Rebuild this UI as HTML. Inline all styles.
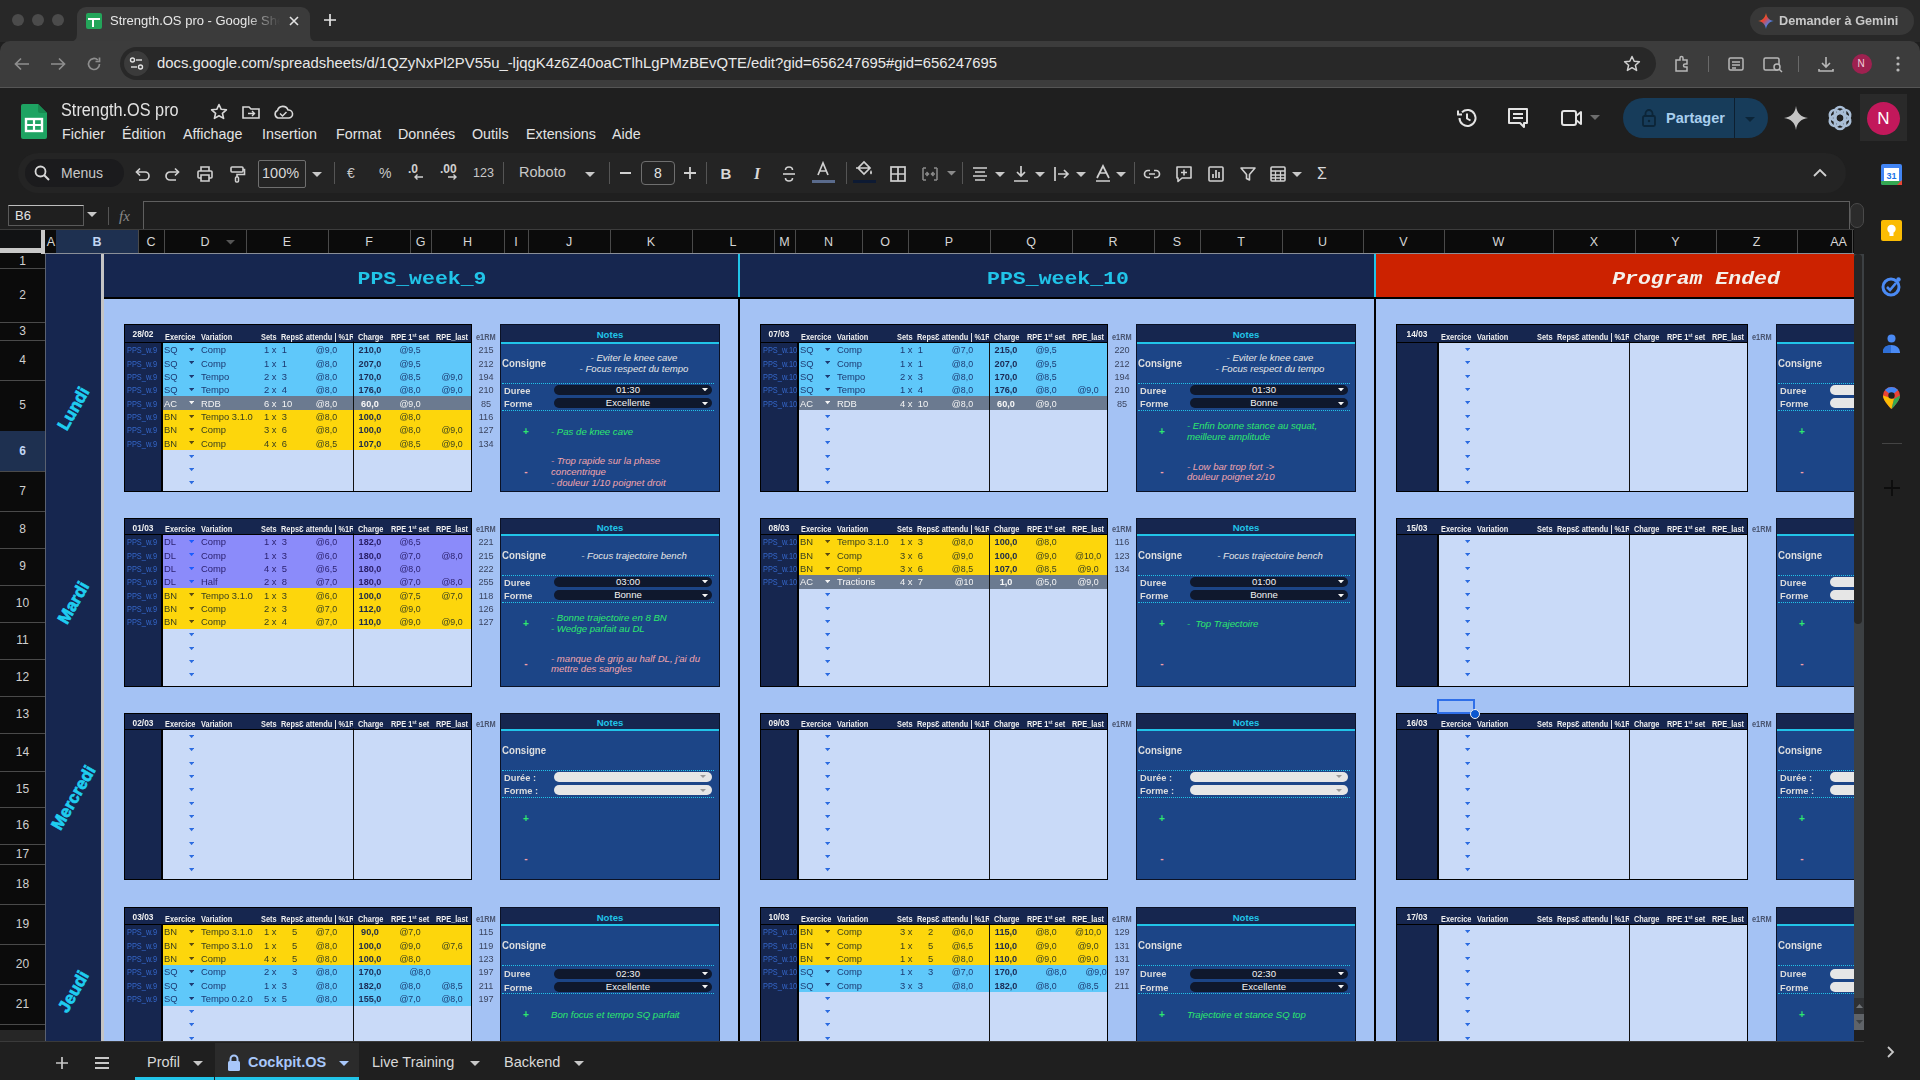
<!DOCTYPE html><html><head><meta charset="utf-8"><title>Strength.OS pro</title><style>
html,body{margin:0;padding:0;} body{width:1920px;height:1080px;overflow:hidden;position:relative;background:#1f1f1f;font-family:"Liberation Sans", sans-serif;} div{box-sizing:border-box;}
</style></head><body>
<div style="position:absolute;left:0px;top:0px;width:1920px;height:42px;background:#282828"></div>
<div style="position:absolute;left:12px;top:14px;width:12px;height:12px;background:#4b4b4b;border-radius:50%"></div>
<div style="position:absolute;left:32px;top:14px;width:12px;height:12px;background:#4b4b4b;border-radius:50%"></div>
<div style="position:absolute;left:52px;top:14px;width:12px;height:12px;background:#4b4b4b;border-radius:50%"></div>
<div style="position:absolute;left:77px;top:7px;width:233px;height:36px;background:#3b3b3b;border-radius:9px 9px 0 0"></div>
<svg style="position:absolute;left:69px;top:34px;" width="8" height="8" viewBox="0 0 8 8"><path d="M0 8 Q8 8 8 0 L8 8 Z" fill="#3b3b3b"/></svg>
<svg style="position:absolute;left:310px;top:34px;" width="8" height="8" viewBox="0 0 8 8"><path d="M8 8 Q0 8 0 0 L0 8 Z" fill="#3b3b3b"/></svg>
<div style="position:absolute;left:86px;top:13px;width:16px;height:16px;background:#23a55a;border-radius:2px"></div>
<div style="position:absolute;left:88px;top:18px;width:12px;height:2px;background:#fff"></div>
<div style="position:absolute;left:92px;top:18px;width:2px;height:9px;background:#fff"></div>
<div style="position:absolute;left:110px;top:12px;width:170px;overflow:hidden;white-space:nowrap;font-size:13px;line-height:18px;color:#e8e8e8;-webkit-mask-image:linear-gradient(90deg,#000 80%,transparent)">Strength.OS pro - Google Sheets</div>
<svg style="position:absolute;left:287px;top:14px;" width="14" height="14" viewBox="0 0 14 14"><path d="M3 3 L11 11 M11 3 L3 11" stroke="#e3e3e3" stroke-width="1.6"/></svg>
<svg style="position:absolute;left:322px;top:12px;" width="16" height="16" viewBox="0 0 16 16"><path d="M8 2 V14 M2 8 H14" stroke="#e3e3e3" stroke-width="1.7"/></svg>
<div style="position:absolute;left:1750px;top:7px;width:164px;height:28px;background:#383838;border-radius:14px"></div>
<svg style="position:absolute;left:1758px;top:13px;" width="16" height="16" viewBox="0 0 16 16"><path d="M8 0 C8.6 4.5 11.5 7.4 16 8 C11.5 8.6 8.6 11.5 8 16 C7.4 11.5 4.5 8.6 0 8 C4.5 7.4 7.4 4.5 8 0Z" fill="url(#gg)"/><defs><linearGradient id="gg" x1="0" y1="0" x2="1" y2="1"><stop offset="0" stop-color="#f4b400"/><stop offset="0.4" stop-color="#e94235"/><stop offset="0.7" stop-color="#4285f4"/><stop offset="1" stop-color="#34a853"/></linearGradient></defs></svg>
<div style="position:absolute;left:1779px;top:12.90px;line-height:16.2px;font-size:13.5px;color:#c8c8c8;font-weight:bold;white-space:nowrap;transform:scaleX(0.94);transform-origin:left">Demander à Gemini</div>
<div style="position:absolute;left:0px;top:41px;width:1920px;height:47px;background:#3c3c3c;border-radius:10px 10px 0 0"></div>
<svg style="position:absolute;left:12px;top:54px;" width="20" height="20" viewBox="0 0 20 20"><path d="M17 10 H4 M9 4.5 L3.5 10 L9 15.5" stroke="#8e8e8e" stroke-width="1.7" fill="none"/></svg>
<svg style="position:absolute;left:48px;top:54px;" width="20" height="20" viewBox="0 0 20 20"><path d="M3 10 H16 M11 4.5 L16.5 10 L11 15.5" stroke="#8e8e8e" stroke-width="1.7" fill="none"/></svg>
<svg style="position:absolute;left:84px;top:54px;" width="20" height="20" viewBox="0 0 20 20"><path d="M15.5 10 A5.5 5.5 0 1 1 13.8 6 M15.5 3.5 V7.5 H11.5" stroke="#8e8e8e" stroke-width="1.7" fill="none"/></svg>
<div style="position:absolute;left:120px;top:47px;width:1536px;height:33px;background:#282828;border-radius:17px"></div>
<div style="position:absolute;left:124px;top:51px;width:25px;height:25px;background:#3b3b3b;border-radius:50%"></div>
<svg style="position:absolute;left:128px;top:55px;" width="17" height="17" viewBox="0 0 17 17"><circle cx="4.5" cy="5" r="2" stroke="#e3e3e3" stroke-width="1.4" fill="none"/><path d="M8 5 H14" stroke="#e3e3e3" stroke-width="1.4"/><circle cx="12.5" cy="12" r="2" stroke="#e3e3e3" stroke-width="1.4" fill="none"/><path d="M3 12 H9" stroke="#e3e3e3" stroke-width="1.4"/></svg>
<div style="position:absolute;left:157px;top:55.09px;line-height:17.82px;font-size:14.85px;color:#e8e8e8;font-weight:normal;white-space:nowrap;">docs.google.com/spreadsheets/d/1QZyNxPl2PV55u_-ljqgK4z6Z40oaCTlhLgPMzBEvQTE/edit?gid=656247695#gid=656247695</div>
<svg style="position:absolute;left:1622px;top:54px;" width="20" height="20" viewBox="0 0 20 20"><path d="M10 2.5 L12.2 7.3 L17.4 7.8 L13.4 11.3 L14.6 16.4 L10 13.7 L5.4 16.4 L6.6 11.3 L2.6 7.8 L7.8 7.3 Z" stroke="#d0d0d0" stroke-width="1.5" fill="none" stroke-linejoin="round"/></svg>
<svg style="position:absolute;left:1672px;top:54px;" width="20" height="20" viewBox="0 0 20 20"><path d="M4 6 H8 V4 A1.5 1.5 0 0 1 11 4 V6 H15 V10 H13 A1.5 1.5 0 0 0 13 13 H15 V17 H4 Z" stroke="#b8b8b8" stroke-width="1.5" fill="none"/></svg>
<div style="position:absolute;left:1708px;top:56px;width:1px;height:16px;background:#6a6a6a"></div>
<svg style="position:absolute;left:1726px;top:54px;" width="20" height="20" viewBox="0 0 20 20"><rect x="3" y="4" width="14" height="12" rx="1.5" stroke="#b8b8b8" stroke-width="1.5" fill="none"/><path d="M6 8 H14 M6 11 H14 M6 14 H10" stroke="#b8b8b8" stroke-width="1.3"/></svg>
<svg style="position:absolute;left:1762px;top:54px;" width="22" height="20" viewBox="0 0 22 20"><rect x="2" y="4" width="15" height="12" rx="1.5" stroke="#b8b8b8" stroke-width="1.5" fill="none"/><circle cx="15" cy="13" r="3" stroke="#b8b8b8" stroke-width="1.5" fill="#3b3b3b"/><path d="M17 15 L20 18" stroke="#b8b8b8" stroke-width="1.5"/></svg>
<div style="position:absolute;left:1798px;top:56px;width:1px;height:16px;background:#6a6a6a"></div>
<svg style="position:absolute;left:1816px;top:54px;" width="20" height="20" viewBox="0 0 20 20"><path d="M10 3 V13 M6 9 L10 13 L14 9 M3 15 V17 H17 V15" stroke="#b8b8b8" stroke-width="1.6" fill="none"/></svg>
<div style="position:absolute;left:1852px;top:54px;width:20px;height:20px;background:#9e2150;border-radius:50%"></div>
<div style="position:absolute;left:1561px;width:600px;text-align:center;top:58.00px;line-height:12.0px;font-size:10px;color:#f3d0da;font-weight:normal;white-space:nowrap;">N</div>
<svg style="position:absolute;left:1890px;top:54px;" width="16" height="20" viewBox="0 0 16 20"><circle cx="8" cy="4" r="1.6" fill="#b8b8b8"/><circle cx="8" cy="10" r="1.6" fill="#b8b8b8"/><circle cx="8" cy="16" r="1.6" fill="#b8b8b8"/></svg>
<div style="position:absolute;left:0px;top:87px;width:1920px;height:1px;background:#555555"></div>
<div style="position:absolute;left:0px;top:88px;width:1920px;height:992px;background:#1f1f1f"></div>
<svg style="position:absolute;left:21px;top:104px;" width="26" height="35" viewBox="0 0 26 35"><path d="M0 2 A2 2 0 0 1 2 0 H17 L26 9 V33 A2 2 0 0 1 24 35 H2 A2 2 0 0 1 0 33 Z" fill="#1ea362"/><path d="M17 0 L26 9 H19 A2 2 0 0 1 17 7Z" fill="#178a50"/><rect x="5" y="15" width="16" height="12" fill="none" stroke="#fff" stroke-width="2.4"/><path d="M5 21 H21 M13 15 V27" stroke="#fff" stroke-width="2.2"/></svg>
<div style="position:absolute;left:61px;top:99.50px;line-height:21.0px;font-size:17.5px;color:#e3e3e3;font-weight:normal;white-space:nowrap;transform:scaleX(0.93);transform-origin:left">Strength.OS pro</div>
<svg style="position:absolute;left:209px;top:102px;" width="20" height="20" viewBox="0 0 20 20"><path d="M10 2.5 L12.2 7.3 L17.4 7.8 L13.4 11.3 L14.6 16.4 L10 13.7 L5.4 16.4 L6.6 11.3 L2.6 7.8 L7.8 7.3 Z" stroke="#d8d8d8" stroke-width="1.6" fill="none" stroke-linejoin="round"/></svg>
<svg style="position:absolute;left:241px;top:102px;" width="20" height="20" viewBox="0 0 20 20"><path d="M2 5 H8 L10 7 H18 V16 H2 Z" stroke="#d8d8d8" stroke-width="1.6" fill="none"/><path d="M7 11.5 H13 M11 9 L13.5 11.5 L11 14" stroke="#d8d8d8" stroke-width="1.4" fill="none"/></svg>
<svg style="position:absolute;left:272px;top:102px;" width="22" height="20" viewBox="0 0 22 20"><path d="M6 16 A4 4 0 0 1 5.5 8.5 A5.5 5.5 0 0 1 16 8 A4 4 0 0 1 17 16 Z" stroke="#d8d8d8" stroke-width="1.6" fill="none"/><path d="M8 11.5 L10.5 14 L14.5 10" stroke="#d8d8d8" stroke-width="1.5" fill="none"/></svg>
<div style="position:absolute;left:62px;top:126.42px;line-height:17.16px;font-size:14.3px;color:#e3e3e3;font-weight:normal;white-space:nowrap;">Fichier</div>
<div style="position:absolute;left:122px;top:126.42px;line-height:17.16px;font-size:14.3px;color:#e3e3e3;font-weight:normal;white-space:nowrap;">Édition</div>
<div style="position:absolute;left:183px;top:126.42px;line-height:17.16px;font-size:14.3px;color:#e3e3e3;font-weight:normal;white-space:nowrap;">Affichage</div>
<div style="position:absolute;left:262px;top:126.42px;line-height:17.16px;font-size:14.3px;color:#e3e3e3;font-weight:normal;white-space:nowrap;">Insertion</div>
<div style="position:absolute;left:336px;top:126.42px;line-height:17.16px;font-size:14.3px;color:#e3e3e3;font-weight:normal;white-space:nowrap;">Format</div>
<div style="position:absolute;left:398px;top:126.42px;line-height:17.16px;font-size:14.3px;color:#e3e3e3;font-weight:normal;white-space:nowrap;">Données</div>
<div style="position:absolute;left:472px;top:126.42px;line-height:17.16px;font-size:14.3px;color:#e3e3e3;font-weight:normal;white-space:nowrap;">Outils</div>
<div style="position:absolute;left:526px;top:126.42px;line-height:17.16px;font-size:14.3px;color:#e3e3e3;font-weight:normal;white-space:nowrap;">Extensions</div>
<div style="position:absolute;left:612px;top:126.42px;line-height:17.16px;font-size:14.3px;color:#e3e3e3;font-weight:normal;white-space:nowrap;">Aide</div>
<svg style="position:absolute;left:1455px;top:106px;" width="24" height="24" viewBox="0 0 24 24"><path d="M4.5 12 A8 8 0 1 0 7 6.2" stroke="#e3e3e3" stroke-width="2" fill="none"/><path d="M3 4.5 V8.5 H7" stroke="#e3e3e3" stroke-width="2" fill="none"/><path d="M12 7.5 V12.5 L15.5 14.5" stroke="#e3e3e3" stroke-width="2" fill="none"/></svg>
<svg style="position:absolute;left:1506px;top:106px;" width="24" height="24" viewBox="0 0 24 24"><path d="M3 3 H21 V17 H18 V21 L14 17 H3 Z" stroke="#e3e3e3" stroke-width="2" fill="none" stroke-linejoin="round"/><path d="M7 8 H17 M7 12 H17" stroke="#e3e3e3" stroke-width="1.8"/></svg>
<svg style="position:absolute;left:1559px;top:106px;" width="26" height="24" viewBox="0 0 26 24"><path d="M3 7 A2 2 0 0 1 5 5 H15 A2 2 0 0 1 17 7 V17 A2 2 0 0 1 15 19 H5 A2 2 0 0 1 3 17 Z" stroke="#e3e3e3" stroke-width="2" fill="none"/><path d="M17 10 L22 6 V18 L17 14" stroke="#e3e3e3" stroke-width="2" fill="none" stroke-linejoin="round"/></svg>
<svg style="position:absolute;left:1590px;top:115px;" width="10" height="6" viewBox="0 0 10 6"><path d="M0 0 H10 L5 5 Z" fill="#6d6d6d"/></svg>
<div style="position:absolute;left:1623px;top:98px;width:145px;height:40px;background:#173c5a;border-radius:20px"></div>
<div style="position:absolute;left:1734px;top:98px;width:1.2px;height:40px;background:#0d1f30"></div>
<svg style="position:absolute;left:1640px;top:108px;" width="18" height="20" viewBox="0 0 18 20"><rect x="3" y="8" width="12" height="10" rx="1.5" stroke="#0c2538" stroke-width="1.8" fill="none"/><path d="M5.5 8 V5.5 A3.5 3.5 0 0 1 12.5 5.5 V8" stroke="#0c2538" stroke-width="1.8" fill="none"/><circle cx="9" cy="13" r="1.2" fill="#0c2538"/></svg>
<div style="position:absolute;left:1666px;top:110.30px;line-height:17.4px;font-size:14.5px;color:#a9cfee;font-weight:bold;white-space:nowrap;">Partager</div>
<svg style="position:absolute;left:1745px;top:117px;" width="10" height="6" viewBox="0 0 10 6"><path d="M0 0 H10 L5 5 Z" fill="#0c2538"/></svg>
<svg style="position:absolute;left:1782px;top:104px;" width="28" height="28" viewBox="0 0 28 28"><path d="M14 2 C14.8 9 19 13.2 26 14 C19 14.8 14.8 19 14 26 C13.2 19 9 14.8 2 14 C9 13.2 13.2 9 14 2Z" fill="#c4c4c4"/></svg>
<svg style="position:absolute;left:1826px;top:104px;" width="28" height="28" viewBox="0 0 28 28"><g stroke="#a9bed6" stroke-width="2.6" fill="none"><rect x="9" y="3" width="10" height="16" rx="5"/><rect x="9" y="3" width="10" height="16" rx="5" transform="rotate(60 14 14)"/><rect x="9" y="3" width="10" height="16" rx="5" transform="rotate(120 14 14)"/><rect x="9" y="3" width="10" height="16" rx="5" transform="rotate(180 14 14)"/><rect x="9" y="3" width="10" height="16" rx="5" transform="rotate(240 14 14)"/><rect x="9" y="3" width="10" height="16" rx="5" transform="rotate(300 14 14)"/></g></svg>
<div style="position:absolute;left:1860px;top:94px;width:47px;height:47px;background:#2a2a2a"></div>
<div style="position:absolute;left:1867px;top:102px;width:33px;height:33px;background:#c2185b;border-radius:50%"></div>
<div style="position:absolute;left:1583.5px;width:600px;text-align:center;top:108.80px;line-height:20.4px;font-size:17px;color:#ffffff;font-weight:normal;white-space:nowrap;">N</div>
<div style="position:absolute;left:18px;top:153px;width:1828px;height:40px;background:#242424;border-radius:20px"></div>
<div style="position:absolute;left:25px;top:159px;width:99px;height:28px;background:#1b1b1d;border-radius:14px"></div>
<svg style="position:absolute;left:33px;top:164px;" width="18" height="18" viewBox="0 0 18 18"><circle cx="7.5" cy="7.5" r="5" stroke="#d8d8d8" stroke-width="1.8" fill="none"/><path d="M11 11 L16 16" stroke="#d8d8d8" stroke-width="2"/></svg>
<div style="position:absolute;left:61px;top:164.60px;line-height:16.8px;font-size:14px;color:#c8c8c8;font-weight:normal;white-space:nowrap;">Menus</div>
<svg style="position:absolute;left:132px;top:164px;" width="20" height="20" viewBox="0 0 20 20"><path d="M5 8 H13 A4 4 0 0 1 13 16 H7" stroke="#d0d0d0" stroke-width="1.7" fill="none"/><path d="M8 4.5 L4.5 8 L8 11.5" stroke="#d0d0d0" stroke-width="1.7" fill="none"/></svg>
<svg style="position:absolute;left:163px;top:164px;" width="20" height="20" viewBox="0 0 20 20"><path d="M15 8 H7 A4 4 0 0 0 7 16 H13" stroke="#d0d0d0" stroke-width="1.7" fill="none"/><path d="M12 4.5 L15.5 8 L12 11.5" stroke="#d0d0d0" stroke-width="1.7" fill="none"/></svg>
<svg style="position:absolute;left:195px;top:164px;" width="20" height="20" viewBox="0 0 20 20"><path d="M6 7 V3 H14 V7 M6 14 H4 A1 1 0 0 1 3 13 V8 A1 1 0 0 1 4 7 H16 A1 1 0 0 1 17 8 V13 A1 1 0 0 1 16 14 H14 M6 11 H14 V17 H6 Z" stroke="#d0d0d0" stroke-width="1.6" fill="none"/></svg>
<svg style="position:absolute;left:227px;top:164px;" width="20" height="20" viewBox="0 0 20 20"><rect x="4" y="3" width="12" height="5" rx="1" stroke="#d0d0d0" stroke-width="1.6" fill="none"/><path d="M16 5.5 H17.5 V10.5 H10 V13" stroke="#d0d0d0" stroke-width="1.6" fill="none"/><rect x="8.5" y="13" width="3" height="5" rx="1" stroke="#d0d0d0" stroke-width="1.5" fill="none"/></svg>
<div style="position:absolute;left:258px;top:160px;width:48px;height:28px;border:1px solid #6f6f6f;border-radius:2px"></div>
<div style="position:absolute;left:262px;top:165.30px;line-height:17.4px;font-size:14.5px;color:#d8d8d8;font-weight:normal;white-space:nowrap;">100%</div>
<svg style="position:absolute;left:312px;top:172px;" width="10" height="6" viewBox="0 0 10 6"><path d="M0 0 H10 L5 5 Z" fill="#c8c8c8"/></svg>
<div style="position:absolute;left:334px;top:162px;width:1px;height:22px;background:#555"></div>
<div style="position:absolute;left:347px;top:164.60px;line-height:16.8px;font-size:14px;color:#c8c8c8;font-weight:normal;white-space:nowrap;">€</div>
<div style="position:absolute;left:379px;top:164.60px;line-height:16.8px;font-size:14px;color:#c8c8c8;font-weight:normal;white-space:nowrap;">%</div>
<svg style="position:absolute;left:406px;top:161px;" width="22" height="22" viewBox="0 0 22 22"><text x="2" y="12" font-size="12" fill="#d0d0d0" font-family="Liberation Sans" font-weight="bold">.0</text><path d="M17 16 H9 M11.5 13.5 L9 16 L11.5 18.5" stroke="#d0d0d0" stroke-width="1.4" fill="none"/></svg>
<svg style="position:absolute;left:439px;top:161px;" width="22" height="22" viewBox="0 0 22 22"><text x="1" y="12" font-size="12" fill="#d0d0d0" font-family="Liberation Sans" font-weight="bold">.00</text><path d="M9 16 H17 M14.5 13.5 L17 16 L14.5 18.5" stroke="#d0d0d0" stroke-width="1.4" fill="none"/></svg>
<div style="position:absolute;left:473px;top:165.50px;line-height:15.0px;font-size:12.5px;color:#c8c8c8;font-weight:normal;white-space:nowrap;">123</div>
<div style="position:absolute;left:503px;top:162px;width:1px;height:22px;background:#555"></div>
<div style="position:absolute;left:519px;top:164.30px;line-height:17.4px;font-size:14.5px;color:#c8c8c8;font-weight:normal;white-space:nowrap;">Roboto</div>
<svg style="position:absolute;left:585px;top:172px;" width="10" height="6" viewBox="0 0 10 6"><path d="M0 0 H10 L5 5 Z" fill="#c8c8c8"/></svg>
<div style="position:absolute;left:609px;top:162px;width:1px;height:22px;background:#555"></div>
<div style="position:absolute;left:620px;top:172px;width:11px;height:2px;background:#d0d0d0"></div>
<div style="position:absolute;left:641px;top:161px;width:34px;height:24px;border:1px solid #6f6f6f;border-radius:4px"></div>
<div style="position:absolute;left:358px;width:600px;text-align:center;top:164.60px;line-height:16.8px;font-size:14px;color:#e3e3e3;font-weight:normal;white-space:nowrap;">8</div>
<svg style="position:absolute;left:682px;top:165px;" width="16" height="16" viewBox="0 0 16 16"><path d="M8 2 V14 M2 8 H14" stroke="#d0d0d0" stroke-width="1.8"/></svg>
<div style="position:absolute;left:706px;top:162px;width:1px;height:22px;background:#555"></div>
<div style="position:absolute;left:426px;width:600px;text-align:center;top:165.00px;line-height:18.0px;font-size:15px;color:#d8d8d8;font-weight:bold;white-space:nowrap;">B</div>
<div style="position:absolute;left:457px;width:600px;text-align:center;top:164.40px;line-height:19.2px;font-size:16px;color:#d8d8d8;font-weight:bold;white-space:nowrap;font-family:'Liberation Serif',serif"><i>I</i></div>
<svg style="position:absolute;left:779px;top:164px;" width="20" height="20" viewBox="0 0 20 20"><path d="M4 10 H16" stroke="#d0d0d0" stroke-width="1.6"/><path d="M13.5 6 A3.5 3 0 0 0 6.5 6 M6.5 14 A3.5 3 0 0 0 13.5 14" stroke="#d0d0d0" stroke-width="1.6" fill="none"/></svg>
<svg style="position:absolute;left:813px;top:161px;" width="20" height="20" viewBox="0 0 20 20"><path d="M5 14 L10 2 L15 14 M7 10 H13" stroke="#d0d0d0" stroke-width="1.7" fill="none"/></svg>
<div style="position:absolute;left:812px;top:180px;width:23px;height:3px;background:#5a6b8c"></div>
<div style="position:absolute;left:846px;top:162px;width:1px;height:22px;background:#555"></div>
<svg style="position:absolute;left:854px;top:159px;" width="20" height="20" viewBox="0 0 20 20"><path d="M4 9 L10 3 L16 9 L10 15 Z M2 9 H16" stroke="#d0d0d0" stroke-width="1.7" fill="none"/><path d="M17 11 Q19 14 17 15.5 Q15 14 17 11Z" fill="#d0d0d0"/></svg>
<div style="position:absolute;left:853px;top:180px;width:23px;height:3px;background:#0d1a33"></div>
<svg style="position:absolute;left:888px;top:164px;" width="20" height="20" viewBox="0 0 20 20"><rect x="3" y="3" width="14" height="14" stroke="#d0d0d0" stroke-width="1.7" fill="none"/><path d="M10 3 V17 M3 10 H17" stroke="#d0d0d0" stroke-width="1.7"/></svg>
<svg style="position:absolute;left:920px;top:164px;" width="20" height="20" viewBox="0 0 20 20"><path d="M3 4 V16 M17 4 V16 M5 10 H8 M12 10 H15 M6.5 8 L8.5 10 L6.5 12 M13.5 8 L11.5 10 L13.5 12 M3 4 H6 M3 16 H6 M14 4 H17 M14 16 H17" stroke="#8a8a8a" stroke-width="1.5" fill="none"/></svg>
<svg style="position:absolute;left:947px;top:171px;" width="9" height="6" viewBox="0 0 9 6"><path d="M0 0 H9 L4.5 4.5 Z" fill="#8a8a8a"/></svg>
<div style="position:absolute;left:962px;top:162px;width:1px;height:22px;background:#555"></div>
<svg style="position:absolute;left:970px;top:164px;" width="20" height="20" viewBox="0 0 20 20"><path d="M3 4 H17 M5 8 H15 M3 12 H17 M5 16 H15" stroke="#d0d0d0" stroke-width="1.7"/></svg>
<svg style="position:absolute;left:995px;top:172px;" width="10" height="6" viewBox="0 0 10 6"><path d="M0 0 H10 L5 5 Z" fill="#c8c8c8"/></svg>
<svg style="position:absolute;left:1011px;top:164px;" width="20" height="20" viewBox="0 0 20 20"><path d="M10 2 V12 M6 8 L10 12 L14 8 M3 17 H17" stroke="#d0d0d0" stroke-width="1.7" fill="none"/></svg>
<svg style="position:absolute;left:1035px;top:172px;" width="10" height="6" viewBox="0 0 10 6"><path d="M0 0 H10 L5 5 Z" fill="#c8c8c8"/></svg>
<svg style="position:absolute;left:1052px;top:164px;" width="20" height="20" viewBox="0 0 20 20"><path d="M3 3 V17 M6 10 H16 M12 6 L16 10 L12 14" stroke="#d0d0d0" stroke-width="1.7" fill="none"/></svg>
<svg style="position:absolute;left:1076px;top:172px;" width="10" height="6" viewBox="0 0 10 6"><path d="M0 0 H10 L5 5 Z" fill="#c8c8c8"/></svg>
<svg style="position:absolute;left:1093px;top:164px;" width="20" height="20" viewBox="0 0 20 20"><path d="M4 14 L10 2 L16 14 M6.5 9 H13.5" stroke="#d0d0d0" stroke-width="1.7" fill="none"/><path d="M3 17 H17" stroke="#d0d0d0" stroke-width="1.5"/></svg>
<svg style="position:absolute;left:1116px;top:172px;" width="10" height="6" viewBox="0 0 10 6"><path d="M0 0 H10 L5 5 Z" fill="#c8c8c8"/></svg>
<div style="position:absolute;left:1134px;top:162px;width:1px;height:22px;background:#555"></div>
<svg style="position:absolute;left:1142px;top:164px;" width="20" height="20" viewBox="0 0 20 20"><path d="M8 6.5 H6 A3.5 3.5 0 0 0 6 13.5 H8 M12 6.5 H14 A3.5 3.5 0 0 1 14 13.5 H12 M7 10 H13" stroke="#d0d0d0" stroke-width="1.7" fill="none"/></svg>
<svg style="position:absolute;left:1174px;top:164px;" width="20" height="20" viewBox="0 0 20 20"><path d="M3 3 H17 V14 H8 L4 17.5 V14 H3 Z" stroke="#d0d0d0" stroke-width="1.6" fill="none" stroke-linejoin="round"/><path d="M10 5.5 V11.5 M7 8.5 H13" stroke="#d0d0d0" stroke-width="1.6"/></svg>
<svg style="position:absolute;left:1206px;top:164px;" width="20" height="20" viewBox="0 0 20 20"><rect x="3" y="3" width="14" height="14" rx="1" stroke="#d0d0d0" stroke-width="1.6" fill="none"/><path d="M7 14 V10 M10 14 V6 M13 14 V8" stroke="#d0d0d0" stroke-width="1.7"/></svg>
<svg style="position:absolute;left:1238px;top:164px;" width="20" height="20" viewBox="0 0 20 20"><path d="M3 4 H17 L11.5 10.5 V16 L8.5 14.5 V10.5 Z" stroke="#d0d0d0" stroke-width="1.6" fill="none" stroke-linejoin="round"/></svg>
<svg style="position:absolute;left:1268px;top:164px;" width="20" height="20" viewBox="0 0 20 20"><rect x="3" y="3" width="14" height="14" rx="1" stroke="#d0d0d0" stroke-width="1.6" fill="none"/><path d="M3 7 H17 M3 11 H17 M3 14 H17 M7.5 7 V17 M12.5 7 V17" stroke="#d0d0d0" stroke-width="1.3"/></svg>
<svg style="position:absolute;left:1292px;top:172px;" width="10" height="6" viewBox="0 0 10 6"><path d="M0 0 H10 L5 5 Z" fill="#c8c8c8"/></svg>
<div style="position:absolute;left:1022px;width:600px;text-align:center;top:164.40px;line-height:19.2px;font-size:16px;color:#d8d8d8;font-weight:normal;white-space:nowrap;">Σ</div>
<svg style="position:absolute;left:1811px;top:167px;" width="18" height="12" viewBox="0 0 18 12"><path d="M3 9 L9 3 L15 9" stroke="#d0d0d0" stroke-width="1.8" fill="none"/></svg>
<div style="position:absolute;left:8px;top:205px;width:76px;height:21px;border:1px solid #5a5a5a;border-top-color:#bdbdbd"></div>
<div style="position:absolute;left:15px;top:208.20px;line-height:15.6px;font-size:13px;color:#e3e3e3;font-weight:normal;white-space:nowrap;">B6</div>
<svg style="position:absolute;left:87px;top:212px;" width="10" height="6" viewBox="0 0 10 6"><path d="M0 0 H10 L5 5 Z" fill="#c8c8c8"/></svg>
<div style="position:absolute;left:108px;top:207px;width:1px;height:18px;background:#555"></div>
<div style="position:absolute;left:119px;top:207.00px;line-height:18.0px;font-size:15px;color:#8a8a8a;font-weight:normal;white-space:nowrap;font-family:'Liberation Serif',serif"><i>fx</i></div>
<div style="position:absolute;left:143px;top:201px;width:1707px;height:29px;border:1px solid #5f5f5f;border-bottom:none;background:#1f1f1f"></div>
<div style="position:absolute;left:1850px;top:203px;width:14px;height:25px;border:1px solid #4a4a4a;border-radius:7px;background:#2b2b2b"></div>
<div style="position:absolute;left:0px;top:229px;width:1854px;height:25px;background:#0b0b0b"></div>
<div style="position:absolute;left:0px;top:229px;width:1854px;height:1px;background:#3c3c3c"></div>
<div style="position:absolute;left:-249.0px;width:600px;text-align:center;top:234.50px;line-height:15.0px;font-size:12.5px;color:#d6d6d6;font-weight:normal;white-space:nowrap;">A</div>
<div style="position:absolute;left:56px;top:230px;width:1px;height:23px;background:#4a4a4a"></div>
<div style="position:absolute;left:56px;top:230px;width:82px;height:23px;background:#1e3050"></div>
<div style="position:absolute;left:-203.0px;width:600px;text-align:center;top:234.50px;line-height:15.0px;font-size:12.5px;color:#c2d7f5;font-weight:bold;white-space:nowrap;">B</div>
<div style="position:absolute;left:138px;top:230px;width:1px;height:23px;background:#4a4a4a"></div>
<div style="position:absolute;left:-149.0px;width:600px;text-align:center;top:234.50px;line-height:15.0px;font-size:12.5px;color:#d6d6d6;font-weight:normal;white-space:nowrap;">C</div>
<div style="position:absolute;left:164px;top:230px;width:1px;height:23px;background:#4a4a4a"></div>
<div style="position:absolute;left:-95.0px;width:600px;text-align:center;top:234.50px;line-height:15.0px;font-size:12.5px;color:#d6d6d6;font-weight:normal;white-space:nowrap;">D</div>
<div style="position:absolute;left:246px;top:230px;width:1px;height:23px;background:#4a4a4a"></div>
<div style="position:absolute;left:-13.0px;width:600px;text-align:center;top:234.50px;line-height:15.0px;font-size:12.5px;color:#d6d6d6;font-weight:normal;white-space:nowrap;">E</div>
<div style="position:absolute;left:328px;top:230px;width:1px;height:23px;background:#4a4a4a"></div>
<div style="position:absolute;left:69.0px;width:600px;text-align:center;top:234.50px;line-height:15.0px;font-size:12.5px;color:#d6d6d6;font-weight:normal;white-space:nowrap;">F</div>
<div style="position:absolute;left:410px;top:230px;width:1px;height:23px;background:#4a4a4a"></div>
<div style="position:absolute;left:120.5px;width:600px;text-align:center;top:234.50px;line-height:15.0px;font-size:12.5px;color:#d6d6d6;font-weight:normal;white-space:nowrap;">G</div>
<div style="position:absolute;left:431px;top:230px;width:1px;height:23px;background:#4a4a4a"></div>
<div style="position:absolute;left:167.5px;width:600px;text-align:center;top:234.50px;line-height:15.0px;font-size:12.5px;color:#d6d6d6;font-weight:normal;white-space:nowrap;">H</div>
<div style="position:absolute;left:504px;top:230px;width:1px;height:23px;background:#4a4a4a"></div>
<div style="position:absolute;left:216.0px;width:600px;text-align:center;top:234.50px;line-height:15.0px;font-size:12.5px;color:#d6d6d6;font-weight:normal;white-space:nowrap;">I</div>
<div style="position:absolute;left:528px;top:230px;width:1px;height:23px;background:#4a4a4a"></div>
<div style="position:absolute;left:269.0px;width:600px;text-align:center;top:234.50px;line-height:15.0px;font-size:12.5px;color:#d6d6d6;font-weight:normal;white-space:nowrap;">J</div>
<div style="position:absolute;left:610px;top:230px;width:1px;height:23px;background:#4a4a4a"></div>
<div style="position:absolute;left:351.0px;width:600px;text-align:center;top:234.50px;line-height:15.0px;font-size:12.5px;color:#d6d6d6;font-weight:normal;white-space:nowrap;">K</div>
<div style="position:absolute;left:692px;top:230px;width:1px;height:23px;background:#4a4a4a"></div>
<div style="position:absolute;left:433.0px;width:600px;text-align:center;top:234.50px;line-height:15.0px;font-size:12.5px;color:#d6d6d6;font-weight:normal;white-space:nowrap;">L</div>
<div style="position:absolute;left:774px;top:230px;width:1px;height:23px;background:#4a4a4a"></div>
<div style="position:absolute;left:484.5px;width:600px;text-align:center;top:234.50px;line-height:15.0px;font-size:12.5px;color:#d6d6d6;font-weight:normal;white-space:nowrap;">M</div>
<div style="position:absolute;left:795px;top:230px;width:1px;height:23px;background:#4a4a4a"></div>
<div style="position:absolute;left:528.5px;width:600px;text-align:center;top:234.50px;line-height:15.0px;font-size:12.5px;color:#d6d6d6;font-weight:normal;white-space:nowrap;">N</div>
<div style="position:absolute;left:862px;top:230px;width:1px;height:23px;background:#4a4a4a"></div>
<div style="position:absolute;left:585.0px;width:600px;text-align:center;top:234.50px;line-height:15.0px;font-size:12.5px;color:#d6d6d6;font-weight:normal;white-space:nowrap;">O</div>
<div style="position:absolute;left:908px;top:230px;width:1px;height:23px;background:#4a4a4a"></div>
<div style="position:absolute;left:649.0px;width:600px;text-align:center;top:234.50px;line-height:15.0px;font-size:12.5px;color:#d6d6d6;font-weight:normal;white-space:nowrap;">P</div>
<div style="position:absolute;left:990px;top:230px;width:1px;height:23px;background:#4a4a4a"></div>
<div style="position:absolute;left:731.0px;width:600px;text-align:center;top:234.50px;line-height:15.0px;font-size:12.5px;color:#d6d6d6;font-weight:normal;white-space:nowrap;">Q</div>
<div style="position:absolute;left:1072px;top:230px;width:1px;height:23px;background:#4a4a4a"></div>
<div style="position:absolute;left:813.0px;width:600px;text-align:center;top:234.50px;line-height:15.0px;font-size:12.5px;color:#d6d6d6;font-weight:normal;white-space:nowrap;">R</div>
<div style="position:absolute;left:1154px;top:230px;width:1px;height:23px;background:#4a4a4a"></div>
<div style="position:absolute;left:877.0px;width:600px;text-align:center;top:234.50px;line-height:15.0px;font-size:12.5px;color:#d6d6d6;font-weight:normal;white-space:nowrap;">S</div>
<div style="position:absolute;left:1200px;top:230px;width:1px;height:23px;background:#4a4a4a"></div>
<div style="position:absolute;left:941.0px;width:600px;text-align:center;top:234.50px;line-height:15.0px;font-size:12.5px;color:#d6d6d6;font-weight:normal;white-space:nowrap;">T</div>
<div style="position:absolute;left:1282px;top:230px;width:1px;height:23px;background:#4a4a4a"></div>
<div style="position:absolute;left:1022.5px;width:600px;text-align:center;top:234.50px;line-height:15.0px;font-size:12.5px;color:#d6d6d6;font-weight:normal;white-space:nowrap;">U</div>
<div style="position:absolute;left:1363px;top:230px;width:1px;height:23px;background:#4a4a4a"></div>
<div style="position:absolute;left:1103.5px;width:600px;text-align:center;top:234.50px;line-height:15.0px;font-size:12.5px;color:#d6d6d6;font-weight:normal;white-space:nowrap;">V</div>
<div style="position:absolute;left:1444px;top:230px;width:1px;height:23px;background:#4a4a4a"></div>
<div style="position:absolute;left:1198.5px;width:600px;text-align:center;top:234.50px;line-height:15.0px;font-size:12.5px;color:#d6d6d6;font-weight:normal;white-space:nowrap;">W</div>
<div style="position:absolute;left:1553px;top:230px;width:1px;height:23px;background:#4a4a4a"></div>
<div style="position:absolute;left:1294.0px;width:600px;text-align:center;top:234.50px;line-height:15.0px;font-size:12.5px;color:#d6d6d6;font-weight:normal;white-space:nowrap;">X</div>
<div style="position:absolute;left:1635px;top:230px;width:1px;height:23px;background:#4a4a4a"></div>
<div style="position:absolute;left:1375.5px;width:600px;text-align:center;top:234.50px;line-height:15.0px;font-size:12.5px;color:#d6d6d6;font-weight:normal;white-space:nowrap;">Y</div>
<div style="position:absolute;left:1716px;top:230px;width:1px;height:23px;background:#4a4a4a"></div>
<div style="position:absolute;left:1456.5px;width:600px;text-align:center;top:234.50px;line-height:15.0px;font-size:12.5px;color:#d6d6d6;font-weight:normal;white-space:nowrap;">Z</div>
<div style="position:absolute;left:1797px;top:230px;width:1px;height:23px;background:#4a4a4a"></div>
<div style="position:absolute;left:1538.5px;width:600px;text-align:center;top:234.50px;line-height:15.0px;font-size:12.5px;color:#d6d6d6;font-weight:normal;white-space:nowrap;">AA</div>
<div style="position:absolute;left:1852px;top:230px;width:1px;height:23px;background:#4a4a4a"></div>
<div style="position:absolute;left:225px;top:237px;width:0px;height:0px;"></div>
<svg style="position:absolute;left:226px;top:240px;" width="9" height="5" viewBox="0 0 9 5"><path d="M0 0 H9 L4.5 4.5 Z" fill="#555"/></svg>
<div style="position:absolute;left:0px;top:230px;width:41px;height:19px;background:#111214"></div>
<div style="position:absolute;left:41px;top:230px;width:4px;height:24px;background:#c8c8c8"></div>
<div style="position:absolute;left:0px;top:248px;width:45px;height:5px;background:#c8c8c8"></div>
<div style="position:absolute;left:45px;top:253px;width:1809px;height:1px;background:#8a8f98"></div>
<div style="position:absolute;left:0px;top:254px;width:45px;height:787px;background:#0b0b0b"></div>
<div style="position:absolute;left:-277.5px;width:600px;text-align:center;top:253.80px;line-height:14.399999999999999px;font-size:12px;color:#d0d0d0;font-weight:normal;white-space:nowrap;">1</div>
<div style="position:absolute;left:0px;top:268px;width:45px;height:1px;background:#4a4a4a"></div>
<div style="position:absolute;left:-277.5px;width:600px;text-align:center;top:287.80px;line-height:14.399999999999999px;font-size:12px;color:#d0d0d0;font-weight:normal;white-space:nowrap;">2</div>
<div style="position:absolute;left:0px;top:322px;width:45px;height:1px;background:#4a4a4a"></div>
<div style="position:absolute;left:-277.5px;width:600px;text-align:center;top:323.80px;line-height:14.399999999999999px;font-size:12px;color:#d0d0d0;font-weight:normal;white-space:nowrap;">3</div>
<div style="position:absolute;left:0px;top:340px;width:45px;height:1px;background:#4a4a4a"></div>
<div style="position:absolute;left:-277.5px;width:600px;text-align:center;top:352.80px;line-height:14.399999999999999px;font-size:12px;color:#d0d0d0;font-weight:normal;white-space:nowrap;">4</div>
<div style="position:absolute;left:0px;top:380px;width:45px;height:1px;background:#4a4a4a"></div>
<div style="position:absolute;left:-277.5px;width:600px;text-align:center;top:398.30px;line-height:14.399999999999999px;font-size:12px;color:#d0d0d0;font-weight:normal;white-space:nowrap;">5</div>
<div style="position:absolute;left:0px;top:431px;width:45px;height:1px;background:#4a4a4a"></div>
<div style="position:absolute;left:0px;top:431px;width:45px;height:40px;background:#1e3050"></div>
<div style="position:absolute;left:-277.5px;width:600px;text-align:center;top:443.80px;line-height:14.399999999999999px;font-size:12px;color:#c2d7f5;font-weight:bold;white-space:nowrap;">6</div>
<div style="position:absolute;left:0px;top:471px;width:45px;height:1px;background:#4a4a4a"></div>
<div style="position:absolute;left:-277.5px;width:600px;text-align:center;top:483.80px;line-height:14.399999999999999px;font-size:12px;color:#d0d0d0;font-weight:normal;white-space:nowrap;">7</div>
<div style="position:absolute;left:0px;top:511px;width:45px;height:1px;background:#4a4a4a"></div>
<div style="position:absolute;left:-277.5px;width:600px;text-align:center;top:522.30px;line-height:14.399999999999999px;font-size:12px;color:#d0d0d0;font-weight:normal;white-space:nowrap;">8</div>
<div style="position:absolute;left:0px;top:548px;width:45px;height:1px;background:#4a4a4a"></div>
<div style="position:absolute;left:-277.5px;width:600px;text-align:center;top:559.30px;line-height:14.399999999999999px;font-size:12px;color:#d0d0d0;font-weight:normal;white-space:nowrap;">9</div>
<div style="position:absolute;left:0px;top:585px;width:45px;height:1px;background:#4a4a4a"></div>
<div style="position:absolute;left:-277.5px;width:600px;text-align:center;top:596.30px;line-height:14.399999999999999px;font-size:12px;color:#d0d0d0;font-weight:normal;white-space:nowrap;">10</div>
<div style="position:absolute;left:0px;top:622px;width:45px;height:1px;background:#4a4a4a"></div>
<div style="position:absolute;left:-277.5px;width:600px;text-align:center;top:633.30px;line-height:14.399999999999999px;font-size:12px;color:#d0d0d0;font-weight:normal;white-space:nowrap;">11</div>
<div style="position:absolute;left:0px;top:659px;width:45px;height:1px;background:#4a4a4a"></div>
<div style="position:absolute;left:-277.5px;width:600px;text-align:center;top:670.30px;line-height:14.399999999999999px;font-size:12px;color:#d0d0d0;font-weight:normal;white-space:nowrap;">12</div>
<div style="position:absolute;left:0px;top:696px;width:45px;height:1px;background:#4a4a4a"></div>
<div style="position:absolute;left:-277.5px;width:600px;text-align:center;top:707.30px;line-height:14.399999999999999px;font-size:12px;color:#d0d0d0;font-weight:normal;white-space:nowrap;">13</div>
<div style="position:absolute;left:0px;top:733px;width:45px;height:1px;background:#4a4a4a"></div>
<div style="position:absolute;left:-277.5px;width:600px;text-align:center;top:744.80px;line-height:14.399999999999999px;font-size:12px;color:#d0d0d0;font-weight:normal;white-space:nowrap;">14</div>
<div style="position:absolute;left:0px;top:771px;width:45px;height:1px;background:#4a4a4a"></div>
<div style="position:absolute;left:-277.5px;width:600px;text-align:center;top:781.80px;line-height:14.399999999999999px;font-size:12px;color:#d0d0d0;font-weight:normal;white-space:nowrap;">15</div>
<div style="position:absolute;left:0px;top:807px;width:45px;height:1px;background:#4a4a4a"></div>
<div style="position:absolute;left:-277.5px;width:600px;text-align:center;top:818.30px;line-height:14.399999999999999px;font-size:12px;color:#d0d0d0;font-weight:normal;white-space:nowrap;">16</div>
<div style="position:absolute;left:0px;top:844px;width:45px;height:1px;background:#4a4a4a"></div>
<div style="position:absolute;left:-277.5px;width:600px;text-align:center;top:846.80px;line-height:14.399999999999999px;font-size:12px;color:#d0d0d0;font-weight:normal;white-space:nowrap;">17</div>
<div style="position:absolute;left:0px;top:864px;width:45px;height:1px;background:#4a4a4a"></div>
<div style="position:absolute;left:-277.5px;width:600px;text-align:center;top:876.80px;line-height:14.399999999999999px;font-size:12px;color:#d0d0d0;font-weight:normal;white-space:nowrap;">18</div>
<div style="position:absolute;left:0px;top:904px;width:45px;height:1px;background:#4a4a4a"></div>
<div style="position:absolute;left:-277.5px;width:600px;text-align:center;top:916.80px;line-height:14.399999999999999px;font-size:12px;color:#d0d0d0;font-weight:normal;white-space:nowrap;">19</div>
<div style="position:absolute;left:0px;top:944px;width:45px;height:1px;background:#4a4a4a"></div>
<div style="position:absolute;left:-277.5px;width:600px;text-align:center;top:956.80px;line-height:14.399999999999999px;font-size:12px;color:#d0d0d0;font-weight:normal;white-space:nowrap;">20</div>
<div style="position:absolute;left:0px;top:984px;width:45px;height:1px;background:#4a4a4a"></div>
<div style="position:absolute;left:-277.5px;width:600px;text-align:center;top:996.80px;line-height:14.399999999999999px;font-size:12px;color:#d0d0d0;font-weight:normal;white-space:nowrap;">21</div>
<div style="position:absolute;left:0px;top:1024px;width:45px;height:1px;background:#4a4a4a"></div>
<div style="position:absolute;left:0px;top:1030px;width:45px;height:11px;background:#262626"></div>
<div style="position:absolute;left:45px;top:254px;width:1px;height:787px;background:#5a6170"></div>
<div style="position:absolute;left:46px;top:254px;width:55px;height:787px;background:#16264f"></div>
<div style="position:absolute;left:101px;top:254px;width:3px;height:787px;background:#c4c4c4"></div>
<div style="position:absolute;left:104px;top:254px;width:1750px;height:43px;background:#16264f"></div>
<div style="position:absolute;left:1376px;top:254px;width:478px;height:43px;background:#cc2200"></div>
<div style="position:absolute;left:104px;top:297px;width:1750px;height:2px;background:#000"></div>
<div style="position:absolute;left:104px;top:299px;width:1750px;height:742px;background:#a4c2f4"></div>
<div style="position:absolute;left:738px;top:254px;width:2px;height:43px;background:#21c4e8"></div>
<div style="position:absolute;left:738px;top:299px;width:2px;height:742px;background:#000"></div>
<div style="position:absolute;left:1374px;top:254px;width:2px;height:43px;background:#21c4e8"></div>
<div style="position:absolute;left:1374px;top:299px;width:2px;height:742px;background:#000"></div>
<div style="position:absolute;left:122px;width:600px;text-align:center;top:266.60px;line-height:25.8px;font-size:21.5px;color:#21c4e8;font-weight:bold;white-space:nowrap;font-family:'Liberation Mono', monospace;transform:scaleY(0.88)">PPS_week_9</div>
<div style="position:absolute;left:758px;width:600px;text-align:center;top:266.60px;line-height:25.8px;font-size:21.5px;color:#21c4e8;font-weight:bold;white-space:nowrap;font-family:'Liberation Mono', monospace;transform:scaleY(0.88)">PPS_week_10</div>
<div style="position:absolute;left:1396px;width:600px;text-align:center;top:266.60px;line-height:25.8px;font-size:21.5px;color:#f5f0ea;font-weight:bold;white-space:nowrap;font-family:'Liberation Mono', monospace;transform:scaleY(0.88)"><i>Program Ended</i></div>
<div style="position:absolute;left:-26px;top:396.5px;width:200px;height:24px;line-height:24px;text-align:center;font-size:17px;font-weight:bold;color:#1fcdf0;-webkit-text-stroke:0.7px #1fcdf0;transform:rotate(-60deg);white-space:nowrap">Lundi</div>
<div style="position:absolute;left:-26px;top:590.5px;width:200px;height:24px;line-height:24px;text-align:center;font-size:17px;font-weight:bold;color:#1fcdf0;-webkit-text-stroke:0.7px #1fcdf0;transform:rotate(-60deg);white-space:nowrap">Mardi</div>
<div style="position:absolute;left:-26px;top:785.5px;width:200px;height:24px;line-height:24px;text-align:center;font-size:17px;font-weight:bold;color:#1fcdf0;-webkit-text-stroke:0.7px #1fcdf0;transform:rotate(-60deg);white-space:nowrap">Mercredi</div>
<div style="position:absolute;left:-26px;top:979.5px;width:200px;height:24px;line-height:24px;text-align:center;font-size:17px;font-weight:bold;color:#1fcdf0;-webkit-text-stroke:0.7px #1fcdf0;transform:rotate(-60deg);white-space:nowrap">Jeudi</div>
<div style="position:absolute;left:124px;top:324px;width:348px;height:168px;background:#c9daf8"></div>
<div style="position:absolute;left:124px;top:324px;width:348px;height:19px;background:#16264f"></div>
<div style="position:absolute;left:124px;top:324px;width:38px;height:168px;background:#16264f"></div>
<div style="position:absolute;left:162px;top:343.0px;width:310px;height:13.76px;background:#5fc8fa"></div>
<div style="position:absolute;left:126.50px;top:344.28px;line-height:12px;font-size:8.6px;color:#3466c8;font-weight:normal;white-space:nowrap;transform:scaleX(0.86);transform-origin:left;">PPS_w.9</div>
<div style="position:absolute;left:164.20px;top:344.28px;line-height:12px;font-size:9.6px;color:#1d3a72;font-weight:normal;white-space:nowrap;transform:scaleX(0.98);transform-origin:left;">SQ</div>
<svg style="position:absolute;left:188.9px;top:347.88px;" width="5.2" height="3.2" viewBox="0 0 5.2 3.2"><path d="M0 0 H5.2 L2.6 3.2 Z" fill="#1d3a72"/></svg>
<div style="position:absolute;left:200.50px;top:344.28px;line-height:12px;font-size:9.6px;color:#1d3a72;font-weight:normal;white-space:nowrap;transform:scaleX(0.98);transform-origin:left;">Comp</div>
<div style="position:absolute;left:263.50px;top:344.28px;line-height:12px;font-size:9.6px;color:#1d3a72;font-weight:normal;white-space:nowrap;transform:scaleX(0.98);transform-origin:left;">1 x&nbsp; 1</div>
<div style="position:absolute;right:1583.00px;text-align:right;top:344.28px;line-height:12px;font-size:9.6px;color:#1d3a72;font-weight:normal;white-space:nowrap;transform:scaleX(0.92);transform-origin:right;">@9,0</div>
<div style="position:absolute;left:270.00px;width:200px;text-align:center;top:344.28px;line-height:12px;font-size:9.6px;color:#1b2b55;font-weight:bold;white-space:nowrap;transform:scaleX(0.95);transform-origin:center;">210,0</div>
<div style="position:absolute;left:309.50px;width:200px;text-align:center;top:344.28px;line-height:12px;font-size:9.6px;color:#1d3a72;font-weight:normal;white-space:nowrap;transform:scaleX(0.92);transform-origin:center;">@9,5</div>
<div style="position:absolute;left:386.00px;width:200px;text-align:center;top:344.28px;line-height:12px;font-size:9.6px;color:#3b4560;font-weight:normal;white-space:nowrap;transform:scaleX(0.95);transform-origin:center;">215</div>
<div style="position:absolute;left:162px;top:356.36px;width:310px;height:13.76px;background:#5fc8fa"></div>
<div style="position:absolute;left:126.50px;top:357.64px;line-height:12px;font-size:8.6px;color:#3466c8;font-weight:normal;white-space:nowrap;transform:scaleX(0.86);transform-origin:left;">PPS_w.9</div>
<div style="position:absolute;left:164.20px;top:357.64px;line-height:12px;font-size:9.6px;color:#1d3a72;font-weight:normal;white-space:nowrap;transform:scaleX(0.98);transform-origin:left;">SQ</div>
<svg style="position:absolute;left:188.9px;top:361.24px;" width="5.2" height="3.2" viewBox="0 0 5.2 3.2"><path d="M0 0 H5.2 L2.6 3.2 Z" fill="#1d3a72"/></svg>
<div style="position:absolute;left:200.50px;top:357.64px;line-height:12px;font-size:9.6px;color:#1d3a72;font-weight:normal;white-space:nowrap;transform:scaleX(0.98);transform-origin:left;">Comp</div>
<div style="position:absolute;left:263.50px;top:357.64px;line-height:12px;font-size:9.6px;color:#1d3a72;font-weight:normal;white-space:nowrap;transform:scaleX(0.98);transform-origin:left;">1 x&nbsp; 1</div>
<div style="position:absolute;right:1583.00px;text-align:right;top:357.64px;line-height:12px;font-size:9.6px;color:#1d3a72;font-weight:normal;white-space:nowrap;transform:scaleX(0.92);transform-origin:right;">@8,0</div>
<div style="position:absolute;left:270.00px;width:200px;text-align:center;top:357.64px;line-height:12px;font-size:9.6px;color:#1b2b55;font-weight:bold;white-space:nowrap;transform:scaleX(0.95);transform-origin:center;">207,0</div>
<div style="position:absolute;left:309.50px;width:200px;text-align:center;top:357.64px;line-height:12px;font-size:9.6px;color:#1d3a72;font-weight:normal;white-space:nowrap;transform:scaleX(0.92);transform-origin:center;">@9,5</div>
<div style="position:absolute;left:386.00px;width:200px;text-align:center;top:357.64px;line-height:12px;font-size:9.6px;color:#3b4560;font-weight:normal;white-space:nowrap;transform:scaleX(0.95);transform-origin:center;">212</div>
<div style="position:absolute;left:162px;top:369.72px;width:310px;height:13.76px;background:#5fc8fa"></div>
<div style="position:absolute;left:126.50px;top:371.00px;line-height:12px;font-size:8.6px;color:#3466c8;font-weight:normal;white-space:nowrap;transform:scaleX(0.86);transform-origin:left;">PPS_w.9</div>
<div style="position:absolute;left:164.20px;top:371.00px;line-height:12px;font-size:9.6px;color:#1d3a72;font-weight:normal;white-space:nowrap;transform:scaleX(0.98);transform-origin:left;">SQ</div>
<svg style="position:absolute;left:188.9px;top:374.6px;" width="5.2" height="3.2" viewBox="0 0 5.2 3.2"><path d="M0 0 H5.2 L2.6 3.2 Z" fill="#1d3a72"/></svg>
<div style="position:absolute;left:200.50px;top:371.00px;line-height:12px;font-size:9.6px;color:#1d3a72;font-weight:normal;white-space:nowrap;transform:scaleX(0.98);transform-origin:left;">Tempo</div>
<div style="position:absolute;left:263.50px;top:371.00px;line-height:12px;font-size:9.6px;color:#1d3a72;font-weight:normal;white-space:nowrap;transform:scaleX(0.98);transform-origin:left;">2 x&nbsp; 3</div>
<div style="position:absolute;right:1583.00px;text-align:right;top:371.00px;line-height:12px;font-size:9.6px;color:#1d3a72;font-weight:normal;white-space:nowrap;transform:scaleX(0.92);transform-origin:right;">@8,0</div>
<div style="position:absolute;left:270.00px;width:200px;text-align:center;top:371.00px;line-height:12px;font-size:9.6px;color:#1b2b55;font-weight:bold;white-space:nowrap;transform:scaleX(0.95);transform-origin:center;">170,0</div>
<div style="position:absolute;left:309.50px;width:200px;text-align:center;top:371.00px;line-height:12px;font-size:9.6px;color:#1d3a72;font-weight:normal;white-space:nowrap;transform:scaleX(0.92);transform-origin:center;">@8,5</div>
<div style="position:absolute;left:352.00px;width:200px;text-align:center;top:371.00px;line-height:12px;font-size:9.6px;color:#1d3a72;font-weight:normal;white-space:nowrap;transform:scaleX(0.92);transform-origin:center;">@9,0</div>
<div style="position:absolute;left:386.00px;width:200px;text-align:center;top:371.00px;line-height:12px;font-size:9.6px;color:#3b4560;font-weight:normal;white-space:nowrap;transform:scaleX(0.95);transform-origin:center;">194</div>
<div style="position:absolute;left:162px;top:383.08px;width:310px;height:13.76px;background:#5fc8fa"></div>
<div style="position:absolute;left:126.50px;top:384.36px;line-height:12px;font-size:8.6px;color:#3466c8;font-weight:normal;white-space:nowrap;transform:scaleX(0.86);transform-origin:left;">PPS_w.9</div>
<div style="position:absolute;left:164.20px;top:384.36px;line-height:12px;font-size:9.6px;color:#1d3a72;font-weight:normal;white-space:nowrap;transform:scaleX(0.98);transform-origin:left;">SQ</div>
<svg style="position:absolute;left:188.9px;top:387.96px;" width="5.2" height="3.2" viewBox="0 0 5.2 3.2"><path d="M0 0 H5.2 L2.6 3.2 Z" fill="#1d3a72"/></svg>
<div style="position:absolute;left:200.50px;top:384.36px;line-height:12px;font-size:9.6px;color:#1d3a72;font-weight:normal;white-space:nowrap;transform:scaleX(0.98);transform-origin:left;">Tempo</div>
<div style="position:absolute;left:263.50px;top:384.36px;line-height:12px;font-size:9.6px;color:#1d3a72;font-weight:normal;white-space:nowrap;transform:scaleX(0.98);transform-origin:left;">2 x&nbsp; 4</div>
<div style="position:absolute;right:1583.00px;text-align:right;top:384.36px;line-height:12px;font-size:9.6px;color:#1d3a72;font-weight:normal;white-space:nowrap;transform:scaleX(0.92);transform-origin:right;">@8,0</div>
<div style="position:absolute;left:270.00px;width:200px;text-align:center;top:384.36px;line-height:12px;font-size:9.6px;color:#1b2b55;font-weight:bold;white-space:nowrap;transform:scaleX(0.95);transform-origin:center;">176,0</div>
<div style="position:absolute;left:309.50px;width:200px;text-align:center;top:384.36px;line-height:12px;font-size:9.6px;color:#1d3a72;font-weight:normal;white-space:nowrap;transform:scaleX(0.92);transform-origin:center;">@8,0</div>
<div style="position:absolute;left:352.00px;width:200px;text-align:center;top:384.36px;line-height:12px;font-size:9.6px;color:#1d3a72;font-weight:normal;white-space:nowrap;transform:scaleX(0.92);transform-origin:center;">@9,0</div>
<div style="position:absolute;left:386.00px;width:200px;text-align:center;top:384.36px;line-height:12px;font-size:9.6px;color:#3b4560;font-weight:normal;white-space:nowrap;transform:scaleX(0.95);transform-origin:center;">210</div>
<div style="position:absolute;left:162px;top:396.44px;width:310px;height:13.76px;background:#6b7a90"></div>
<div style="position:absolute;left:126.50px;top:397.72px;line-height:12px;font-size:8.6px;color:#3466c8;font-weight:normal;white-space:nowrap;transform:scaleX(0.86);transform-origin:left;">PPS_w.9</div>
<div style="position:absolute;left:164.20px;top:397.72px;line-height:12px;font-size:9.6px;color:#f4f4f4;font-weight:normal;white-space:nowrap;transform:scaleX(0.98);transform-origin:left;">AC</div>
<svg style="position:absolute;left:188.9px;top:401.32px;" width="5.2" height="3.2" viewBox="0 0 5.2 3.2"><path d="M0 0 H5.2 L2.6 3.2 Z" fill="#f4f4f4"/></svg>
<div style="position:absolute;left:200.50px;top:397.72px;line-height:12px;font-size:9.6px;color:#f4f4f4;font-weight:normal;white-space:nowrap;transform:scaleX(0.98);transform-origin:left;">RDB</div>
<div style="position:absolute;left:263.50px;top:397.72px;line-height:12px;font-size:9.6px;color:#f4f4f4;font-weight:normal;white-space:nowrap;transform:scaleX(0.98);transform-origin:left;">6 x&nbsp; 10</div>
<div style="position:absolute;right:1583.00px;text-align:right;top:397.72px;line-height:12px;font-size:9.6px;color:#f4f4f4;font-weight:normal;white-space:nowrap;transform:scaleX(0.92);transform-origin:right;">@8,0</div>
<div style="position:absolute;left:270.00px;width:200px;text-align:center;top:397.72px;line-height:12px;font-size:9.6px;color:#f8f8f8;font-weight:bold;white-space:nowrap;transform:scaleX(0.95);transform-origin:center;">60,0</div>
<div style="position:absolute;left:309.50px;width:200px;text-align:center;top:397.72px;line-height:12px;font-size:9.6px;color:#f4f4f4;font-weight:normal;white-space:nowrap;transform:scaleX(0.92);transform-origin:center;">@9,0</div>
<div style="position:absolute;left:386.00px;width:200px;text-align:center;top:397.72px;line-height:12px;font-size:9.6px;color:#3b4560;font-weight:normal;white-space:nowrap;transform:scaleX(0.95);transform-origin:center;">85</div>
<div style="position:absolute;left:162px;top:409.8px;width:310px;height:13.76px;background:#fdd60c"></div>
<div style="position:absolute;left:126.50px;top:411.08px;line-height:12px;font-size:8.6px;color:#3466c8;font-weight:normal;white-space:nowrap;transform:scaleX(0.86);transform-origin:left;">PPS_w.9</div>
<div style="position:absolute;left:164.20px;top:411.08px;line-height:12px;font-size:9.6px;color:#39401f;font-weight:normal;white-space:nowrap;transform:scaleX(0.98);transform-origin:left;">BN</div>
<svg style="position:absolute;left:188.9px;top:414.68px;" width="5.2" height="3.2" viewBox="0 0 5.2 3.2"><path d="M0 0 H5.2 L2.6 3.2 Z" fill="#5a4a12"/></svg>
<div style="position:absolute;left:200.50px;top:411.08px;line-height:12px;font-size:9.6px;color:#39401f;font-weight:normal;white-space:nowrap;transform:scaleX(0.98);transform-origin:left;">Tempo 3.1.0</div>
<div style="position:absolute;left:263.50px;top:411.08px;line-height:12px;font-size:9.6px;color:#39401f;font-weight:normal;white-space:nowrap;transform:scaleX(0.98);transform-origin:left;">1 x&nbsp; 3</div>
<div style="position:absolute;right:1583.00px;text-align:right;top:411.08px;line-height:12px;font-size:9.6px;color:#39401f;font-weight:normal;white-space:nowrap;transform:scaleX(0.92);transform-origin:right;">@8,0</div>
<div style="position:absolute;left:270.00px;width:200px;text-align:center;top:411.08px;line-height:12px;font-size:9.6px;color:#1c2a4a;font-weight:bold;white-space:nowrap;transform:scaleX(0.95);transform-origin:center;">100,0</div>
<div style="position:absolute;left:309.50px;width:200px;text-align:center;top:411.08px;line-height:12px;font-size:9.6px;color:#39401f;font-weight:normal;white-space:nowrap;transform:scaleX(0.92);transform-origin:center;">@8,0</div>
<div style="position:absolute;left:386.00px;width:200px;text-align:center;top:411.08px;line-height:12px;font-size:9.6px;color:#3b4560;font-weight:normal;white-space:nowrap;transform:scaleX(0.95);transform-origin:center;">116</div>
<div style="position:absolute;left:162px;top:423.15999999999997px;width:310px;height:13.76px;background:#fdd60c"></div>
<div style="position:absolute;left:126.50px;top:424.44px;line-height:12px;font-size:8.6px;color:#3466c8;font-weight:normal;white-space:nowrap;transform:scaleX(0.86);transform-origin:left;">PPS_w.9</div>
<div style="position:absolute;left:164.20px;top:424.44px;line-height:12px;font-size:9.6px;color:#39401f;font-weight:normal;white-space:nowrap;transform:scaleX(0.98);transform-origin:left;">BN</div>
<svg style="position:absolute;left:188.9px;top:428.03999999999996px;" width="5.2" height="3.2" viewBox="0 0 5.2 3.2"><path d="M0 0 H5.2 L2.6 3.2 Z" fill="#5a4a12"/></svg>
<div style="position:absolute;left:200.50px;top:424.44px;line-height:12px;font-size:9.6px;color:#39401f;font-weight:normal;white-space:nowrap;transform:scaleX(0.98);transform-origin:left;">Comp</div>
<div style="position:absolute;left:263.50px;top:424.44px;line-height:12px;font-size:9.6px;color:#39401f;font-weight:normal;white-space:nowrap;transform:scaleX(0.98);transform-origin:left;">3 x&nbsp; 6</div>
<div style="position:absolute;right:1583.00px;text-align:right;top:424.44px;line-height:12px;font-size:9.6px;color:#39401f;font-weight:normal;white-space:nowrap;transform:scaleX(0.92);transform-origin:right;">@8,0</div>
<div style="position:absolute;left:270.00px;width:200px;text-align:center;top:424.44px;line-height:12px;font-size:9.6px;color:#1c2a4a;font-weight:bold;white-space:nowrap;transform:scaleX(0.95);transform-origin:center;">100,0</div>
<div style="position:absolute;left:309.50px;width:200px;text-align:center;top:424.44px;line-height:12px;font-size:9.6px;color:#39401f;font-weight:normal;white-space:nowrap;transform:scaleX(0.92);transform-origin:center;">@8,0</div>
<div style="position:absolute;left:352.00px;width:200px;text-align:center;top:424.44px;line-height:12px;font-size:9.6px;color:#39401f;font-weight:normal;white-space:nowrap;transform:scaleX(0.92);transform-origin:center;">@9,0</div>
<div style="position:absolute;left:386.00px;width:200px;text-align:center;top:424.44px;line-height:12px;font-size:9.6px;color:#3b4560;font-weight:normal;white-space:nowrap;transform:scaleX(0.95);transform-origin:center;">127</div>
<div style="position:absolute;left:162px;top:436.52px;width:310px;height:13.76px;background:#fdd60c"></div>
<div style="position:absolute;left:126.50px;top:437.80px;line-height:12px;font-size:8.6px;color:#3466c8;font-weight:normal;white-space:nowrap;transform:scaleX(0.86);transform-origin:left;">PPS_w.9</div>
<div style="position:absolute;left:164.20px;top:437.80px;line-height:12px;font-size:9.6px;color:#39401f;font-weight:normal;white-space:nowrap;transform:scaleX(0.98);transform-origin:left;">BN</div>
<svg style="position:absolute;left:188.9px;top:441.4px;" width="5.2" height="3.2" viewBox="0 0 5.2 3.2"><path d="M0 0 H5.2 L2.6 3.2 Z" fill="#5a4a12"/></svg>
<div style="position:absolute;left:200.50px;top:437.80px;line-height:12px;font-size:9.6px;color:#39401f;font-weight:normal;white-space:nowrap;transform:scaleX(0.98);transform-origin:left;">Comp</div>
<div style="position:absolute;left:263.50px;top:437.80px;line-height:12px;font-size:9.6px;color:#39401f;font-weight:normal;white-space:nowrap;transform:scaleX(0.98);transform-origin:left;">4 x&nbsp; 6</div>
<div style="position:absolute;right:1583.00px;text-align:right;top:437.80px;line-height:12px;font-size:9.6px;color:#39401f;font-weight:normal;white-space:nowrap;transform:scaleX(0.92);transform-origin:right;">@8,5</div>
<div style="position:absolute;left:270.00px;width:200px;text-align:center;top:437.80px;line-height:12px;font-size:9.6px;color:#1c2a4a;font-weight:bold;white-space:nowrap;transform:scaleX(0.95);transform-origin:center;">107,0</div>
<div style="position:absolute;left:309.50px;width:200px;text-align:center;top:437.80px;line-height:12px;font-size:9.6px;color:#39401f;font-weight:normal;white-space:nowrap;transform:scaleX(0.92);transform-origin:center;">@8,5</div>
<div style="position:absolute;left:352.00px;width:200px;text-align:center;top:437.80px;line-height:12px;font-size:9.6px;color:#39401f;font-weight:normal;white-space:nowrap;transform:scaleX(0.92);transform-origin:center;">@9,0</div>
<div style="position:absolute;left:386.00px;width:200px;text-align:center;top:437.80px;line-height:12px;font-size:9.6px;color:#3b4560;font-weight:normal;white-space:nowrap;transform:scaleX(0.95);transform-origin:center;">134</div>
<svg style="position:absolute;left:188.9px;top:454.76px;" width="5.2" height="3.2" viewBox="0 0 5.2 3.2"><path d="M0 0 H5.2 L2.6 3.2 Z" fill="#2b6be0"/></svg>
<svg style="position:absolute;left:188.9px;top:468.12px;" width="5.2" height="3.2" viewBox="0 0 5.2 3.2"><path d="M0 0 H5.2 L2.6 3.2 Z" fill="#2b6be0"/></svg>
<svg style="position:absolute;left:188.9px;top:481.48px;" width="5.2" height="3.2" viewBox="0 0 5.2 3.2"><path d="M0 0 H5.2 L2.6 3.2 Z" fill="#2b6be0"/></svg>
<div style="position:absolute;left:161px;top:343px;width:1.5px;height:149px;background:#000"></div>
<div style="position:absolute;left:353px;top:341px;width:1.4px;height:151px;background:#111"></div>
<div style="position:absolute;left:124px;top:341.8px;width:348px;height:1.6px;background:#000"></div>
<div style="position:absolute;left:124px;top:324px;width:348px;height:168px;border:1.5px solid #000;"></div>
<div style="position:absolute;left:43.00px;width:200px;text-align:center;top:328.00px;line-height:12px;font-size:8.8px;color:#f0f0f0;font-weight:bold;white-space:nowrap;transform:scaleX(0.95);transform-origin:center;">28/02</div>
<div style="position:absolute;left:165.00px;top:330.50px;line-height:12px;font-size:8.6px;color:#eeeeee;font-weight:bold;white-space:nowrap;transform:scaleX(0.86);transform-origin:left;">Exercice</div>
<div style="position:absolute;left:200.50px;top:330.50px;line-height:12px;font-size:8.6px;color:#eeeeee;font-weight:bold;white-space:nowrap;transform:scaleX(0.86);transform-origin:left;">Variation</div>
<div style="position:absolute;left:261.00px;top:330.50px;line-height:12px;font-size:8.6px;color:#eeeeee;font-weight:bold;white-space:nowrap;transform:scaleX(0.86);transform-origin:left;">Sets</div>
<div style="position:absolute;left:280.50px;top:330.50px;line-height:12px;font-size:8.6px;color:#eeeeee;font-weight:bold;white-space:nowrap;transform:scaleX(0.86);transform-origin:left;">Reps</div>
<div style="position:absolute;left:298.5px;top:330.5px;width:54.5px;overflow:hidden;line-height:12px;font-size:8.6px;color:#eeeeee;font-weight:bold;white-space:nowrap;"><span style="display:inline-block;transform:scaleX(0.86);transform-origin:left">Ɛ attendu | %1RM</span></div>
<div style="position:absolute;left:358.00px;top:330.50px;line-height:12px;font-size:8.6px;color:#eeeeee;font-weight:bold;white-space:nowrap;transform:scaleX(0.86);transform-origin:left;">Charge</div>
<div style="position:absolute;left:390.50px;top:330.50px;line-height:12px;font-size:8.6px;color:#eeeeee;font-weight:bold;white-space:nowrap;transform:scaleX(0.86);transform-origin:left;">RPE 1<span style="font-size:5.5px;position:relative;top:-3px">st</span> set</div>
<div style="position:absolute;left:436.00px;top:330.50px;line-height:12px;font-size:8.6px;color:#eeeeee;font-weight:bold;white-space:nowrap;transform:scaleX(0.86);transform-origin:left;">RPE_last</div>
<div style="position:absolute;left:475.50px;top:330.50px;line-height:12px;font-size:8.6px;color:#4a5570;font-weight:bold;white-space:nowrap;transform:scaleX(0.86);transform-origin:left;">e1RM</div>
<div style="position:absolute;left:500px;top:324px;width:220px;height:168px;overflow:hidden">
<div style="position:absolute;left:0px;top:0.00px;width:220px;height:168.00px;background:#1c4587"></div>
<div style="position:absolute;left:0px;top:0.00px;width:220px;height:19.00px;background:#16264f"></div>
<div style="position:absolute;left:0px;top:18.00px;width:220px;height:2.20px;background:#21c4e8"></div>
<div style="position:absolute;left:0px;top:0.00px;width:220px;height:168.00px;border:1.5px solid #0b1226;border-top:1px solid #0b1226;"></div>
<div style="position:absolute;left:10.00px;width:200px;text-align:center;top:5.30px;line-height:12px;font-size:9.6px;color:#21c4e8;font-weight:bold;white-space:nowrap;">Notes</div>
<div style="position:absolute;left:2.00px;top:33.50px;line-height:12px;font-size:10.2px;color:#dedede;font-weight:bold;white-space:nowrap;transform:scaleX(0.95);transform-origin:left;">Consigne</div>
<div style="position:absolute;left:34.00px;width:200px;text-align:center;top:28.20px;line-height:12px;font-size:9.6px;color:#e6e6e6;font-weight:normal;white-space:nowrap;font-style:italic">- Eviter le knee cave</div>
<div style="position:absolute;left:34.00px;width:200px;text-align:center;top:38.80px;line-height:12px;font-size:9.6px;color:#e6e6e6;font-weight:normal;white-space:nowrap;font-style:italic">- Focus respect du tempo</div>
<div style="position:absolute;left:2px;top:58.60px;width:212px;height:0.00px;border-top:1.6px dotted #21c4e8"></div>
<div style="position:absolute;left:2px;top:85.60px;width:212px;height:0.00px;border-top:1.6px dotted #21c4e8"></div>
<div style="position:absolute;left:4.00px;top:60.50px;line-height:12px;font-size:9.8px;color:#dcdcdc;font-weight:bold;white-space:nowrap;transform:scaleX(0.95);transform-origin:left;">Duree</div>
<div style="position:absolute;left:4.00px;top:74.00px;line-height:12px;font-size:9.8px;color:#dcdcdc;font-weight:bold;white-space:nowrap;transform:scaleX(0.95);transform-origin:left;">Forme</div>
<div style="position:absolute;left:54px;top:60.80px;width:158px;height:10.00px;background:#0f182d;border-radius:5px"></div>
<div style="position:absolute;left:28.00px;width:200px;text-align:center;top:59.80px;line-height:12px;font-size:9.6px;color:#f4f4f4;font-weight:normal;white-space:nowrap;">01:30</div>
<svg style="position:absolute;left:201.5px;top:64.10px" width="6" height="3.4" viewBox="0 0 6 3.4"><path d="M0 0 H6 L3 3.4Z" fill="#f4f4f4"/></svg>
<div style="position:absolute;left:54px;top:74.30px;width:158px;height:10.00px;background:#0f182d;border-radius:5px"></div>
<div style="position:absolute;left:28.00px;width:200px;text-align:center;top:73.30px;line-height:12px;font-size:9.6px;color:#f4f4f4;font-weight:normal;white-space:nowrap;">Excellente</div>
<svg style="position:absolute;left:201.5px;top:77.60px" width="6" height="3.4" viewBox="0 0 6 3.4"><path d="M0 0 H6 L3 3.4Z" fill="#f4f4f4"/></svg>
<div style="position:absolute;left:-74.00px;width:200px;text-align:center;top:101.50px;line-height:12px;font-size:10px;color:#2ee86e;font-weight:bold;white-space:nowrap;">+</div>
<div style="position:absolute;left:-74.00px;width:200px;text-align:center;top:142.00px;line-height:12px;font-size:10px;color:#f0a0a8;font-weight:bold;white-space:nowrap;">-</div>
<div style="position:absolute;left:51.00px;top:101.50px;line-height:12px;font-size:9.6px;color:#2ee86e;font-weight:normal;white-space:nowrap;font-style:italic">- Pas de knee cave</div>
<div style="position:absolute;left:51.00px;top:131.20px;line-height:12px;font-size:9.6px;color:#f2a4ac;font-weight:normal;white-space:nowrap;font-style:italic">- Trop rapide sur la phase</div>
<div style="position:absolute;left:51.00px;top:142.00px;line-height:12px;font-size:9.6px;color:#f2a4ac;font-weight:normal;white-space:nowrap;font-style:italic">concentrique</div>
<div style="position:absolute;left:51.00px;top:152.80px;line-height:12px;font-size:9.6px;color:#f2a4ac;font-weight:normal;white-space:nowrap;font-style:italic">- douleur 1/10 poignet droit</div>
</div>
<div style="position:absolute;left:124px;top:518px;width:348px;height:168.5px;background:#c9daf8"></div>
<div style="position:absolute;left:124px;top:518px;width:348px;height:17px;background:#16264f"></div>
<div style="position:absolute;left:124px;top:518px;width:38px;height:168.5px;background:#16264f"></div>
<div style="position:absolute;left:162px;top:535.0px;width:310px;height:13.76px;background:#8b8bfa"></div>
<div style="position:absolute;left:126.50px;top:536.28px;line-height:12px;font-size:8.6px;color:#3466c8;font-weight:normal;white-space:nowrap;transform:scaleX(0.86);transform-origin:left;">PPS_w.9</div>
<div style="position:absolute;left:164.20px;top:536.28px;line-height:12px;font-size:9.6px;color:#2c2270;font-weight:normal;white-space:nowrap;transform:scaleX(0.98);transform-origin:left;">DL</div>
<svg style="position:absolute;left:188.9px;top:539.88px;" width="5.2" height="3.2" viewBox="0 0 5.2 3.2"><path d="M0 0 H5.2 L2.6 3.2 Z" fill="#1a5cff"/></svg>
<div style="position:absolute;left:200.50px;top:536.28px;line-height:12px;font-size:9.6px;color:#2c2270;font-weight:normal;white-space:nowrap;transform:scaleX(0.98);transform-origin:left;">Comp</div>
<div style="position:absolute;left:263.50px;top:536.28px;line-height:12px;font-size:9.6px;color:#2c2270;font-weight:normal;white-space:nowrap;transform:scaleX(0.98);transform-origin:left;">1 x&nbsp; 3</div>
<div style="position:absolute;right:1583.00px;text-align:right;top:536.28px;line-height:12px;font-size:9.6px;color:#2c2270;font-weight:normal;white-space:nowrap;transform:scaleX(0.92);transform-origin:right;">@6,0</div>
<div style="position:absolute;left:270.00px;width:200px;text-align:center;top:536.28px;line-height:12px;font-size:9.6px;color:#281d66;font-weight:bold;white-space:nowrap;transform:scaleX(0.95);transform-origin:center;">182,0</div>
<div style="position:absolute;left:309.50px;width:200px;text-align:center;top:536.28px;line-height:12px;font-size:9.6px;color:#2c2270;font-weight:normal;white-space:nowrap;transform:scaleX(0.92);transform-origin:center;">@6,5</div>
<div style="position:absolute;left:386.00px;width:200px;text-align:center;top:536.28px;line-height:12px;font-size:9.6px;color:#3b4560;font-weight:normal;white-space:nowrap;transform:scaleX(0.95);transform-origin:center;">221</div>
<div style="position:absolute;left:162px;top:548.36px;width:310px;height:13.76px;background:#8b8bfa"></div>
<div style="position:absolute;left:126.50px;top:549.64px;line-height:12px;font-size:8.6px;color:#3466c8;font-weight:normal;white-space:nowrap;transform:scaleX(0.86);transform-origin:left;">PPS_w.9</div>
<div style="position:absolute;left:164.20px;top:549.64px;line-height:12px;font-size:9.6px;color:#2c2270;font-weight:normal;white-space:nowrap;transform:scaleX(0.98);transform-origin:left;">DL</div>
<svg style="position:absolute;left:188.9px;top:553.24px;" width="5.2" height="3.2" viewBox="0 0 5.2 3.2"><path d="M0 0 H5.2 L2.6 3.2 Z" fill="#1a5cff"/></svg>
<div style="position:absolute;left:200.50px;top:549.64px;line-height:12px;font-size:9.6px;color:#2c2270;font-weight:normal;white-space:nowrap;transform:scaleX(0.98);transform-origin:left;">Comp</div>
<div style="position:absolute;left:263.50px;top:549.64px;line-height:12px;font-size:9.6px;color:#2c2270;font-weight:normal;white-space:nowrap;transform:scaleX(0.98);transform-origin:left;">1 x&nbsp; 3</div>
<div style="position:absolute;right:1583.00px;text-align:right;top:549.64px;line-height:12px;font-size:9.6px;color:#2c2270;font-weight:normal;white-space:nowrap;transform:scaleX(0.92);transform-origin:right;">@6,0</div>
<div style="position:absolute;left:270.00px;width:200px;text-align:center;top:549.64px;line-height:12px;font-size:9.6px;color:#281d66;font-weight:bold;white-space:nowrap;transform:scaleX(0.95);transform-origin:center;">180,0</div>
<div style="position:absolute;left:309.50px;width:200px;text-align:center;top:549.64px;line-height:12px;font-size:9.6px;color:#2c2270;font-weight:normal;white-space:nowrap;transform:scaleX(0.92);transform-origin:center;">@7,0</div>
<div style="position:absolute;left:352.00px;width:200px;text-align:center;top:549.64px;line-height:12px;font-size:9.6px;color:#2c2270;font-weight:normal;white-space:nowrap;transform:scaleX(0.92);transform-origin:center;">@8,0</div>
<div style="position:absolute;left:386.00px;width:200px;text-align:center;top:549.64px;line-height:12px;font-size:9.6px;color:#3b4560;font-weight:normal;white-space:nowrap;transform:scaleX(0.95);transform-origin:center;">215</div>
<div style="position:absolute;left:162px;top:561.72px;width:310px;height:13.76px;background:#8b8bfa"></div>
<div style="position:absolute;left:126.50px;top:563.00px;line-height:12px;font-size:8.6px;color:#3466c8;font-weight:normal;white-space:nowrap;transform:scaleX(0.86);transform-origin:left;">PPS_w.9</div>
<div style="position:absolute;left:164.20px;top:563.00px;line-height:12px;font-size:9.6px;color:#2c2270;font-weight:normal;white-space:nowrap;transform:scaleX(0.98);transform-origin:left;">DL</div>
<svg style="position:absolute;left:188.9px;top:566.6px;" width="5.2" height="3.2" viewBox="0 0 5.2 3.2"><path d="M0 0 H5.2 L2.6 3.2 Z" fill="#1a5cff"/></svg>
<div style="position:absolute;left:200.50px;top:563.00px;line-height:12px;font-size:9.6px;color:#2c2270;font-weight:normal;white-space:nowrap;transform:scaleX(0.98);transform-origin:left;">Comp</div>
<div style="position:absolute;left:263.50px;top:563.00px;line-height:12px;font-size:9.6px;color:#2c2270;font-weight:normal;white-space:nowrap;transform:scaleX(0.98);transform-origin:left;">4 x&nbsp; 5</div>
<div style="position:absolute;right:1583.00px;text-align:right;top:563.00px;line-height:12px;font-size:9.6px;color:#2c2270;font-weight:normal;white-space:nowrap;transform:scaleX(0.92);transform-origin:right;">@6,5</div>
<div style="position:absolute;left:270.00px;width:200px;text-align:center;top:563.00px;line-height:12px;font-size:9.6px;color:#281d66;font-weight:bold;white-space:nowrap;transform:scaleX(0.95);transform-origin:center;">180,0</div>
<div style="position:absolute;left:309.50px;width:200px;text-align:center;top:563.00px;line-height:12px;font-size:9.6px;color:#2c2270;font-weight:normal;white-space:nowrap;transform:scaleX(0.92);transform-origin:center;">@8,0</div>
<div style="position:absolute;left:386.00px;width:200px;text-align:center;top:563.00px;line-height:12px;font-size:9.6px;color:#3b4560;font-weight:normal;white-space:nowrap;transform:scaleX(0.95);transform-origin:center;">222</div>
<div style="position:absolute;left:162px;top:575.08px;width:310px;height:13.76px;background:#8b8bfa"></div>
<div style="position:absolute;left:126.50px;top:576.36px;line-height:12px;font-size:8.6px;color:#3466c8;font-weight:normal;white-space:nowrap;transform:scaleX(0.86);transform-origin:left;">PPS_w.9</div>
<div style="position:absolute;left:164.20px;top:576.36px;line-height:12px;font-size:9.6px;color:#2c2270;font-weight:normal;white-space:nowrap;transform:scaleX(0.98);transform-origin:left;">DL</div>
<svg style="position:absolute;left:188.9px;top:579.96px;" width="5.2" height="3.2" viewBox="0 0 5.2 3.2"><path d="M0 0 H5.2 L2.6 3.2 Z" fill="#1a5cff"/></svg>
<div style="position:absolute;left:200.50px;top:576.36px;line-height:12px;font-size:9.6px;color:#2c2270;font-weight:normal;white-space:nowrap;transform:scaleX(0.98);transform-origin:left;">Half</div>
<div style="position:absolute;left:263.50px;top:576.36px;line-height:12px;font-size:9.6px;color:#2c2270;font-weight:normal;white-space:nowrap;transform:scaleX(0.98);transform-origin:left;">2 x&nbsp; 8</div>
<div style="position:absolute;right:1583.00px;text-align:right;top:576.36px;line-height:12px;font-size:9.6px;color:#2c2270;font-weight:normal;white-space:nowrap;transform:scaleX(0.92);transform-origin:right;">@7,0</div>
<div style="position:absolute;left:270.00px;width:200px;text-align:center;top:576.36px;line-height:12px;font-size:9.6px;color:#281d66;font-weight:bold;white-space:nowrap;transform:scaleX(0.95);transform-origin:center;">180,0</div>
<div style="position:absolute;left:309.50px;width:200px;text-align:center;top:576.36px;line-height:12px;font-size:9.6px;color:#2c2270;font-weight:normal;white-space:nowrap;transform:scaleX(0.92);transform-origin:center;">@7,0</div>
<div style="position:absolute;left:352.00px;width:200px;text-align:center;top:576.36px;line-height:12px;font-size:9.6px;color:#2c2270;font-weight:normal;white-space:nowrap;transform:scaleX(0.92);transform-origin:center;">@8,0</div>
<div style="position:absolute;left:386.00px;width:200px;text-align:center;top:576.36px;line-height:12px;font-size:9.6px;color:#3b4560;font-weight:normal;white-space:nowrap;transform:scaleX(0.95);transform-origin:center;">255</div>
<div style="position:absolute;left:162px;top:588.44px;width:310px;height:13.76px;background:#fdd60c"></div>
<div style="position:absolute;left:126.50px;top:589.72px;line-height:12px;font-size:8.6px;color:#3466c8;font-weight:normal;white-space:nowrap;transform:scaleX(0.86);transform-origin:left;">PPS_w.9</div>
<div style="position:absolute;left:164.20px;top:589.72px;line-height:12px;font-size:9.6px;color:#39401f;font-weight:normal;white-space:nowrap;transform:scaleX(0.98);transform-origin:left;">BN</div>
<svg style="position:absolute;left:188.9px;top:593.32px;" width="5.2" height="3.2" viewBox="0 0 5.2 3.2"><path d="M0 0 H5.2 L2.6 3.2 Z" fill="#5a4a12"/></svg>
<div style="position:absolute;left:200.50px;top:589.72px;line-height:12px;font-size:9.6px;color:#39401f;font-weight:normal;white-space:nowrap;transform:scaleX(0.98);transform-origin:left;">Tempo 3.1.0</div>
<div style="position:absolute;left:263.50px;top:589.72px;line-height:12px;font-size:9.6px;color:#39401f;font-weight:normal;white-space:nowrap;transform:scaleX(0.98);transform-origin:left;">1 x&nbsp; 3</div>
<div style="position:absolute;right:1583.00px;text-align:right;top:589.72px;line-height:12px;font-size:9.6px;color:#39401f;font-weight:normal;white-space:nowrap;transform:scaleX(0.92);transform-origin:right;">@6,0</div>
<div style="position:absolute;left:270.00px;width:200px;text-align:center;top:589.72px;line-height:12px;font-size:9.6px;color:#1c2a4a;font-weight:bold;white-space:nowrap;transform:scaleX(0.95);transform-origin:center;">100,0</div>
<div style="position:absolute;left:309.50px;width:200px;text-align:center;top:589.72px;line-height:12px;font-size:9.6px;color:#39401f;font-weight:normal;white-space:nowrap;transform:scaleX(0.92);transform-origin:center;">@7,5</div>
<div style="position:absolute;left:352.00px;width:200px;text-align:center;top:589.72px;line-height:12px;font-size:9.6px;color:#39401f;font-weight:normal;white-space:nowrap;transform:scaleX(0.92);transform-origin:center;">@7,0</div>
<div style="position:absolute;left:386.00px;width:200px;text-align:center;top:589.72px;line-height:12px;font-size:9.6px;color:#3b4560;font-weight:normal;white-space:nowrap;transform:scaleX(0.95);transform-origin:center;">118</div>
<div style="position:absolute;left:162px;top:601.8px;width:310px;height:13.76px;background:#fdd60c"></div>
<div style="position:absolute;left:126.50px;top:603.08px;line-height:12px;font-size:8.6px;color:#3466c8;font-weight:normal;white-space:nowrap;transform:scaleX(0.86);transform-origin:left;">PPS_w.9</div>
<div style="position:absolute;left:164.20px;top:603.08px;line-height:12px;font-size:9.6px;color:#39401f;font-weight:normal;white-space:nowrap;transform:scaleX(0.98);transform-origin:left;">BN</div>
<svg style="position:absolute;left:188.9px;top:606.68px;" width="5.2" height="3.2" viewBox="0 0 5.2 3.2"><path d="M0 0 H5.2 L2.6 3.2 Z" fill="#5a4a12"/></svg>
<div style="position:absolute;left:200.50px;top:603.08px;line-height:12px;font-size:9.6px;color:#39401f;font-weight:normal;white-space:nowrap;transform:scaleX(0.98);transform-origin:left;">Comp</div>
<div style="position:absolute;left:263.50px;top:603.08px;line-height:12px;font-size:9.6px;color:#39401f;font-weight:normal;white-space:nowrap;transform:scaleX(0.98);transform-origin:left;">2 x&nbsp; 3</div>
<div style="position:absolute;right:1583.00px;text-align:right;top:603.08px;line-height:12px;font-size:9.6px;color:#39401f;font-weight:normal;white-space:nowrap;transform:scaleX(0.92);transform-origin:right;">@7,0</div>
<div style="position:absolute;left:270.00px;width:200px;text-align:center;top:603.08px;line-height:12px;font-size:9.6px;color:#1c2a4a;font-weight:bold;white-space:nowrap;transform:scaleX(0.95);transform-origin:center;">112,0</div>
<div style="position:absolute;left:309.50px;width:200px;text-align:center;top:603.08px;line-height:12px;font-size:9.6px;color:#39401f;font-weight:normal;white-space:nowrap;transform:scaleX(0.92);transform-origin:center;">@9,0</div>
<div style="position:absolute;left:386.00px;width:200px;text-align:center;top:603.08px;line-height:12px;font-size:9.6px;color:#3b4560;font-weight:normal;white-space:nowrap;transform:scaleX(0.95);transform-origin:center;">126</div>
<div style="position:absolute;left:162px;top:615.16px;width:310px;height:13.76px;background:#fdd60c"></div>
<div style="position:absolute;left:126.50px;top:616.44px;line-height:12px;font-size:8.6px;color:#3466c8;font-weight:normal;white-space:nowrap;transform:scaleX(0.86);transform-origin:left;">PPS_w.9</div>
<div style="position:absolute;left:164.20px;top:616.44px;line-height:12px;font-size:9.6px;color:#39401f;font-weight:normal;white-space:nowrap;transform:scaleX(0.98);transform-origin:left;">BN</div>
<svg style="position:absolute;left:188.9px;top:620.04px;" width="5.2" height="3.2" viewBox="0 0 5.2 3.2"><path d="M0 0 H5.2 L2.6 3.2 Z" fill="#5a4a12"/></svg>
<div style="position:absolute;left:200.50px;top:616.44px;line-height:12px;font-size:9.6px;color:#39401f;font-weight:normal;white-space:nowrap;transform:scaleX(0.98);transform-origin:left;">Comp</div>
<div style="position:absolute;left:263.50px;top:616.44px;line-height:12px;font-size:9.6px;color:#39401f;font-weight:normal;white-space:nowrap;transform:scaleX(0.98);transform-origin:left;">2 x&nbsp; 4</div>
<div style="position:absolute;right:1583.00px;text-align:right;top:616.44px;line-height:12px;font-size:9.6px;color:#39401f;font-weight:normal;white-space:nowrap;transform:scaleX(0.92);transform-origin:right;">@7,0</div>
<div style="position:absolute;left:270.00px;width:200px;text-align:center;top:616.44px;line-height:12px;font-size:9.6px;color:#1c2a4a;font-weight:bold;white-space:nowrap;transform:scaleX(0.95);transform-origin:center;">110,0</div>
<div style="position:absolute;left:309.50px;width:200px;text-align:center;top:616.44px;line-height:12px;font-size:9.6px;color:#39401f;font-weight:normal;white-space:nowrap;transform:scaleX(0.92);transform-origin:center;">@9,0</div>
<div style="position:absolute;left:352.00px;width:200px;text-align:center;top:616.44px;line-height:12px;font-size:9.6px;color:#39401f;font-weight:normal;white-space:nowrap;transform:scaleX(0.92);transform-origin:center;">@9,0</div>
<div style="position:absolute;left:386.00px;width:200px;text-align:center;top:616.44px;line-height:12px;font-size:9.6px;color:#3b4560;font-weight:normal;white-space:nowrap;transform:scaleX(0.95);transform-origin:center;">127</div>
<svg style="position:absolute;left:188.9px;top:633.4px;" width="5.2" height="3.2" viewBox="0 0 5.2 3.2"><path d="M0 0 H5.2 L2.6 3.2 Z" fill="#2b6be0"/></svg>
<svg style="position:absolute;left:188.9px;top:646.76px;" width="5.2" height="3.2" viewBox="0 0 5.2 3.2"><path d="M0 0 H5.2 L2.6 3.2 Z" fill="#2b6be0"/></svg>
<svg style="position:absolute;left:188.9px;top:660.12px;" width="5.2" height="3.2" viewBox="0 0 5.2 3.2"><path d="M0 0 H5.2 L2.6 3.2 Z" fill="#2b6be0"/></svg>
<svg style="position:absolute;left:188.9px;top:673.48px;" width="5.2" height="3.2" viewBox="0 0 5.2 3.2"><path d="M0 0 H5.2 L2.6 3.2 Z" fill="#2b6be0"/></svg>
<div style="position:absolute;left:161px;top:535px;width:1.5px;height:151.5px;background:#000"></div>
<div style="position:absolute;left:353px;top:533px;width:1.4px;height:153.5px;background:#111"></div>
<div style="position:absolute;left:124px;top:533.8px;width:348px;height:1.6px;background:#000"></div>
<div style="position:absolute;left:124px;top:518px;width:348px;height:168.5px;border:1.5px solid #000;"></div>
<div style="position:absolute;left:43.00px;width:200px;text-align:center;top:522.00px;line-height:12px;font-size:8.8px;color:#f0f0f0;font-weight:bold;white-space:nowrap;transform:scaleX(0.95);transform-origin:center;">01/03</div>
<div style="position:absolute;left:165.00px;top:522.50px;line-height:12px;font-size:8.6px;color:#eeeeee;font-weight:bold;white-space:nowrap;transform:scaleX(0.86);transform-origin:left;">Exercice</div>
<div style="position:absolute;left:200.50px;top:522.50px;line-height:12px;font-size:8.6px;color:#eeeeee;font-weight:bold;white-space:nowrap;transform:scaleX(0.86);transform-origin:left;">Variation</div>
<div style="position:absolute;left:261.00px;top:522.50px;line-height:12px;font-size:8.6px;color:#eeeeee;font-weight:bold;white-space:nowrap;transform:scaleX(0.86);transform-origin:left;">Sets</div>
<div style="position:absolute;left:280.50px;top:522.50px;line-height:12px;font-size:8.6px;color:#eeeeee;font-weight:bold;white-space:nowrap;transform:scaleX(0.86);transform-origin:left;">Reps</div>
<div style="position:absolute;left:298.5px;top:522.5px;width:54.5px;overflow:hidden;line-height:12px;font-size:8.6px;color:#eeeeee;font-weight:bold;white-space:nowrap;"><span style="display:inline-block;transform:scaleX(0.86);transform-origin:left">Ɛ attendu | %1RM</span></div>
<div style="position:absolute;left:358.00px;top:522.50px;line-height:12px;font-size:8.6px;color:#eeeeee;font-weight:bold;white-space:nowrap;transform:scaleX(0.86);transform-origin:left;">Charge</div>
<div style="position:absolute;left:390.50px;top:522.50px;line-height:12px;font-size:8.6px;color:#eeeeee;font-weight:bold;white-space:nowrap;transform:scaleX(0.86);transform-origin:left;">RPE 1<span style="font-size:5.5px;position:relative;top:-3px">st</span> set</div>
<div style="position:absolute;left:436.00px;top:522.50px;line-height:12px;font-size:8.6px;color:#eeeeee;font-weight:bold;white-space:nowrap;transform:scaleX(0.86);transform-origin:left;">RPE_last</div>
<div style="position:absolute;left:475.50px;top:522.50px;line-height:12px;font-size:8.6px;color:#4a5570;font-weight:bold;white-space:nowrap;transform:scaleX(0.86);transform-origin:left;">e1RM</div>
<div style="position:absolute;left:500px;top:518px;width:220px;height:168.5px;overflow:hidden">
<div style="position:absolute;left:0px;top:0.00px;width:220px;height:168.50px;background:#1c4587"></div>
<div style="position:absolute;left:0px;top:0.00px;width:220px;height:17.00px;background:#16264f"></div>
<div style="position:absolute;left:0px;top:16.00px;width:220px;height:2.20px;background:#21c4e8"></div>
<div style="position:absolute;left:0px;top:0.00px;width:220px;height:168.50px;border:1.5px solid #0b1226;border-top:1px solid #0b1226;"></div>
<div style="position:absolute;left:10.00px;width:200px;text-align:center;top:4.30px;line-height:12px;font-size:9.6px;color:#21c4e8;font-weight:bold;white-space:nowrap;">Notes</div>
<div style="position:absolute;left:2.00px;top:31.50px;line-height:12px;font-size:10.2px;color:#dedede;font-weight:bold;white-space:nowrap;transform:scaleX(0.95);transform-origin:left;">Consigne</div>
<div style="position:absolute;left:34.00px;width:200px;text-align:center;top:31.50px;line-height:12px;font-size:9.6px;color:#e6e6e6;font-weight:normal;white-space:nowrap;font-style:italic">- Focus trajectoire bench</div>
<div style="position:absolute;left:2px;top:56.60px;width:212px;height:0.00px;border-top:1.6px dotted #21c4e8"></div>
<div style="position:absolute;left:2px;top:83.60px;width:212px;height:0.00px;border-top:1.6px dotted #21c4e8"></div>
<div style="position:absolute;left:4.00px;top:58.50px;line-height:12px;font-size:9.8px;color:#dcdcdc;font-weight:bold;white-space:nowrap;transform:scaleX(0.95);transform-origin:left;">Duree</div>
<div style="position:absolute;left:4.00px;top:72.00px;line-height:12px;font-size:9.8px;color:#dcdcdc;font-weight:bold;white-space:nowrap;transform:scaleX(0.95);transform-origin:left;">Forme</div>
<div style="position:absolute;left:54px;top:58.80px;width:158px;height:10.00px;background:#0f182d;border-radius:5px"></div>
<div style="position:absolute;left:28.00px;width:200px;text-align:center;top:57.80px;line-height:12px;font-size:9.6px;color:#f4f4f4;font-weight:normal;white-space:nowrap;">03:00</div>
<svg style="position:absolute;left:201.5px;top:62.10px" width="6" height="3.4" viewBox="0 0 6 3.4"><path d="M0 0 H6 L3 3.4Z" fill="#f4f4f4"/></svg>
<div style="position:absolute;left:54px;top:72.30px;width:158px;height:10.00px;background:#0f182d;border-radius:5px"></div>
<div style="position:absolute;left:28.00px;width:200px;text-align:center;top:71.30px;line-height:12px;font-size:9.6px;color:#f4f4f4;font-weight:normal;white-space:nowrap;">Bonne</div>
<svg style="position:absolute;left:201.5px;top:75.60px" width="6" height="3.4" viewBox="0 0 6 3.4"><path d="M0 0 H6 L3 3.4Z" fill="#f4f4f4"/></svg>
<div style="position:absolute;left:-74.00px;width:200px;text-align:center;top:99.50px;line-height:12px;font-size:10px;color:#2ee86e;font-weight:bold;white-space:nowrap;">+</div>
<div style="position:absolute;left:-74.00px;width:200px;text-align:center;top:140.00px;line-height:12px;font-size:10px;color:#f0a0a8;font-weight:bold;white-space:nowrap;">-</div>
<div style="position:absolute;left:51.00px;top:94.20px;line-height:12px;font-size:9.6px;color:#2ee86e;font-weight:normal;white-space:nowrap;font-style:italic">- Bonne trajectoire en 8 BN</div>
<div style="position:absolute;left:51.00px;top:104.80px;line-height:12px;font-size:9.6px;color:#2ee86e;font-weight:normal;white-space:nowrap;font-style:italic">- Wedge parfait au DL</div>
<div style="position:absolute;left:51.00px;top:134.60px;line-height:12px;font-size:9.6px;color:#f2a4ac;font-weight:normal;white-space:nowrap;font-style:italic">- manque de grip au half DL, j'ai du</div>
<div style="position:absolute;left:51.00px;top:145.40px;line-height:12px;font-size:9.6px;color:#f2a4ac;font-weight:normal;white-space:nowrap;font-style:italic">mettre des sangles</div>
</div>
<div style="position:absolute;left:124px;top:713px;width:348px;height:167px;background:#c9daf8"></div>
<div style="position:absolute;left:124px;top:713px;width:348px;height:17px;background:#16264f"></div>
<div style="position:absolute;left:124px;top:713px;width:38px;height:167px;background:#16264f"></div>
<svg style="position:absolute;left:188.9px;top:734.88px;" width="5.2" height="3.2" viewBox="0 0 5.2 3.2"><path d="M0 0 H5.2 L2.6 3.2 Z" fill="#2b6be0"/></svg>
<svg style="position:absolute;left:188.9px;top:748.24px;" width="5.2" height="3.2" viewBox="0 0 5.2 3.2"><path d="M0 0 H5.2 L2.6 3.2 Z" fill="#2b6be0"/></svg>
<svg style="position:absolute;left:188.9px;top:761.6px;" width="5.2" height="3.2" viewBox="0 0 5.2 3.2"><path d="M0 0 H5.2 L2.6 3.2 Z" fill="#2b6be0"/></svg>
<svg style="position:absolute;left:188.9px;top:774.96px;" width="5.2" height="3.2" viewBox="0 0 5.2 3.2"><path d="M0 0 H5.2 L2.6 3.2 Z" fill="#2b6be0"/></svg>
<svg style="position:absolute;left:188.9px;top:788.32px;" width="5.2" height="3.2" viewBox="0 0 5.2 3.2"><path d="M0 0 H5.2 L2.6 3.2 Z" fill="#2b6be0"/></svg>
<svg style="position:absolute;left:188.9px;top:801.68px;" width="5.2" height="3.2" viewBox="0 0 5.2 3.2"><path d="M0 0 H5.2 L2.6 3.2 Z" fill="#2b6be0"/></svg>
<svg style="position:absolute;left:188.9px;top:815.04px;" width="5.2" height="3.2" viewBox="0 0 5.2 3.2"><path d="M0 0 H5.2 L2.6 3.2 Z" fill="#2b6be0"/></svg>
<svg style="position:absolute;left:188.9px;top:828.4px;" width="5.2" height="3.2" viewBox="0 0 5.2 3.2"><path d="M0 0 H5.2 L2.6 3.2 Z" fill="#2b6be0"/></svg>
<svg style="position:absolute;left:188.9px;top:841.76px;" width="5.2" height="3.2" viewBox="0 0 5.2 3.2"><path d="M0 0 H5.2 L2.6 3.2 Z" fill="#2b6be0"/></svg>
<svg style="position:absolute;left:188.9px;top:855.12px;" width="5.2" height="3.2" viewBox="0 0 5.2 3.2"><path d="M0 0 H5.2 L2.6 3.2 Z" fill="#2b6be0"/></svg>
<svg style="position:absolute;left:188.9px;top:868.48px;" width="5.2" height="3.2" viewBox="0 0 5.2 3.2"><path d="M0 0 H5.2 L2.6 3.2 Z" fill="#2b6be0"/></svg>
<div style="position:absolute;left:161px;top:730px;width:1.5px;height:150px;background:#000"></div>
<div style="position:absolute;left:353px;top:728px;width:1.4px;height:152px;background:#111"></div>
<div style="position:absolute;left:124px;top:728.8px;width:348px;height:1.6px;background:#000"></div>
<div style="position:absolute;left:124px;top:713px;width:348px;height:167px;border:1.5px solid #000;"></div>
<div style="position:absolute;left:43.00px;width:200px;text-align:center;top:717.00px;line-height:12px;font-size:8.8px;color:#f0f0f0;font-weight:bold;white-space:nowrap;transform:scaleX(0.95);transform-origin:center;">02/03</div>
<div style="position:absolute;left:165.00px;top:717.50px;line-height:12px;font-size:8.6px;color:#eeeeee;font-weight:bold;white-space:nowrap;transform:scaleX(0.86);transform-origin:left;">Exercice</div>
<div style="position:absolute;left:200.50px;top:717.50px;line-height:12px;font-size:8.6px;color:#eeeeee;font-weight:bold;white-space:nowrap;transform:scaleX(0.86);transform-origin:left;">Variation</div>
<div style="position:absolute;left:261.00px;top:717.50px;line-height:12px;font-size:8.6px;color:#eeeeee;font-weight:bold;white-space:nowrap;transform:scaleX(0.86);transform-origin:left;">Sets</div>
<div style="position:absolute;left:280.50px;top:717.50px;line-height:12px;font-size:8.6px;color:#eeeeee;font-weight:bold;white-space:nowrap;transform:scaleX(0.86);transform-origin:left;">Reps</div>
<div style="position:absolute;left:298.5px;top:717.5px;width:54.5px;overflow:hidden;line-height:12px;font-size:8.6px;color:#eeeeee;font-weight:bold;white-space:nowrap;"><span style="display:inline-block;transform:scaleX(0.86);transform-origin:left">Ɛ attendu | %1RM</span></div>
<div style="position:absolute;left:358.00px;top:717.50px;line-height:12px;font-size:8.6px;color:#eeeeee;font-weight:bold;white-space:nowrap;transform:scaleX(0.86);transform-origin:left;">Charge</div>
<div style="position:absolute;left:390.50px;top:717.50px;line-height:12px;font-size:8.6px;color:#eeeeee;font-weight:bold;white-space:nowrap;transform:scaleX(0.86);transform-origin:left;">RPE 1<span style="font-size:5.5px;position:relative;top:-3px">st</span> set</div>
<div style="position:absolute;left:436.00px;top:717.50px;line-height:12px;font-size:8.6px;color:#eeeeee;font-weight:bold;white-space:nowrap;transform:scaleX(0.86);transform-origin:left;">RPE_last</div>
<div style="position:absolute;left:475.50px;top:717.50px;line-height:12px;font-size:8.6px;color:#4a5570;font-weight:bold;white-space:nowrap;transform:scaleX(0.86);transform-origin:left;">e1RM</div>
<div style="position:absolute;left:500px;top:713px;width:220px;height:167px;overflow:hidden">
<div style="position:absolute;left:0px;top:0.00px;width:220px;height:167.00px;background:#1c4587"></div>
<div style="position:absolute;left:0px;top:0.00px;width:220px;height:17.00px;background:#16264f"></div>
<div style="position:absolute;left:0px;top:16.00px;width:220px;height:2.20px;background:#21c4e8"></div>
<div style="position:absolute;left:0px;top:0.00px;width:220px;height:167.00px;border:1.5px solid #0b1226;border-top:1px solid #0b1226;"></div>
<div style="position:absolute;left:10.00px;width:200px;text-align:center;top:4.30px;line-height:12px;font-size:9.6px;color:#21c4e8;font-weight:bold;white-space:nowrap;">Notes</div>
<div style="position:absolute;left:2.00px;top:31.50px;line-height:12px;font-size:10.2px;color:#dedede;font-weight:bold;white-space:nowrap;transform:scaleX(0.95);transform-origin:left;">Consigne</div>
<div style="position:absolute;left:2px;top:56.60px;width:212px;height:0.00px;border-top:1.6px dotted #21c4e8"></div>
<div style="position:absolute;left:2px;top:83.60px;width:212px;height:0.00px;border-top:1.6px dotted #21c4e8"></div>
<div style="position:absolute;left:4.00px;top:58.50px;line-height:12px;font-size:9.8px;color:#dcdcdc;font-weight:bold;white-space:nowrap;transform:scaleX(0.95);transform-origin:left;">Durée :</div>
<div style="position:absolute;left:4.00px;top:72.00px;line-height:12px;font-size:9.8px;color:#dcdcdc;font-weight:bold;white-space:nowrap;transform:scaleX(0.95);transform-origin:left;">Forme :</div>
<div style="position:absolute;left:54px;top:58.80px;width:158px;height:10.00px;background:#e6e6e6;border-radius:5px"></div>
<svg style="position:absolute;left:200px;top:62.30px" width="6" height="3" viewBox="0 0 6 3"><path d="M0 0 H6 L3 3Z" fill="#9a9a9a"/></svg>
<div style="position:absolute;left:54px;top:72.30px;width:158px;height:10.00px;background:#e6e6e6;border-radius:5px"></div>
<svg style="position:absolute;left:200px;top:75.80px" width="6" height="3" viewBox="0 0 6 3"><path d="M0 0 H6 L3 3Z" fill="#9a9a9a"/></svg>
<div style="position:absolute;left:-74.00px;width:200px;text-align:center;top:99.50px;line-height:12px;font-size:10px;color:#2ee86e;font-weight:bold;white-space:nowrap;">+</div>
<div style="position:absolute;left:-74.00px;width:200px;text-align:center;top:140.00px;line-height:12px;font-size:10px;color:#f0a0a8;font-weight:bold;white-space:nowrap;">-</div>
</div>
<div style="position:absolute;left:124px;top:907px;width:348px;height:134px;background:#c9daf8"></div>
<div style="position:absolute;left:124px;top:907px;width:348px;height:18px;background:#16264f"></div>
<div style="position:absolute;left:124px;top:907px;width:38px;height:134px;background:#16264f"></div>
<div style="position:absolute;left:162px;top:925.0px;width:310px;height:13.76px;background:#fdd60c"></div>
<div style="position:absolute;left:126.50px;top:926.28px;line-height:12px;font-size:8.6px;color:#3466c8;font-weight:normal;white-space:nowrap;transform:scaleX(0.86);transform-origin:left;">PPS_w.9</div>
<div style="position:absolute;left:164.20px;top:926.28px;line-height:12px;font-size:9.6px;color:#39401f;font-weight:normal;white-space:nowrap;transform:scaleX(0.98);transform-origin:left;">BN</div>
<svg style="position:absolute;left:188.9px;top:929.88px;" width="5.2" height="3.2" viewBox="0 0 5.2 3.2"><path d="M0 0 H5.2 L2.6 3.2 Z" fill="#5a4a12"/></svg>
<div style="position:absolute;left:200.50px;top:926.28px;line-height:12px;font-size:9.6px;color:#39401f;font-weight:normal;white-space:nowrap;transform:scaleX(0.98);transform-origin:left;">Tempo 3.1.0</div>
<div style="position:absolute;left:263.50px;top:926.28px;line-height:12px;font-size:9.6px;color:#39401f;font-weight:normal;white-space:nowrap;transform:scaleX(0.98);transform-origin:left;">1 x</div>
<div style="position:absolute;left:291.50px;top:926.28px;line-height:12px;font-size:9.6px;color:#39401f;font-weight:normal;white-space:nowrap;transform:scaleX(0.98);transform-origin:left;">5</div>
<div style="position:absolute;right:1583.00px;text-align:right;top:926.28px;line-height:12px;font-size:9.6px;color:#39401f;font-weight:normal;white-space:nowrap;transform:scaleX(0.92);transform-origin:right;">@7,0</div>
<div style="position:absolute;left:270.00px;width:200px;text-align:center;top:926.28px;line-height:12px;font-size:9.6px;color:#1c2a4a;font-weight:bold;white-space:nowrap;transform:scaleX(0.95);transform-origin:center;">90,0</div>
<div style="position:absolute;left:309.50px;width:200px;text-align:center;top:926.28px;line-height:12px;font-size:9.6px;color:#39401f;font-weight:normal;white-space:nowrap;transform:scaleX(0.92);transform-origin:center;">@7,0</div>
<div style="position:absolute;left:386.00px;width:200px;text-align:center;top:926.28px;line-height:12px;font-size:9.6px;color:#3b4560;font-weight:normal;white-space:nowrap;transform:scaleX(0.95);transform-origin:center;">115</div>
<div style="position:absolute;left:162px;top:938.36px;width:310px;height:13.76px;background:#fdd60c"></div>
<div style="position:absolute;left:126.50px;top:939.64px;line-height:12px;font-size:8.6px;color:#3466c8;font-weight:normal;white-space:nowrap;transform:scaleX(0.86);transform-origin:left;">PPS_w.9</div>
<div style="position:absolute;left:164.20px;top:939.64px;line-height:12px;font-size:9.6px;color:#39401f;font-weight:normal;white-space:nowrap;transform:scaleX(0.98);transform-origin:left;">BN</div>
<svg style="position:absolute;left:188.9px;top:943.24px;" width="5.2" height="3.2" viewBox="0 0 5.2 3.2"><path d="M0 0 H5.2 L2.6 3.2 Z" fill="#5a4a12"/></svg>
<div style="position:absolute;left:200.50px;top:939.64px;line-height:12px;font-size:9.6px;color:#39401f;font-weight:normal;white-space:nowrap;transform:scaleX(0.98);transform-origin:left;">Tempo 3.1.0</div>
<div style="position:absolute;left:263.50px;top:939.64px;line-height:12px;font-size:9.6px;color:#39401f;font-weight:normal;white-space:nowrap;transform:scaleX(0.98);transform-origin:left;">1 x</div>
<div style="position:absolute;left:291.50px;top:939.64px;line-height:12px;font-size:9.6px;color:#39401f;font-weight:normal;white-space:nowrap;transform:scaleX(0.98);transform-origin:left;">5</div>
<div style="position:absolute;right:1583.00px;text-align:right;top:939.64px;line-height:12px;font-size:9.6px;color:#39401f;font-weight:normal;white-space:nowrap;transform:scaleX(0.92);transform-origin:right;">@8,0</div>
<div style="position:absolute;left:270.00px;width:200px;text-align:center;top:939.64px;line-height:12px;font-size:9.6px;color:#1c2a4a;font-weight:bold;white-space:nowrap;transform:scaleX(0.95);transform-origin:center;">100,0</div>
<div style="position:absolute;left:309.50px;width:200px;text-align:center;top:939.64px;line-height:12px;font-size:9.6px;color:#39401f;font-weight:normal;white-space:nowrap;transform:scaleX(0.92);transform-origin:center;">@9,0</div>
<div style="position:absolute;left:352.00px;width:200px;text-align:center;top:939.64px;line-height:12px;font-size:9.6px;color:#39401f;font-weight:normal;white-space:nowrap;transform:scaleX(0.92);transform-origin:center;">@7,6</div>
<div style="position:absolute;left:386.00px;width:200px;text-align:center;top:939.64px;line-height:12px;font-size:9.6px;color:#3b4560;font-weight:normal;white-space:nowrap;transform:scaleX(0.95);transform-origin:center;">119</div>
<div style="position:absolute;left:162px;top:951.72px;width:310px;height:13.76px;background:#fdd60c"></div>
<div style="position:absolute;left:126.50px;top:953.00px;line-height:12px;font-size:8.6px;color:#3466c8;font-weight:normal;white-space:nowrap;transform:scaleX(0.86);transform-origin:left;">PPS_w.9</div>
<div style="position:absolute;left:164.20px;top:953.00px;line-height:12px;font-size:9.6px;color:#39401f;font-weight:normal;white-space:nowrap;transform:scaleX(0.98);transform-origin:left;">BN</div>
<svg style="position:absolute;left:188.9px;top:956.6px;" width="5.2" height="3.2" viewBox="0 0 5.2 3.2"><path d="M0 0 H5.2 L2.6 3.2 Z" fill="#5a4a12"/></svg>
<div style="position:absolute;left:200.50px;top:953.00px;line-height:12px;font-size:9.6px;color:#39401f;font-weight:normal;white-space:nowrap;transform:scaleX(0.98);transform-origin:left;">Comp</div>
<div style="position:absolute;left:263.50px;top:953.00px;line-height:12px;font-size:9.6px;color:#39401f;font-weight:normal;white-space:nowrap;transform:scaleX(0.98);transform-origin:left;">4 x</div>
<div style="position:absolute;left:291.50px;top:953.00px;line-height:12px;font-size:9.6px;color:#39401f;font-weight:normal;white-space:nowrap;transform:scaleX(0.98);transform-origin:left;">5</div>
<div style="position:absolute;right:1583.00px;text-align:right;top:953.00px;line-height:12px;font-size:9.6px;color:#39401f;font-weight:normal;white-space:nowrap;transform:scaleX(0.92);transform-origin:right;">@8,0</div>
<div style="position:absolute;left:270.00px;width:200px;text-align:center;top:953.00px;line-height:12px;font-size:9.6px;color:#1c2a4a;font-weight:bold;white-space:nowrap;transform:scaleX(0.95);transform-origin:center;">100,0</div>
<div style="position:absolute;left:309.50px;width:200px;text-align:center;top:953.00px;line-height:12px;font-size:9.6px;color:#39401f;font-weight:normal;white-space:nowrap;transform:scaleX(0.92);transform-origin:center;">@8,0</div>
<div style="position:absolute;left:386.00px;width:200px;text-align:center;top:953.00px;line-height:12px;font-size:9.6px;color:#3b4560;font-weight:normal;white-space:nowrap;transform:scaleX(0.95);transform-origin:center;">123</div>
<div style="position:absolute;left:162px;top:965.08px;width:310px;height:13.76px;background:#5fc8fa"></div>
<div style="position:absolute;left:126.50px;top:966.36px;line-height:12px;font-size:8.6px;color:#3466c8;font-weight:normal;white-space:nowrap;transform:scaleX(0.86);transform-origin:left;">PPS_w.9</div>
<div style="position:absolute;left:164.20px;top:966.36px;line-height:12px;font-size:9.6px;color:#1d3a72;font-weight:normal;white-space:nowrap;transform:scaleX(0.98);transform-origin:left;">SQ</div>
<svg style="position:absolute;left:188.9px;top:969.96px;" width="5.2" height="3.2" viewBox="0 0 5.2 3.2"><path d="M0 0 H5.2 L2.6 3.2 Z" fill="#1d3a72"/></svg>
<div style="position:absolute;left:200.50px;top:966.36px;line-height:12px;font-size:9.6px;color:#1d3a72;font-weight:normal;white-space:nowrap;transform:scaleX(0.98);transform-origin:left;">Comp</div>
<div style="position:absolute;left:263.50px;top:966.36px;line-height:12px;font-size:9.6px;color:#1d3a72;font-weight:normal;white-space:nowrap;transform:scaleX(0.98);transform-origin:left;">2 x</div>
<div style="position:absolute;left:291.50px;top:966.36px;line-height:12px;font-size:9.6px;color:#1d3a72;font-weight:normal;white-space:nowrap;transform:scaleX(0.98);transform-origin:left;">3</div>
<div style="position:absolute;right:1583.00px;text-align:right;top:966.36px;line-height:12px;font-size:9.6px;color:#1d3a72;font-weight:normal;white-space:nowrap;transform:scaleX(0.92);transform-origin:right;">@8,0</div>
<div style="position:absolute;left:270.00px;width:200px;text-align:center;top:966.36px;line-height:12px;font-size:9.6px;color:#1b2b55;font-weight:bold;white-space:nowrap;transform:scaleX(0.95);transform-origin:center;">170,0</div>
<div style="position:absolute;left:320.00px;width:200px;text-align:center;top:966.36px;line-height:12px;font-size:9.6px;color:#1d3a72;font-weight:normal;white-space:nowrap;transform:scaleX(0.92);transform-origin:center;">@8,0</div>
<div style="position:absolute;left:386.00px;width:200px;text-align:center;top:966.36px;line-height:12px;font-size:9.6px;color:#3b4560;font-weight:normal;white-space:nowrap;transform:scaleX(0.95);transform-origin:center;">197</div>
<div style="position:absolute;left:162px;top:978.44px;width:310px;height:13.76px;background:#5fc8fa"></div>
<div style="position:absolute;left:126.50px;top:979.72px;line-height:12px;font-size:8.6px;color:#3466c8;font-weight:normal;white-space:nowrap;transform:scaleX(0.86);transform-origin:left;">PPS_w.9</div>
<div style="position:absolute;left:164.20px;top:979.72px;line-height:12px;font-size:9.6px;color:#1d3a72;font-weight:normal;white-space:nowrap;transform:scaleX(0.98);transform-origin:left;">SQ</div>
<svg style="position:absolute;left:188.9px;top:983.32px;" width="5.2" height="3.2" viewBox="0 0 5.2 3.2"><path d="M0 0 H5.2 L2.6 3.2 Z" fill="#1d3a72"/></svg>
<div style="position:absolute;left:200.50px;top:979.72px;line-height:12px;font-size:9.6px;color:#1d3a72;font-weight:normal;white-space:nowrap;transform:scaleX(0.98);transform-origin:left;">Comp</div>
<div style="position:absolute;left:263.50px;top:979.72px;line-height:12px;font-size:9.6px;color:#1d3a72;font-weight:normal;white-space:nowrap;transform:scaleX(0.98);transform-origin:left;">1 x&nbsp; 3</div>
<div style="position:absolute;right:1583.00px;text-align:right;top:979.72px;line-height:12px;font-size:9.6px;color:#1d3a72;font-weight:normal;white-space:nowrap;transform:scaleX(0.92);transform-origin:right;">@8,0</div>
<div style="position:absolute;left:270.00px;width:200px;text-align:center;top:979.72px;line-height:12px;font-size:9.6px;color:#1b2b55;font-weight:bold;white-space:nowrap;transform:scaleX(0.95);transform-origin:center;">182,0</div>
<div style="position:absolute;left:309.50px;width:200px;text-align:center;top:979.72px;line-height:12px;font-size:9.6px;color:#1d3a72;font-weight:normal;white-space:nowrap;transform:scaleX(0.92);transform-origin:center;">@8,0</div>
<div style="position:absolute;left:352.00px;width:200px;text-align:center;top:979.72px;line-height:12px;font-size:9.6px;color:#1d3a72;font-weight:normal;white-space:nowrap;transform:scaleX(0.92);transform-origin:center;">@8,5</div>
<div style="position:absolute;left:386.00px;width:200px;text-align:center;top:979.72px;line-height:12px;font-size:9.6px;color:#3b4560;font-weight:normal;white-space:nowrap;transform:scaleX(0.95);transform-origin:center;">211</div>
<div style="position:absolute;left:162px;top:991.8px;width:310px;height:13.76px;background:#5fc8fa"></div>
<div style="position:absolute;left:126.50px;top:993.08px;line-height:12px;font-size:8.6px;color:#3466c8;font-weight:normal;white-space:nowrap;transform:scaleX(0.86);transform-origin:left;">PPS_w.9</div>
<div style="position:absolute;left:164.20px;top:993.08px;line-height:12px;font-size:9.6px;color:#1d3a72;font-weight:normal;white-space:nowrap;transform:scaleX(0.98);transform-origin:left;">SQ</div>
<svg style="position:absolute;left:188.9px;top:996.68px;" width="5.2" height="3.2" viewBox="0 0 5.2 3.2"><path d="M0 0 H5.2 L2.6 3.2 Z" fill="#1d3a72"/></svg>
<div style="position:absolute;left:200.50px;top:993.08px;line-height:12px;font-size:9.6px;color:#1d3a72;font-weight:normal;white-space:nowrap;transform:scaleX(0.98);transform-origin:left;">Tempo 0.2.0</div>
<div style="position:absolute;left:263.50px;top:993.08px;line-height:12px;font-size:9.6px;color:#1d3a72;font-weight:normal;white-space:nowrap;transform:scaleX(0.98);transform-origin:left;">5 x&nbsp; 5</div>
<div style="position:absolute;right:1583.00px;text-align:right;top:993.08px;line-height:12px;font-size:9.6px;color:#1d3a72;font-weight:normal;white-space:nowrap;transform:scaleX(0.92);transform-origin:right;">@8,0</div>
<div style="position:absolute;left:270.00px;width:200px;text-align:center;top:993.08px;line-height:12px;font-size:9.6px;color:#1b2b55;font-weight:bold;white-space:nowrap;transform:scaleX(0.95);transform-origin:center;">155,0</div>
<div style="position:absolute;left:309.50px;width:200px;text-align:center;top:993.08px;line-height:12px;font-size:9.6px;color:#1d3a72;font-weight:normal;white-space:nowrap;transform:scaleX(0.92);transform-origin:center;">@7,0</div>
<div style="position:absolute;left:352.00px;width:200px;text-align:center;top:993.08px;line-height:12px;font-size:9.6px;color:#1d3a72;font-weight:normal;white-space:nowrap;transform:scaleX(0.92);transform-origin:center;">@8,0</div>
<div style="position:absolute;left:386.00px;width:200px;text-align:center;top:993.08px;line-height:12px;font-size:9.6px;color:#3b4560;font-weight:normal;white-space:nowrap;transform:scaleX(0.95);transform-origin:center;">197</div>
<svg style="position:absolute;left:188.9px;top:1010.04px;" width="5.2" height="3.2" viewBox="0 0 5.2 3.2"><path d="M0 0 H5.2 L2.6 3.2 Z" fill="#2b6be0"/></svg>
<svg style="position:absolute;left:188.9px;top:1023.4px;" width="5.2" height="3.2" viewBox="0 0 5.2 3.2"><path d="M0 0 H5.2 L2.6 3.2 Z" fill="#2b6be0"/></svg>
<svg style="position:absolute;left:188.9px;top:1036.7600000000002px;" width="5.2" height="3.2" viewBox="0 0 5.2 3.2"><path d="M0 0 H5.2 L2.6 3.2 Z" fill="#2b6be0"/></svg>
<div style="position:absolute;left:161px;top:925px;width:1.5px;height:116px;background:#000"></div>
<div style="position:absolute;left:353px;top:923px;width:1.4px;height:118px;background:#111"></div>
<div style="position:absolute;left:124px;top:923.8px;width:348px;height:1.6px;background:#000"></div>
<div style="position:absolute;left:124px;top:907px;width:348px;height:134px;border:1.5px solid #000;border-bottom:none;"></div>
<div style="position:absolute;left:43.00px;width:200px;text-align:center;top:911.00px;line-height:12px;font-size:8.8px;color:#f0f0f0;font-weight:bold;white-space:nowrap;transform:scaleX(0.95);transform-origin:center;">03/03</div>
<div style="position:absolute;left:165.00px;top:912.50px;line-height:12px;font-size:8.6px;color:#eeeeee;font-weight:bold;white-space:nowrap;transform:scaleX(0.86);transform-origin:left;">Exercice</div>
<div style="position:absolute;left:200.50px;top:912.50px;line-height:12px;font-size:8.6px;color:#eeeeee;font-weight:bold;white-space:nowrap;transform:scaleX(0.86);transform-origin:left;">Variation</div>
<div style="position:absolute;left:261.00px;top:912.50px;line-height:12px;font-size:8.6px;color:#eeeeee;font-weight:bold;white-space:nowrap;transform:scaleX(0.86);transform-origin:left;">Sets</div>
<div style="position:absolute;left:280.50px;top:912.50px;line-height:12px;font-size:8.6px;color:#eeeeee;font-weight:bold;white-space:nowrap;transform:scaleX(0.86);transform-origin:left;">Reps</div>
<div style="position:absolute;left:298.5px;top:912.5px;width:54.5px;overflow:hidden;line-height:12px;font-size:8.6px;color:#eeeeee;font-weight:bold;white-space:nowrap;"><span style="display:inline-block;transform:scaleX(0.86);transform-origin:left">Ɛ attendu | %1RM</span></div>
<div style="position:absolute;left:358.00px;top:912.50px;line-height:12px;font-size:8.6px;color:#eeeeee;font-weight:bold;white-space:nowrap;transform:scaleX(0.86);transform-origin:left;">Charge</div>
<div style="position:absolute;left:390.50px;top:912.50px;line-height:12px;font-size:8.6px;color:#eeeeee;font-weight:bold;white-space:nowrap;transform:scaleX(0.86);transform-origin:left;">RPE 1<span style="font-size:5.5px;position:relative;top:-3px">st</span> set</div>
<div style="position:absolute;left:436.00px;top:912.50px;line-height:12px;font-size:8.6px;color:#eeeeee;font-weight:bold;white-space:nowrap;transform:scaleX(0.86);transform-origin:left;">RPE_last</div>
<div style="position:absolute;left:475.50px;top:912.50px;line-height:12px;font-size:8.6px;color:#4a5570;font-weight:bold;white-space:nowrap;transform:scaleX(0.86);transform-origin:left;">e1RM</div>
<div style="position:absolute;left:500px;top:907px;width:220px;height:134px;overflow:hidden">
<div style="position:absolute;left:0px;top:0.00px;width:220px;height:134.00px;background:#1c4587"></div>
<div style="position:absolute;left:0px;top:0.00px;width:220px;height:18.00px;background:#16264f"></div>
<div style="position:absolute;left:0px;top:17.00px;width:220px;height:2.20px;background:#21c4e8"></div>
<div style="position:absolute;left:0px;top:0.00px;width:220px;height:134.00px;border:1.5px solid #0b1226;border-top:1px solid #0b1226;border-bottom:none;"></div>
<div style="position:absolute;left:10.00px;width:200px;text-align:center;top:4.80px;line-height:12px;font-size:9.6px;color:#21c4e8;font-weight:bold;white-space:nowrap;">Notes</div>
<div style="position:absolute;left:2.00px;top:32.50px;line-height:12px;font-size:10.2px;color:#dedede;font-weight:bold;white-space:nowrap;transform:scaleX(0.95);transform-origin:left;">Consigne</div>
<div style="position:absolute;left:2px;top:57.60px;width:212px;height:0.00px;border-top:1.6px dotted #21c4e8"></div>
<div style="position:absolute;left:2px;top:86.40px;width:212px;height:0.00px;border-top:1.6px dotted #21c4e8"></div>
<div style="position:absolute;left:4.00px;top:61.30px;line-height:12px;font-size:9.8px;color:#dcdcdc;font-weight:bold;white-space:nowrap;transform:scaleX(0.95);transform-origin:left;">Duree</div>
<div style="position:absolute;left:4.00px;top:74.80px;line-height:12px;font-size:9.8px;color:#dcdcdc;font-weight:bold;white-space:nowrap;transform:scaleX(0.95);transform-origin:left;">Forme</div>
<div style="position:absolute;left:54px;top:61.60px;width:158px;height:10.00px;background:#0f182d;border-radius:5px"></div>
<div style="position:absolute;left:28.00px;width:200px;text-align:center;top:60.60px;line-height:12px;font-size:9.6px;color:#f4f4f4;font-weight:normal;white-space:nowrap;">02:30</div>
<svg style="position:absolute;left:201.5px;top:64.90px" width="6" height="3.4" viewBox="0 0 6 3.4"><path d="M0 0 H6 L3 3.4Z" fill="#f4f4f4"/></svg>
<div style="position:absolute;left:54px;top:75.10px;width:158px;height:10.00px;background:#0f182d;border-radius:5px"></div>
<div style="position:absolute;left:28.00px;width:200px;text-align:center;top:74.10px;line-height:12px;font-size:9.6px;color:#f4f4f4;font-weight:normal;white-space:nowrap;">Excellente</div>
<svg style="position:absolute;left:201.5px;top:78.40px" width="6" height="3.4" viewBox="0 0 6 3.4"><path d="M0 0 H6 L3 3.4Z" fill="#f4f4f4"/></svg>
<div style="position:absolute;left:-74.00px;width:200px;text-align:center;top:102.30px;line-height:12px;font-size:10px;color:#2ee86e;font-weight:bold;white-space:nowrap;">+</div>
<div style="position:absolute;left:-74.00px;width:200px;text-align:center;top:142.80px;line-height:12px;font-size:10px;color:#f0a0a8;font-weight:bold;white-space:nowrap;">-</div>
<div style="position:absolute;left:51.00px;top:102.30px;line-height:12px;font-size:9.6px;color:#2ee86e;font-weight:normal;white-space:nowrap;font-style:italic">Bon focus et tempo SQ parfait</div>
</div>
<div style="position:absolute;left:760px;top:324px;width:348px;height:168px;background:#c9daf8"></div>
<div style="position:absolute;left:760px;top:324px;width:348px;height:19px;background:#16264f"></div>
<div style="position:absolute;left:760px;top:324px;width:38px;height:168px;background:#16264f"></div>
<div style="position:absolute;left:798px;top:343.0px;width:310px;height:13.76px;background:#5fc8fa"></div>
<div style="position:absolute;left:762.50px;top:344.28px;line-height:12px;font-size:8.6px;color:#3466c8;font-weight:normal;white-space:nowrap;transform:scaleX(0.86);transform-origin:left;">PPS_w.10</div>
<div style="position:absolute;left:800.20px;top:344.28px;line-height:12px;font-size:9.6px;color:#1d3a72;font-weight:normal;white-space:nowrap;transform:scaleX(0.98);transform-origin:left;">SQ</div>
<svg style="position:absolute;left:824.9px;top:347.88px;" width="5.2" height="3.2" viewBox="0 0 5.2 3.2"><path d="M0 0 H5.2 L2.6 3.2 Z" fill="#1d3a72"/></svg>
<div style="position:absolute;left:836.50px;top:344.28px;line-height:12px;font-size:9.6px;color:#1d3a72;font-weight:normal;white-space:nowrap;transform:scaleX(0.98);transform-origin:left;">Comp</div>
<div style="position:absolute;left:899.50px;top:344.28px;line-height:12px;font-size:9.6px;color:#1d3a72;font-weight:normal;white-space:nowrap;transform:scaleX(0.98);transform-origin:left;">1 x&nbsp; 1</div>
<div style="position:absolute;right:947.00px;text-align:right;top:344.28px;line-height:12px;font-size:9.6px;color:#1d3a72;font-weight:normal;white-space:nowrap;transform:scaleX(0.92);transform-origin:right;">@7,0</div>
<div style="position:absolute;left:906.00px;width:200px;text-align:center;top:344.28px;line-height:12px;font-size:9.6px;color:#1b2b55;font-weight:bold;white-space:nowrap;transform:scaleX(0.95);transform-origin:center;">215,0</div>
<div style="position:absolute;left:945.50px;width:200px;text-align:center;top:344.28px;line-height:12px;font-size:9.6px;color:#1d3a72;font-weight:normal;white-space:nowrap;transform:scaleX(0.92);transform-origin:center;">@9,5</div>
<div style="position:absolute;left:1022.00px;width:200px;text-align:center;top:344.28px;line-height:12px;font-size:9.6px;color:#3b4560;font-weight:normal;white-space:nowrap;transform:scaleX(0.95);transform-origin:center;">220</div>
<div style="position:absolute;left:798px;top:356.36px;width:310px;height:13.76px;background:#5fc8fa"></div>
<div style="position:absolute;left:762.50px;top:357.64px;line-height:12px;font-size:8.6px;color:#3466c8;font-weight:normal;white-space:nowrap;transform:scaleX(0.86);transform-origin:left;">PPS_w.10</div>
<div style="position:absolute;left:800.20px;top:357.64px;line-height:12px;font-size:9.6px;color:#1d3a72;font-weight:normal;white-space:nowrap;transform:scaleX(0.98);transform-origin:left;">SQ</div>
<svg style="position:absolute;left:824.9px;top:361.24px;" width="5.2" height="3.2" viewBox="0 0 5.2 3.2"><path d="M0 0 H5.2 L2.6 3.2 Z" fill="#1d3a72"/></svg>
<div style="position:absolute;left:836.50px;top:357.64px;line-height:12px;font-size:9.6px;color:#1d3a72;font-weight:normal;white-space:nowrap;transform:scaleX(0.98);transform-origin:left;">Comp</div>
<div style="position:absolute;left:899.50px;top:357.64px;line-height:12px;font-size:9.6px;color:#1d3a72;font-weight:normal;white-space:nowrap;transform:scaleX(0.98);transform-origin:left;">1 x&nbsp; 1</div>
<div style="position:absolute;right:947.00px;text-align:right;top:357.64px;line-height:12px;font-size:9.6px;color:#1d3a72;font-weight:normal;white-space:nowrap;transform:scaleX(0.92);transform-origin:right;">@8,0</div>
<div style="position:absolute;left:906.00px;width:200px;text-align:center;top:357.64px;line-height:12px;font-size:9.6px;color:#1b2b55;font-weight:bold;white-space:nowrap;transform:scaleX(0.95);transform-origin:center;">207,0</div>
<div style="position:absolute;left:945.50px;width:200px;text-align:center;top:357.64px;line-height:12px;font-size:9.6px;color:#1d3a72;font-weight:normal;white-space:nowrap;transform:scaleX(0.92);transform-origin:center;">@9,5</div>
<div style="position:absolute;left:1022.00px;width:200px;text-align:center;top:357.64px;line-height:12px;font-size:9.6px;color:#3b4560;font-weight:normal;white-space:nowrap;transform:scaleX(0.95);transform-origin:center;">212</div>
<div style="position:absolute;left:798px;top:369.72px;width:310px;height:13.76px;background:#5fc8fa"></div>
<div style="position:absolute;left:762.50px;top:371.00px;line-height:12px;font-size:8.6px;color:#3466c8;font-weight:normal;white-space:nowrap;transform:scaleX(0.86);transform-origin:left;">PPS_w.10</div>
<div style="position:absolute;left:800.20px;top:371.00px;line-height:12px;font-size:9.6px;color:#1d3a72;font-weight:normal;white-space:nowrap;transform:scaleX(0.98);transform-origin:left;">SQ</div>
<svg style="position:absolute;left:824.9px;top:374.6px;" width="5.2" height="3.2" viewBox="0 0 5.2 3.2"><path d="M0 0 H5.2 L2.6 3.2 Z" fill="#1d3a72"/></svg>
<div style="position:absolute;left:836.50px;top:371.00px;line-height:12px;font-size:9.6px;color:#1d3a72;font-weight:normal;white-space:nowrap;transform:scaleX(0.98);transform-origin:left;">Tempo</div>
<div style="position:absolute;left:899.50px;top:371.00px;line-height:12px;font-size:9.6px;color:#1d3a72;font-weight:normal;white-space:nowrap;transform:scaleX(0.98);transform-origin:left;">2 x&nbsp; 3</div>
<div style="position:absolute;right:947.00px;text-align:right;top:371.00px;line-height:12px;font-size:9.6px;color:#1d3a72;font-weight:normal;white-space:nowrap;transform:scaleX(0.92);transform-origin:right;">@8,0</div>
<div style="position:absolute;left:906.00px;width:200px;text-align:center;top:371.00px;line-height:12px;font-size:9.6px;color:#1b2b55;font-weight:bold;white-space:nowrap;transform:scaleX(0.95);transform-origin:center;">170,0</div>
<div style="position:absolute;left:945.50px;width:200px;text-align:center;top:371.00px;line-height:12px;font-size:9.6px;color:#1d3a72;font-weight:normal;white-space:nowrap;transform:scaleX(0.92);transform-origin:center;">@8,5</div>
<div style="position:absolute;left:1022.00px;width:200px;text-align:center;top:371.00px;line-height:12px;font-size:9.6px;color:#3b4560;font-weight:normal;white-space:nowrap;transform:scaleX(0.95);transform-origin:center;">194</div>
<div style="position:absolute;left:798px;top:383.08px;width:310px;height:13.76px;background:#5fc8fa"></div>
<div style="position:absolute;left:762.50px;top:384.36px;line-height:12px;font-size:8.6px;color:#3466c8;font-weight:normal;white-space:nowrap;transform:scaleX(0.86);transform-origin:left;">PPS_w.10</div>
<div style="position:absolute;left:800.20px;top:384.36px;line-height:12px;font-size:9.6px;color:#1d3a72;font-weight:normal;white-space:nowrap;transform:scaleX(0.98);transform-origin:left;">SQ</div>
<svg style="position:absolute;left:824.9px;top:387.96px;" width="5.2" height="3.2" viewBox="0 0 5.2 3.2"><path d="M0 0 H5.2 L2.6 3.2 Z" fill="#1d3a72"/></svg>
<div style="position:absolute;left:836.50px;top:384.36px;line-height:12px;font-size:9.6px;color:#1d3a72;font-weight:normal;white-space:nowrap;transform:scaleX(0.98);transform-origin:left;">Tempo</div>
<div style="position:absolute;left:899.50px;top:384.36px;line-height:12px;font-size:9.6px;color:#1d3a72;font-weight:normal;white-space:nowrap;transform:scaleX(0.98);transform-origin:left;">1 x&nbsp; 4</div>
<div style="position:absolute;right:947.00px;text-align:right;top:384.36px;line-height:12px;font-size:9.6px;color:#1d3a72;font-weight:normal;white-space:nowrap;transform:scaleX(0.92);transform-origin:right;">@8,0</div>
<div style="position:absolute;left:906.00px;width:200px;text-align:center;top:384.36px;line-height:12px;font-size:9.6px;color:#1b2b55;font-weight:bold;white-space:nowrap;transform:scaleX(0.95);transform-origin:center;">176,0</div>
<div style="position:absolute;left:945.50px;width:200px;text-align:center;top:384.36px;line-height:12px;font-size:9.6px;color:#1d3a72;font-weight:normal;white-space:nowrap;transform:scaleX(0.92);transform-origin:center;">@8,0</div>
<div style="position:absolute;left:988.00px;width:200px;text-align:center;top:384.36px;line-height:12px;font-size:9.6px;color:#1d3a72;font-weight:normal;white-space:nowrap;transform:scaleX(0.92);transform-origin:center;">@9,0</div>
<div style="position:absolute;left:1022.00px;width:200px;text-align:center;top:384.36px;line-height:12px;font-size:9.6px;color:#3b4560;font-weight:normal;white-space:nowrap;transform:scaleX(0.95);transform-origin:center;">210</div>
<div style="position:absolute;left:798px;top:396.44px;width:310px;height:13.76px;background:#6b7a90"></div>
<div style="position:absolute;left:762.50px;top:397.72px;line-height:12px;font-size:8.6px;color:#3466c8;font-weight:normal;white-space:nowrap;transform:scaleX(0.86);transform-origin:left;">PPS_w.10</div>
<div style="position:absolute;left:800.20px;top:397.72px;line-height:12px;font-size:9.6px;color:#f4f4f4;font-weight:normal;white-space:nowrap;transform:scaleX(0.98);transform-origin:left;">AC</div>
<svg style="position:absolute;left:824.9px;top:401.32px;" width="5.2" height="3.2" viewBox="0 0 5.2 3.2"><path d="M0 0 H5.2 L2.6 3.2 Z" fill="#f4f4f4"/></svg>
<div style="position:absolute;left:836.50px;top:397.72px;line-height:12px;font-size:9.6px;color:#f4f4f4;font-weight:normal;white-space:nowrap;transform:scaleX(0.98);transform-origin:left;">RDB</div>
<div style="position:absolute;left:899.50px;top:397.72px;line-height:12px;font-size:9.6px;color:#f4f4f4;font-weight:normal;white-space:nowrap;transform:scaleX(0.98);transform-origin:left;">4 x&nbsp; 10</div>
<div style="position:absolute;right:947.00px;text-align:right;top:397.72px;line-height:12px;font-size:9.6px;color:#f4f4f4;font-weight:normal;white-space:nowrap;transform:scaleX(0.92);transform-origin:right;">@8,0</div>
<div style="position:absolute;left:906.00px;width:200px;text-align:center;top:397.72px;line-height:12px;font-size:9.6px;color:#f8f8f8;font-weight:bold;white-space:nowrap;transform:scaleX(0.95);transform-origin:center;">60,0</div>
<div style="position:absolute;left:945.50px;width:200px;text-align:center;top:397.72px;line-height:12px;font-size:9.6px;color:#f4f4f4;font-weight:normal;white-space:nowrap;transform:scaleX(0.92);transform-origin:center;">@9,0</div>
<div style="position:absolute;left:1022.00px;width:200px;text-align:center;top:397.72px;line-height:12px;font-size:9.6px;color:#3b4560;font-weight:normal;white-space:nowrap;transform:scaleX(0.95);transform-origin:center;">85</div>
<svg style="position:absolute;left:824.9px;top:414.68px;" width="5.2" height="3.2" viewBox="0 0 5.2 3.2"><path d="M0 0 H5.2 L2.6 3.2 Z" fill="#2b6be0"/></svg>
<svg style="position:absolute;left:824.9px;top:428.03999999999996px;" width="5.2" height="3.2" viewBox="0 0 5.2 3.2"><path d="M0 0 H5.2 L2.6 3.2 Z" fill="#2b6be0"/></svg>
<svg style="position:absolute;left:824.9px;top:441.4px;" width="5.2" height="3.2" viewBox="0 0 5.2 3.2"><path d="M0 0 H5.2 L2.6 3.2 Z" fill="#2b6be0"/></svg>
<svg style="position:absolute;left:824.9px;top:454.76px;" width="5.2" height="3.2" viewBox="0 0 5.2 3.2"><path d="M0 0 H5.2 L2.6 3.2 Z" fill="#2b6be0"/></svg>
<svg style="position:absolute;left:824.9px;top:468.12px;" width="5.2" height="3.2" viewBox="0 0 5.2 3.2"><path d="M0 0 H5.2 L2.6 3.2 Z" fill="#2b6be0"/></svg>
<svg style="position:absolute;left:824.9px;top:481.48px;" width="5.2" height="3.2" viewBox="0 0 5.2 3.2"><path d="M0 0 H5.2 L2.6 3.2 Z" fill="#2b6be0"/></svg>
<div style="position:absolute;left:797px;top:343px;width:1.5px;height:149px;background:#000"></div>
<div style="position:absolute;left:989px;top:341px;width:1.4px;height:151px;background:#111"></div>
<div style="position:absolute;left:760px;top:341.8px;width:348px;height:1.6px;background:#000"></div>
<div style="position:absolute;left:760px;top:324px;width:348px;height:168px;border:1.5px solid #000;"></div>
<div style="position:absolute;left:679.00px;width:200px;text-align:center;top:328.00px;line-height:12px;font-size:8.8px;color:#f0f0f0;font-weight:bold;white-space:nowrap;transform:scaleX(0.95);transform-origin:center;">07/03</div>
<div style="position:absolute;left:801.00px;top:330.50px;line-height:12px;font-size:8.6px;color:#eeeeee;font-weight:bold;white-space:nowrap;transform:scaleX(0.86);transform-origin:left;">Exercice</div>
<div style="position:absolute;left:836.50px;top:330.50px;line-height:12px;font-size:8.6px;color:#eeeeee;font-weight:bold;white-space:nowrap;transform:scaleX(0.86);transform-origin:left;">Variation</div>
<div style="position:absolute;left:897.00px;top:330.50px;line-height:12px;font-size:8.6px;color:#eeeeee;font-weight:bold;white-space:nowrap;transform:scaleX(0.86);transform-origin:left;">Sets</div>
<div style="position:absolute;left:916.50px;top:330.50px;line-height:12px;font-size:8.6px;color:#eeeeee;font-weight:bold;white-space:nowrap;transform:scaleX(0.86);transform-origin:left;">Reps</div>
<div style="position:absolute;left:934.5px;top:330.5px;width:54.5px;overflow:hidden;line-height:12px;font-size:8.6px;color:#eeeeee;font-weight:bold;white-space:nowrap;"><span style="display:inline-block;transform:scaleX(0.86);transform-origin:left">Ɛ attendu | %1RM</span></div>
<div style="position:absolute;left:994.00px;top:330.50px;line-height:12px;font-size:8.6px;color:#eeeeee;font-weight:bold;white-space:nowrap;transform:scaleX(0.86);transform-origin:left;">Charge</div>
<div style="position:absolute;left:1026.50px;top:330.50px;line-height:12px;font-size:8.6px;color:#eeeeee;font-weight:bold;white-space:nowrap;transform:scaleX(0.86);transform-origin:left;">RPE 1<span style="font-size:5.5px;position:relative;top:-3px">st</span> set</div>
<div style="position:absolute;left:1072.00px;top:330.50px;line-height:12px;font-size:8.6px;color:#eeeeee;font-weight:bold;white-space:nowrap;transform:scaleX(0.86);transform-origin:left;">RPE_last</div>
<div style="position:absolute;left:1111.50px;top:330.50px;line-height:12px;font-size:8.6px;color:#4a5570;font-weight:bold;white-space:nowrap;transform:scaleX(0.86);transform-origin:left;">e1RM</div>
<div style="position:absolute;left:1136px;top:324px;width:220px;height:168px;overflow:hidden">
<div style="position:absolute;left:0px;top:0.00px;width:220px;height:168.00px;background:#1c4587"></div>
<div style="position:absolute;left:0px;top:0.00px;width:220px;height:19.00px;background:#16264f"></div>
<div style="position:absolute;left:0px;top:18.00px;width:220px;height:2.20px;background:#21c4e8"></div>
<div style="position:absolute;left:0px;top:0.00px;width:220px;height:168.00px;border:1.5px solid #0b1226;border-top:1px solid #0b1226;"></div>
<div style="position:absolute;left:10.00px;width:200px;text-align:center;top:5.30px;line-height:12px;font-size:9.6px;color:#21c4e8;font-weight:bold;white-space:nowrap;">Notes</div>
<div style="position:absolute;left:2.00px;top:33.50px;line-height:12px;font-size:10.2px;color:#dedede;font-weight:bold;white-space:nowrap;transform:scaleX(0.95);transform-origin:left;">Consigne</div>
<div style="position:absolute;left:34.00px;width:200px;text-align:center;top:28.20px;line-height:12px;font-size:9.6px;color:#e6e6e6;font-weight:normal;white-space:nowrap;font-style:italic">- Eviter le knee cave</div>
<div style="position:absolute;left:34.00px;width:200px;text-align:center;top:38.80px;line-height:12px;font-size:9.6px;color:#e6e6e6;font-weight:normal;white-space:nowrap;font-style:italic">- Focus respect du tempo</div>
<div style="position:absolute;left:2px;top:58.60px;width:212px;height:0.00px;border-top:1.6px dotted #21c4e8"></div>
<div style="position:absolute;left:2px;top:85.60px;width:212px;height:0.00px;border-top:1.6px dotted #21c4e8"></div>
<div style="position:absolute;left:4.00px;top:60.50px;line-height:12px;font-size:9.8px;color:#dcdcdc;font-weight:bold;white-space:nowrap;transform:scaleX(0.95);transform-origin:left;">Duree</div>
<div style="position:absolute;left:4.00px;top:74.00px;line-height:12px;font-size:9.8px;color:#dcdcdc;font-weight:bold;white-space:nowrap;transform:scaleX(0.95);transform-origin:left;">Forme</div>
<div style="position:absolute;left:54px;top:60.80px;width:158px;height:10.00px;background:#0f182d;border-radius:5px"></div>
<div style="position:absolute;left:28.00px;width:200px;text-align:center;top:59.80px;line-height:12px;font-size:9.6px;color:#f4f4f4;font-weight:normal;white-space:nowrap;">01:30</div>
<svg style="position:absolute;left:201.5px;top:64.10px" width="6" height="3.4" viewBox="0 0 6 3.4"><path d="M0 0 H6 L3 3.4Z" fill="#f4f4f4"/></svg>
<div style="position:absolute;left:54px;top:74.30px;width:158px;height:10.00px;background:#0f182d;border-radius:5px"></div>
<div style="position:absolute;left:28.00px;width:200px;text-align:center;top:73.30px;line-height:12px;font-size:9.6px;color:#f4f4f4;font-weight:normal;white-space:nowrap;">Bonne</div>
<svg style="position:absolute;left:201.5px;top:77.60px" width="6" height="3.4" viewBox="0 0 6 3.4"><path d="M0 0 H6 L3 3.4Z" fill="#f4f4f4"/></svg>
<div style="position:absolute;left:-74.00px;width:200px;text-align:center;top:101.50px;line-height:12px;font-size:10px;color:#2ee86e;font-weight:bold;white-space:nowrap;">+</div>
<div style="position:absolute;left:-74.00px;width:200px;text-align:center;top:142.00px;line-height:12px;font-size:10px;color:#f0a0a8;font-weight:bold;white-space:nowrap;">-</div>
<div style="position:absolute;left:51.00px;top:96.20px;line-height:12px;font-size:9.6px;color:#2ee86e;font-weight:normal;white-space:nowrap;font-style:italic">- Enfin bonne stance au squat,</div>
<div style="position:absolute;left:51.00px;top:106.80px;line-height:12px;font-size:9.6px;color:#2ee86e;font-weight:normal;white-space:nowrap;font-style:italic">meilleure amplitude</div>
<div style="position:absolute;left:51.00px;top:136.60px;line-height:12px;font-size:9.6px;color:#f2a4ac;font-weight:normal;white-space:nowrap;font-style:italic">- Low bar trop fort -></div>
<div style="position:absolute;left:51.00px;top:147.40px;line-height:12px;font-size:9.6px;color:#f2a4ac;font-weight:normal;white-space:nowrap;font-style:italic">douleur poignet 2/10</div>
</div>
<div style="position:absolute;left:760px;top:518px;width:348px;height:168.5px;background:#c9daf8"></div>
<div style="position:absolute;left:760px;top:518px;width:348px;height:17px;background:#16264f"></div>
<div style="position:absolute;left:760px;top:518px;width:38px;height:168.5px;background:#16264f"></div>
<div style="position:absolute;left:798px;top:535.0px;width:310px;height:13.76px;background:#fdd60c"></div>
<div style="position:absolute;left:762.50px;top:536.28px;line-height:12px;font-size:8.6px;color:#3466c8;font-weight:normal;white-space:nowrap;transform:scaleX(0.86);transform-origin:left;">PPS_w.10</div>
<div style="position:absolute;left:800.20px;top:536.28px;line-height:12px;font-size:9.6px;color:#39401f;font-weight:normal;white-space:nowrap;transform:scaleX(0.98);transform-origin:left;">BN</div>
<svg style="position:absolute;left:824.9px;top:539.88px;" width="5.2" height="3.2" viewBox="0 0 5.2 3.2"><path d="M0 0 H5.2 L2.6 3.2 Z" fill="#5a4a12"/></svg>
<div style="position:absolute;left:836.50px;top:536.28px;line-height:12px;font-size:9.6px;color:#39401f;font-weight:normal;white-space:nowrap;transform:scaleX(0.98);transform-origin:left;">Tempo 3.1.0</div>
<div style="position:absolute;left:899.50px;top:536.28px;line-height:12px;font-size:9.6px;color:#39401f;font-weight:normal;white-space:nowrap;transform:scaleX(0.98);transform-origin:left;">1 x&nbsp; 3</div>
<div style="position:absolute;right:947.00px;text-align:right;top:536.28px;line-height:12px;font-size:9.6px;color:#39401f;font-weight:normal;white-space:nowrap;transform:scaleX(0.92);transform-origin:right;">@8,0</div>
<div style="position:absolute;left:906.00px;width:200px;text-align:center;top:536.28px;line-height:12px;font-size:9.6px;color:#1c2a4a;font-weight:bold;white-space:nowrap;transform:scaleX(0.95);transform-origin:center;">100,0</div>
<div style="position:absolute;left:945.50px;width:200px;text-align:center;top:536.28px;line-height:12px;font-size:9.6px;color:#39401f;font-weight:normal;white-space:nowrap;transform:scaleX(0.92);transform-origin:center;">@8,0</div>
<div style="position:absolute;left:1022.00px;width:200px;text-align:center;top:536.28px;line-height:12px;font-size:9.6px;color:#3b4560;font-weight:normal;white-space:nowrap;transform:scaleX(0.95);transform-origin:center;">116</div>
<div style="position:absolute;left:798px;top:548.36px;width:310px;height:13.76px;background:#fdd60c"></div>
<div style="position:absolute;left:762.50px;top:549.64px;line-height:12px;font-size:8.6px;color:#3466c8;font-weight:normal;white-space:nowrap;transform:scaleX(0.86);transform-origin:left;">PPS_w.10</div>
<div style="position:absolute;left:800.20px;top:549.64px;line-height:12px;font-size:9.6px;color:#39401f;font-weight:normal;white-space:nowrap;transform:scaleX(0.98);transform-origin:left;">BN</div>
<svg style="position:absolute;left:824.9px;top:553.24px;" width="5.2" height="3.2" viewBox="0 0 5.2 3.2"><path d="M0 0 H5.2 L2.6 3.2 Z" fill="#5a4a12"/></svg>
<div style="position:absolute;left:836.50px;top:549.64px;line-height:12px;font-size:9.6px;color:#39401f;font-weight:normal;white-space:nowrap;transform:scaleX(0.98);transform-origin:left;">Comp</div>
<div style="position:absolute;left:899.50px;top:549.64px;line-height:12px;font-size:9.6px;color:#39401f;font-weight:normal;white-space:nowrap;transform:scaleX(0.98);transform-origin:left;">3 x&nbsp; 6</div>
<div style="position:absolute;right:947.00px;text-align:right;top:549.64px;line-height:12px;font-size:9.6px;color:#39401f;font-weight:normal;white-space:nowrap;transform:scaleX(0.92);transform-origin:right;">@9,0</div>
<div style="position:absolute;left:906.00px;width:200px;text-align:center;top:549.64px;line-height:12px;font-size:9.6px;color:#1c2a4a;font-weight:bold;white-space:nowrap;transform:scaleX(0.95);transform-origin:center;">100,0</div>
<div style="position:absolute;left:945.50px;width:200px;text-align:center;top:549.64px;line-height:12px;font-size:9.6px;color:#39401f;font-weight:normal;white-space:nowrap;transform:scaleX(0.92);transform-origin:center;">@9,0</div>
<div style="position:absolute;left:988.00px;width:200px;text-align:center;top:549.64px;line-height:12px;font-size:9.6px;color:#39401f;font-weight:normal;white-space:nowrap;transform:scaleX(0.92);transform-origin:center;">@10,0</div>
<div style="position:absolute;left:1022.00px;width:200px;text-align:center;top:549.64px;line-height:12px;font-size:9.6px;color:#3b4560;font-weight:normal;white-space:nowrap;transform:scaleX(0.95);transform-origin:center;">123</div>
<div style="position:absolute;left:798px;top:561.72px;width:310px;height:13.76px;background:#fdd60c"></div>
<div style="position:absolute;left:762.50px;top:563.00px;line-height:12px;font-size:8.6px;color:#3466c8;font-weight:normal;white-space:nowrap;transform:scaleX(0.86);transform-origin:left;">PPS_w.10</div>
<div style="position:absolute;left:800.20px;top:563.00px;line-height:12px;font-size:9.6px;color:#39401f;font-weight:normal;white-space:nowrap;transform:scaleX(0.98);transform-origin:left;">BN</div>
<svg style="position:absolute;left:824.9px;top:566.6px;" width="5.2" height="3.2" viewBox="0 0 5.2 3.2"><path d="M0 0 H5.2 L2.6 3.2 Z" fill="#5a4a12"/></svg>
<div style="position:absolute;left:836.50px;top:563.00px;line-height:12px;font-size:9.6px;color:#39401f;font-weight:normal;white-space:nowrap;transform:scaleX(0.98);transform-origin:left;">Comp</div>
<div style="position:absolute;left:899.50px;top:563.00px;line-height:12px;font-size:9.6px;color:#39401f;font-weight:normal;white-space:nowrap;transform:scaleX(0.98);transform-origin:left;">3 x&nbsp; 6</div>
<div style="position:absolute;right:947.00px;text-align:right;top:563.00px;line-height:12px;font-size:9.6px;color:#39401f;font-weight:normal;white-space:nowrap;transform:scaleX(0.92);transform-origin:right;">@8,5</div>
<div style="position:absolute;left:906.00px;width:200px;text-align:center;top:563.00px;line-height:12px;font-size:9.6px;color:#1c2a4a;font-weight:bold;white-space:nowrap;transform:scaleX(0.95);transform-origin:center;">107,0</div>
<div style="position:absolute;left:945.50px;width:200px;text-align:center;top:563.00px;line-height:12px;font-size:9.6px;color:#39401f;font-weight:normal;white-space:nowrap;transform:scaleX(0.92);transform-origin:center;">@8,5</div>
<div style="position:absolute;left:988.00px;width:200px;text-align:center;top:563.00px;line-height:12px;font-size:9.6px;color:#39401f;font-weight:normal;white-space:nowrap;transform:scaleX(0.92);transform-origin:center;">@9,0</div>
<div style="position:absolute;left:1022.00px;width:200px;text-align:center;top:563.00px;line-height:12px;font-size:9.6px;color:#3b4560;font-weight:normal;white-space:nowrap;transform:scaleX(0.95);transform-origin:center;">134</div>
<div style="position:absolute;left:798px;top:575.08px;width:310px;height:13.76px;background:#6b7a90"></div>
<div style="position:absolute;left:762.50px;top:576.36px;line-height:12px;font-size:8.6px;color:#3466c8;font-weight:normal;white-space:nowrap;transform:scaleX(0.86);transform-origin:left;">PPS_w.10</div>
<div style="position:absolute;left:800.20px;top:576.36px;line-height:12px;font-size:9.6px;color:#f4f4f4;font-weight:normal;white-space:nowrap;transform:scaleX(0.98);transform-origin:left;">AC</div>
<svg style="position:absolute;left:824.9px;top:579.96px;" width="5.2" height="3.2" viewBox="0 0 5.2 3.2"><path d="M0 0 H5.2 L2.6 3.2 Z" fill="#f4f4f4"/></svg>
<div style="position:absolute;left:836.50px;top:576.36px;line-height:12px;font-size:9.6px;color:#f4f4f4;font-weight:normal;white-space:nowrap;transform:scaleX(0.98);transform-origin:left;">Tractions</div>
<div style="position:absolute;left:899.50px;top:576.36px;line-height:12px;font-size:9.6px;color:#f4f4f4;font-weight:normal;white-space:nowrap;transform:scaleX(0.98);transform-origin:left;">4 x&nbsp; 7</div>
<div style="position:absolute;right:947.00px;text-align:right;top:576.36px;line-height:12px;font-size:9.6px;color:#f4f4f4;font-weight:normal;white-space:nowrap;transform:scaleX(0.92);transform-origin:right;">@10</div>
<div style="position:absolute;left:906.00px;width:200px;text-align:center;top:576.36px;line-height:12px;font-size:9.6px;color:#f8f8f8;font-weight:bold;white-space:nowrap;transform:scaleX(0.95);transform-origin:center;">1,0</div>
<div style="position:absolute;left:945.50px;width:200px;text-align:center;top:576.36px;line-height:12px;font-size:9.6px;color:#f4f4f4;font-weight:normal;white-space:nowrap;transform:scaleX(0.92);transform-origin:center;">@5,0</div>
<div style="position:absolute;left:988.00px;width:200px;text-align:center;top:576.36px;line-height:12px;font-size:9.6px;color:#f4f4f4;font-weight:normal;white-space:nowrap;transform:scaleX(0.92);transform-origin:center;">@9,0</div>
<svg style="position:absolute;left:824.9px;top:593.32px;" width="5.2" height="3.2" viewBox="0 0 5.2 3.2"><path d="M0 0 H5.2 L2.6 3.2 Z" fill="#2b6be0"/></svg>
<svg style="position:absolute;left:824.9px;top:606.68px;" width="5.2" height="3.2" viewBox="0 0 5.2 3.2"><path d="M0 0 H5.2 L2.6 3.2 Z" fill="#2b6be0"/></svg>
<svg style="position:absolute;left:824.9px;top:620.04px;" width="5.2" height="3.2" viewBox="0 0 5.2 3.2"><path d="M0 0 H5.2 L2.6 3.2 Z" fill="#2b6be0"/></svg>
<svg style="position:absolute;left:824.9px;top:633.4px;" width="5.2" height="3.2" viewBox="0 0 5.2 3.2"><path d="M0 0 H5.2 L2.6 3.2 Z" fill="#2b6be0"/></svg>
<svg style="position:absolute;left:824.9px;top:646.76px;" width="5.2" height="3.2" viewBox="0 0 5.2 3.2"><path d="M0 0 H5.2 L2.6 3.2 Z" fill="#2b6be0"/></svg>
<svg style="position:absolute;left:824.9px;top:660.12px;" width="5.2" height="3.2" viewBox="0 0 5.2 3.2"><path d="M0 0 H5.2 L2.6 3.2 Z" fill="#2b6be0"/></svg>
<svg style="position:absolute;left:824.9px;top:673.48px;" width="5.2" height="3.2" viewBox="0 0 5.2 3.2"><path d="M0 0 H5.2 L2.6 3.2 Z" fill="#2b6be0"/></svg>
<div style="position:absolute;left:797px;top:535px;width:1.5px;height:151.5px;background:#000"></div>
<div style="position:absolute;left:989px;top:533px;width:1.4px;height:153.5px;background:#111"></div>
<div style="position:absolute;left:760px;top:533.8px;width:348px;height:1.6px;background:#000"></div>
<div style="position:absolute;left:760px;top:518px;width:348px;height:168.5px;border:1.5px solid #000;"></div>
<div style="position:absolute;left:679.00px;width:200px;text-align:center;top:522.00px;line-height:12px;font-size:8.8px;color:#f0f0f0;font-weight:bold;white-space:nowrap;transform:scaleX(0.95);transform-origin:center;">08/03</div>
<div style="position:absolute;left:801.00px;top:522.50px;line-height:12px;font-size:8.6px;color:#eeeeee;font-weight:bold;white-space:nowrap;transform:scaleX(0.86);transform-origin:left;">Exercice</div>
<div style="position:absolute;left:836.50px;top:522.50px;line-height:12px;font-size:8.6px;color:#eeeeee;font-weight:bold;white-space:nowrap;transform:scaleX(0.86);transform-origin:left;">Variation</div>
<div style="position:absolute;left:897.00px;top:522.50px;line-height:12px;font-size:8.6px;color:#eeeeee;font-weight:bold;white-space:nowrap;transform:scaleX(0.86);transform-origin:left;">Sets</div>
<div style="position:absolute;left:916.50px;top:522.50px;line-height:12px;font-size:8.6px;color:#eeeeee;font-weight:bold;white-space:nowrap;transform:scaleX(0.86);transform-origin:left;">Reps</div>
<div style="position:absolute;left:934.5px;top:522.5px;width:54.5px;overflow:hidden;line-height:12px;font-size:8.6px;color:#eeeeee;font-weight:bold;white-space:nowrap;"><span style="display:inline-block;transform:scaleX(0.86);transform-origin:left">Ɛ attendu | %1RM</span></div>
<div style="position:absolute;left:994.00px;top:522.50px;line-height:12px;font-size:8.6px;color:#eeeeee;font-weight:bold;white-space:nowrap;transform:scaleX(0.86);transform-origin:left;">Charge</div>
<div style="position:absolute;left:1026.50px;top:522.50px;line-height:12px;font-size:8.6px;color:#eeeeee;font-weight:bold;white-space:nowrap;transform:scaleX(0.86);transform-origin:left;">RPE 1<span style="font-size:5.5px;position:relative;top:-3px">st</span> set</div>
<div style="position:absolute;left:1072.00px;top:522.50px;line-height:12px;font-size:8.6px;color:#eeeeee;font-weight:bold;white-space:nowrap;transform:scaleX(0.86);transform-origin:left;">RPE_last</div>
<div style="position:absolute;left:1111.50px;top:522.50px;line-height:12px;font-size:8.6px;color:#4a5570;font-weight:bold;white-space:nowrap;transform:scaleX(0.86);transform-origin:left;">e1RM</div>
<div style="position:absolute;left:1136px;top:518px;width:220px;height:168.5px;overflow:hidden">
<div style="position:absolute;left:0px;top:0.00px;width:220px;height:168.50px;background:#1c4587"></div>
<div style="position:absolute;left:0px;top:0.00px;width:220px;height:17.00px;background:#16264f"></div>
<div style="position:absolute;left:0px;top:16.00px;width:220px;height:2.20px;background:#21c4e8"></div>
<div style="position:absolute;left:0px;top:0.00px;width:220px;height:168.50px;border:1.5px solid #0b1226;border-top:1px solid #0b1226;"></div>
<div style="position:absolute;left:10.00px;width:200px;text-align:center;top:4.30px;line-height:12px;font-size:9.6px;color:#21c4e8;font-weight:bold;white-space:nowrap;">Notes</div>
<div style="position:absolute;left:2.00px;top:31.50px;line-height:12px;font-size:10.2px;color:#dedede;font-weight:bold;white-space:nowrap;transform:scaleX(0.95);transform-origin:left;">Consigne</div>
<div style="position:absolute;left:34.00px;width:200px;text-align:center;top:31.50px;line-height:12px;font-size:9.6px;color:#e6e6e6;font-weight:normal;white-space:nowrap;font-style:italic">- Focus trajectoire bench</div>
<div style="position:absolute;left:2px;top:56.60px;width:212px;height:0.00px;border-top:1.6px dotted #21c4e8"></div>
<div style="position:absolute;left:2px;top:83.60px;width:212px;height:0.00px;border-top:1.6px dotted #21c4e8"></div>
<div style="position:absolute;left:4.00px;top:58.50px;line-height:12px;font-size:9.8px;color:#dcdcdc;font-weight:bold;white-space:nowrap;transform:scaleX(0.95);transform-origin:left;">Duree</div>
<div style="position:absolute;left:4.00px;top:72.00px;line-height:12px;font-size:9.8px;color:#dcdcdc;font-weight:bold;white-space:nowrap;transform:scaleX(0.95);transform-origin:left;">Forme</div>
<div style="position:absolute;left:54px;top:58.80px;width:158px;height:10.00px;background:#0f182d;border-radius:5px"></div>
<div style="position:absolute;left:28.00px;width:200px;text-align:center;top:57.80px;line-height:12px;font-size:9.6px;color:#f4f4f4;font-weight:normal;white-space:nowrap;">01:00</div>
<svg style="position:absolute;left:201.5px;top:62.10px" width="6" height="3.4" viewBox="0 0 6 3.4"><path d="M0 0 H6 L3 3.4Z" fill="#f4f4f4"/></svg>
<div style="position:absolute;left:54px;top:72.30px;width:158px;height:10.00px;background:#0f182d;border-radius:5px"></div>
<div style="position:absolute;left:28.00px;width:200px;text-align:center;top:71.30px;line-height:12px;font-size:9.6px;color:#f4f4f4;font-weight:normal;white-space:nowrap;">Bonne</div>
<svg style="position:absolute;left:201.5px;top:75.60px" width="6" height="3.4" viewBox="0 0 6 3.4"><path d="M0 0 H6 L3 3.4Z" fill="#f4f4f4"/></svg>
<div style="position:absolute;left:-74.00px;width:200px;text-align:center;top:99.50px;line-height:12px;font-size:10px;color:#2ee86e;font-weight:bold;white-space:nowrap;">+</div>
<div style="position:absolute;left:-74.00px;width:200px;text-align:center;top:140.00px;line-height:12px;font-size:10px;color:#f0a0a8;font-weight:bold;white-space:nowrap;">-</div>
<div style="position:absolute;left:51.00px;top:99.50px;line-height:12px;font-size:9.6px;color:#2ee86e;font-weight:normal;white-space:nowrap;font-style:italic">-&nbsp;&nbsp;Top Trajectoire</div>
</div>
<div style="position:absolute;left:760px;top:713px;width:348px;height:167px;background:#c9daf8"></div>
<div style="position:absolute;left:760px;top:713px;width:348px;height:17px;background:#16264f"></div>
<div style="position:absolute;left:760px;top:713px;width:38px;height:167px;background:#16264f"></div>
<svg style="position:absolute;left:824.9px;top:734.88px;" width="5.2" height="3.2" viewBox="0 0 5.2 3.2"><path d="M0 0 H5.2 L2.6 3.2 Z" fill="#2b6be0"/></svg>
<svg style="position:absolute;left:824.9px;top:748.24px;" width="5.2" height="3.2" viewBox="0 0 5.2 3.2"><path d="M0 0 H5.2 L2.6 3.2 Z" fill="#2b6be0"/></svg>
<svg style="position:absolute;left:824.9px;top:761.6px;" width="5.2" height="3.2" viewBox="0 0 5.2 3.2"><path d="M0 0 H5.2 L2.6 3.2 Z" fill="#2b6be0"/></svg>
<svg style="position:absolute;left:824.9px;top:774.96px;" width="5.2" height="3.2" viewBox="0 0 5.2 3.2"><path d="M0 0 H5.2 L2.6 3.2 Z" fill="#2b6be0"/></svg>
<svg style="position:absolute;left:824.9px;top:788.32px;" width="5.2" height="3.2" viewBox="0 0 5.2 3.2"><path d="M0 0 H5.2 L2.6 3.2 Z" fill="#2b6be0"/></svg>
<svg style="position:absolute;left:824.9px;top:801.68px;" width="5.2" height="3.2" viewBox="0 0 5.2 3.2"><path d="M0 0 H5.2 L2.6 3.2 Z" fill="#2b6be0"/></svg>
<svg style="position:absolute;left:824.9px;top:815.04px;" width="5.2" height="3.2" viewBox="0 0 5.2 3.2"><path d="M0 0 H5.2 L2.6 3.2 Z" fill="#2b6be0"/></svg>
<svg style="position:absolute;left:824.9px;top:828.4px;" width="5.2" height="3.2" viewBox="0 0 5.2 3.2"><path d="M0 0 H5.2 L2.6 3.2 Z" fill="#2b6be0"/></svg>
<svg style="position:absolute;left:824.9px;top:841.76px;" width="5.2" height="3.2" viewBox="0 0 5.2 3.2"><path d="M0 0 H5.2 L2.6 3.2 Z" fill="#2b6be0"/></svg>
<svg style="position:absolute;left:824.9px;top:855.12px;" width="5.2" height="3.2" viewBox="0 0 5.2 3.2"><path d="M0 0 H5.2 L2.6 3.2 Z" fill="#2b6be0"/></svg>
<svg style="position:absolute;left:824.9px;top:868.48px;" width="5.2" height="3.2" viewBox="0 0 5.2 3.2"><path d="M0 0 H5.2 L2.6 3.2 Z" fill="#2b6be0"/></svg>
<div style="position:absolute;left:797px;top:730px;width:1.5px;height:150px;background:#000"></div>
<div style="position:absolute;left:989px;top:728px;width:1.4px;height:152px;background:#111"></div>
<div style="position:absolute;left:760px;top:728.8px;width:348px;height:1.6px;background:#000"></div>
<div style="position:absolute;left:760px;top:713px;width:348px;height:167px;border:1.5px solid #000;"></div>
<div style="position:absolute;left:679.00px;width:200px;text-align:center;top:717.00px;line-height:12px;font-size:8.8px;color:#f0f0f0;font-weight:bold;white-space:nowrap;transform:scaleX(0.95);transform-origin:center;">09/03</div>
<div style="position:absolute;left:801.00px;top:717.50px;line-height:12px;font-size:8.6px;color:#eeeeee;font-weight:bold;white-space:nowrap;transform:scaleX(0.86);transform-origin:left;">Exercice</div>
<div style="position:absolute;left:836.50px;top:717.50px;line-height:12px;font-size:8.6px;color:#eeeeee;font-weight:bold;white-space:nowrap;transform:scaleX(0.86);transform-origin:left;">Variation</div>
<div style="position:absolute;left:897.00px;top:717.50px;line-height:12px;font-size:8.6px;color:#eeeeee;font-weight:bold;white-space:nowrap;transform:scaleX(0.86);transform-origin:left;">Sets</div>
<div style="position:absolute;left:916.50px;top:717.50px;line-height:12px;font-size:8.6px;color:#eeeeee;font-weight:bold;white-space:nowrap;transform:scaleX(0.86);transform-origin:left;">Reps</div>
<div style="position:absolute;left:934.5px;top:717.5px;width:54.5px;overflow:hidden;line-height:12px;font-size:8.6px;color:#eeeeee;font-weight:bold;white-space:nowrap;"><span style="display:inline-block;transform:scaleX(0.86);transform-origin:left">Ɛ attendu | %1RM</span></div>
<div style="position:absolute;left:994.00px;top:717.50px;line-height:12px;font-size:8.6px;color:#eeeeee;font-weight:bold;white-space:nowrap;transform:scaleX(0.86);transform-origin:left;">Charge</div>
<div style="position:absolute;left:1026.50px;top:717.50px;line-height:12px;font-size:8.6px;color:#eeeeee;font-weight:bold;white-space:nowrap;transform:scaleX(0.86);transform-origin:left;">RPE 1<span style="font-size:5.5px;position:relative;top:-3px">st</span> set</div>
<div style="position:absolute;left:1072.00px;top:717.50px;line-height:12px;font-size:8.6px;color:#eeeeee;font-weight:bold;white-space:nowrap;transform:scaleX(0.86);transform-origin:left;">RPE_last</div>
<div style="position:absolute;left:1111.50px;top:717.50px;line-height:12px;font-size:8.6px;color:#4a5570;font-weight:bold;white-space:nowrap;transform:scaleX(0.86);transform-origin:left;">e1RM</div>
<div style="position:absolute;left:1136px;top:713px;width:220px;height:167px;overflow:hidden">
<div style="position:absolute;left:0px;top:0.00px;width:220px;height:167.00px;background:#1c4587"></div>
<div style="position:absolute;left:0px;top:0.00px;width:220px;height:17.00px;background:#16264f"></div>
<div style="position:absolute;left:0px;top:16.00px;width:220px;height:2.20px;background:#21c4e8"></div>
<div style="position:absolute;left:0px;top:0.00px;width:220px;height:167.00px;border:1.5px solid #0b1226;border-top:1px solid #0b1226;"></div>
<div style="position:absolute;left:10.00px;width:200px;text-align:center;top:4.30px;line-height:12px;font-size:9.6px;color:#21c4e8;font-weight:bold;white-space:nowrap;">Notes</div>
<div style="position:absolute;left:2.00px;top:31.50px;line-height:12px;font-size:10.2px;color:#dedede;font-weight:bold;white-space:nowrap;transform:scaleX(0.95);transform-origin:left;">Consigne</div>
<div style="position:absolute;left:2px;top:56.60px;width:212px;height:0.00px;border-top:1.6px dotted #21c4e8"></div>
<div style="position:absolute;left:2px;top:83.60px;width:212px;height:0.00px;border-top:1.6px dotted #21c4e8"></div>
<div style="position:absolute;left:4.00px;top:58.50px;line-height:12px;font-size:9.8px;color:#dcdcdc;font-weight:bold;white-space:nowrap;transform:scaleX(0.95);transform-origin:left;">Durée :</div>
<div style="position:absolute;left:4.00px;top:72.00px;line-height:12px;font-size:9.8px;color:#dcdcdc;font-weight:bold;white-space:nowrap;transform:scaleX(0.95);transform-origin:left;">Forme :</div>
<div style="position:absolute;left:54px;top:58.80px;width:158px;height:10.00px;background:#e6e6e6;border-radius:5px"></div>
<svg style="position:absolute;left:200px;top:62.30px" width="6" height="3" viewBox="0 0 6 3"><path d="M0 0 H6 L3 3Z" fill="#9a9a9a"/></svg>
<div style="position:absolute;left:54px;top:72.30px;width:158px;height:10.00px;background:#e6e6e6;border-radius:5px"></div>
<svg style="position:absolute;left:200px;top:75.80px" width="6" height="3" viewBox="0 0 6 3"><path d="M0 0 H6 L3 3Z" fill="#9a9a9a"/></svg>
<div style="position:absolute;left:-74.00px;width:200px;text-align:center;top:99.50px;line-height:12px;font-size:10px;color:#2ee86e;font-weight:bold;white-space:nowrap;">+</div>
<div style="position:absolute;left:-74.00px;width:200px;text-align:center;top:140.00px;line-height:12px;font-size:10px;color:#f0a0a8;font-weight:bold;white-space:nowrap;">-</div>
</div>
<div style="position:absolute;left:760px;top:907px;width:348px;height:134px;background:#c9daf8"></div>
<div style="position:absolute;left:760px;top:907px;width:348px;height:18px;background:#16264f"></div>
<div style="position:absolute;left:760px;top:907px;width:38px;height:134px;background:#16264f"></div>
<div style="position:absolute;left:798px;top:925.0px;width:310px;height:13.76px;background:#fdd60c"></div>
<div style="position:absolute;left:762.50px;top:926.28px;line-height:12px;font-size:8.6px;color:#3466c8;font-weight:normal;white-space:nowrap;transform:scaleX(0.86);transform-origin:left;">PPS_w.10</div>
<div style="position:absolute;left:800.20px;top:926.28px;line-height:12px;font-size:9.6px;color:#39401f;font-weight:normal;white-space:nowrap;transform:scaleX(0.98);transform-origin:left;">BN</div>
<svg style="position:absolute;left:824.9px;top:929.88px;" width="5.2" height="3.2" viewBox="0 0 5.2 3.2"><path d="M0 0 H5.2 L2.6 3.2 Z" fill="#5a4a12"/></svg>
<div style="position:absolute;left:836.50px;top:926.28px;line-height:12px;font-size:9.6px;color:#39401f;font-weight:normal;white-space:nowrap;transform:scaleX(0.98);transform-origin:left;">Comp</div>
<div style="position:absolute;left:899.50px;top:926.28px;line-height:12px;font-size:9.6px;color:#39401f;font-weight:normal;white-space:nowrap;transform:scaleX(0.98);transform-origin:left;">3 x</div>
<div style="position:absolute;left:927.50px;top:926.28px;line-height:12px;font-size:9.6px;color:#39401f;font-weight:normal;white-space:nowrap;transform:scaleX(0.98);transform-origin:left;">2</div>
<div style="position:absolute;right:947.00px;text-align:right;top:926.28px;line-height:12px;font-size:9.6px;color:#39401f;font-weight:normal;white-space:nowrap;transform:scaleX(0.92);transform-origin:right;">@6,0</div>
<div style="position:absolute;left:906.00px;width:200px;text-align:center;top:926.28px;line-height:12px;font-size:9.6px;color:#1c2a4a;font-weight:bold;white-space:nowrap;transform:scaleX(0.95);transform-origin:center;">115,0</div>
<div style="position:absolute;left:945.50px;width:200px;text-align:center;top:926.28px;line-height:12px;font-size:9.6px;color:#39401f;font-weight:normal;white-space:nowrap;transform:scaleX(0.92);transform-origin:center;">@8,0</div>
<div style="position:absolute;left:988.00px;width:200px;text-align:center;top:926.28px;line-height:12px;font-size:9.6px;color:#39401f;font-weight:normal;white-space:nowrap;transform:scaleX(0.92);transform-origin:center;">@10,0</div>
<div style="position:absolute;left:1022.00px;width:200px;text-align:center;top:926.28px;line-height:12px;font-size:9.6px;color:#3b4560;font-weight:normal;white-space:nowrap;transform:scaleX(0.95);transform-origin:center;">129</div>
<div style="position:absolute;left:798px;top:938.36px;width:310px;height:13.76px;background:#fdd60c"></div>
<div style="position:absolute;left:762.50px;top:939.64px;line-height:12px;font-size:8.6px;color:#3466c8;font-weight:normal;white-space:nowrap;transform:scaleX(0.86);transform-origin:left;">PPS_w.10</div>
<div style="position:absolute;left:800.20px;top:939.64px;line-height:12px;font-size:9.6px;color:#39401f;font-weight:normal;white-space:nowrap;transform:scaleX(0.98);transform-origin:left;">BN</div>
<svg style="position:absolute;left:824.9px;top:943.24px;" width="5.2" height="3.2" viewBox="0 0 5.2 3.2"><path d="M0 0 H5.2 L2.6 3.2 Z" fill="#5a4a12"/></svg>
<div style="position:absolute;left:836.50px;top:939.64px;line-height:12px;font-size:9.6px;color:#39401f;font-weight:normal;white-space:nowrap;transform:scaleX(0.98);transform-origin:left;">Comp</div>
<div style="position:absolute;left:899.50px;top:939.64px;line-height:12px;font-size:9.6px;color:#39401f;font-weight:normal;white-space:nowrap;transform:scaleX(0.98);transform-origin:left;">1 x</div>
<div style="position:absolute;left:927.50px;top:939.64px;line-height:12px;font-size:9.6px;color:#39401f;font-weight:normal;white-space:nowrap;transform:scaleX(0.98);transform-origin:left;">5</div>
<div style="position:absolute;right:947.00px;text-align:right;top:939.64px;line-height:12px;font-size:9.6px;color:#39401f;font-weight:normal;white-space:nowrap;transform:scaleX(0.92);transform-origin:right;">@6,5</div>
<div style="position:absolute;left:906.00px;width:200px;text-align:center;top:939.64px;line-height:12px;font-size:9.6px;color:#1c2a4a;font-weight:bold;white-space:nowrap;transform:scaleX(0.95);transform-origin:center;">110,0</div>
<div style="position:absolute;left:945.50px;width:200px;text-align:center;top:939.64px;line-height:12px;font-size:9.6px;color:#39401f;font-weight:normal;white-space:nowrap;transform:scaleX(0.92);transform-origin:center;">@9,0</div>
<div style="position:absolute;left:988.00px;width:200px;text-align:center;top:939.64px;line-height:12px;font-size:9.6px;color:#39401f;font-weight:normal;white-space:nowrap;transform:scaleX(0.92);transform-origin:center;">@9,0</div>
<div style="position:absolute;left:1022.00px;width:200px;text-align:center;top:939.64px;line-height:12px;font-size:9.6px;color:#3b4560;font-weight:normal;white-space:nowrap;transform:scaleX(0.95);transform-origin:center;">131</div>
<div style="position:absolute;left:798px;top:951.72px;width:310px;height:13.76px;background:#fdd60c"></div>
<div style="position:absolute;left:762.50px;top:953.00px;line-height:12px;font-size:8.6px;color:#3466c8;font-weight:normal;white-space:nowrap;transform:scaleX(0.86);transform-origin:left;">PPS_w.10</div>
<div style="position:absolute;left:800.20px;top:953.00px;line-height:12px;font-size:9.6px;color:#39401f;font-weight:normal;white-space:nowrap;transform:scaleX(0.98);transform-origin:left;">BN</div>
<svg style="position:absolute;left:824.9px;top:956.6px;" width="5.2" height="3.2" viewBox="0 0 5.2 3.2"><path d="M0 0 H5.2 L2.6 3.2 Z" fill="#5a4a12"/></svg>
<div style="position:absolute;left:836.50px;top:953.00px;line-height:12px;font-size:9.6px;color:#39401f;font-weight:normal;white-space:nowrap;transform:scaleX(0.98);transform-origin:left;">Comp</div>
<div style="position:absolute;left:899.50px;top:953.00px;line-height:12px;font-size:9.6px;color:#39401f;font-weight:normal;white-space:nowrap;transform:scaleX(0.98);transform-origin:left;">1 x</div>
<div style="position:absolute;left:927.50px;top:953.00px;line-height:12px;font-size:9.6px;color:#39401f;font-weight:normal;white-space:nowrap;transform:scaleX(0.98);transform-origin:left;">5</div>
<div style="position:absolute;right:947.00px;text-align:right;top:953.00px;line-height:12px;font-size:9.6px;color:#39401f;font-weight:normal;white-space:nowrap;transform:scaleX(0.92);transform-origin:right;">@8,0</div>
<div style="position:absolute;left:906.00px;width:200px;text-align:center;top:953.00px;line-height:12px;font-size:9.6px;color:#1c2a4a;font-weight:bold;white-space:nowrap;transform:scaleX(0.95);transform-origin:center;">110,0</div>
<div style="position:absolute;left:945.50px;width:200px;text-align:center;top:953.00px;line-height:12px;font-size:9.6px;color:#39401f;font-weight:normal;white-space:nowrap;transform:scaleX(0.92);transform-origin:center;">@9,0</div>
<div style="position:absolute;left:988.00px;width:200px;text-align:center;top:953.00px;line-height:12px;font-size:9.6px;color:#39401f;font-weight:normal;white-space:nowrap;transform:scaleX(0.92);transform-origin:center;">@9,0</div>
<div style="position:absolute;left:1022.00px;width:200px;text-align:center;top:953.00px;line-height:12px;font-size:9.6px;color:#3b4560;font-weight:normal;white-space:nowrap;transform:scaleX(0.95);transform-origin:center;">131</div>
<div style="position:absolute;left:798px;top:965.08px;width:310px;height:13.76px;background:#5fc8fa"></div>
<div style="position:absolute;left:762.50px;top:966.36px;line-height:12px;font-size:8.6px;color:#3466c8;font-weight:normal;white-space:nowrap;transform:scaleX(0.86);transform-origin:left;">PPS_w.10</div>
<div style="position:absolute;left:800.20px;top:966.36px;line-height:12px;font-size:9.6px;color:#1d3a72;font-weight:normal;white-space:nowrap;transform:scaleX(0.98);transform-origin:left;">SQ</div>
<svg style="position:absolute;left:824.9px;top:969.96px;" width="5.2" height="3.2" viewBox="0 0 5.2 3.2"><path d="M0 0 H5.2 L2.6 3.2 Z" fill="#1d3a72"/></svg>
<div style="position:absolute;left:836.50px;top:966.36px;line-height:12px;font-size:9.6px;color:#1d3a72;font-weight:normal;white-space:nowrap;transform:scaleX(0.98);transform-origin:left;">Comp</div>
<div style="position:absolute;left:899.50px;top:966.36px;line-height:12px;font-size:9.6px;color:#1d3a72;font-weight:normal;white-space:nowrap;transform:scaleX(0.98);transform-origin:left;">1 x</div>
<div style="position:absolute;left:927.50px;top:966.36px;line-height:12px;font-size:9.6px;color:#1d3a72;font-weight:normal;white-space:nowrap;transform:scaleX(0.98);transform-origin:left;">3</div>
<div style="position:absolute;right:947.00px;text-align:right;top:966.36px;line-height:12px;font-size:9.6px;color:#1d3a72;font-weight:normal;white-space:nowrap;transform:scaleX(0.92);transform-origin:right;">@7,0</div>
<div style="position:absolute;left:906.00px;width:200px;text-align:center;top:966.36px;line-height:12px;font-size:9.6px;color:#1b2b55;font-weight:bold;white-space:nowrap;transform:scaleX(0.95);transform-origin:center;">170,0</div>
<div style="position:absolute;left:956.00px;width:200px;text-align:center;top:966.36px;line-height:12px;font-size:9.6px;color:#1d3a72;font-weight:normal;white-space:nowrap;transform:scaleX(0.92);transform-origin:center;">@8,0</div>
<div style="position:absolute;left:996.00px;width:200px;text-align:center;top:966.36px;line-height:12px;font-size:9.6px;color:#1d3a72;font-weight:normal;white-space:nowrap;transform:scaleX(0.92);transform-origin:center;">@9,0</div>
<div style="position:absolute;left:1022.00px;width:200px;text-align:center;top:966.36px;line-height:12px;font-size:9.6px;color:#3b4560;font-weight:normal;white-space:nowrap;transform:scaleX(0.95);transform-origin:center;">197</div>
<div style="position:absolute;left:798px;top:978.44px;width:310px;height:13.76px;background:#5fc8fa"></div>
<div style="position:absolute;left:762.50px;top:979.72px;line-height:12px;font-size:8.6px;color:#3466c8;font-weight:normal;white-space:nowrap;transform:scaleX(0.86);transform-origin:left;">PPS_w.10</div>
<div style="position:absolute;left:800.20px;top:979.72px;line-height:12px;font-size:9.6px;color:#1d3a72;font-weight:normal;white-space:nowrap;transform:scaleX(0.98);transform-origin:left;">SQ</div>
<svg style="position:absolute;left:824.9px;top:983.32px;" width="5.2" height="3.2" viewBox="0 0 5.2 3.2"><path d="M0 0 H5.2 L2.6 3.2 Z" fill="#1d3a72"/></svg>
<div style="position:absolute;left:836.50px;top:979.72px;line-height:12px;font-size:9.6px;color:#1d3a72;font-weight:normal;white-space:nowrap;transform:scaleX(0.98);transform-origin:left;">Comp</div>
<div style="position:absolute;left:899.50px;top:979.72px;line-height:12px;font-size:9.6px;color:#1d3a72;font-weight:normal;white-space:nowrap;transform:scaleX(0.98);transform-origin:left;">3 x&nbsp; 3</div>
<div style="position:absolute;right:947.00px;text-align:right;top:979.72px;line-height:12px;font-size:9.6px;color:#1d3a72;font-weight:normal;white-space:nowrap;transform:scaleX(0.92);transform-origin:right;">@8,0</div>
<div style="position:absolute;left:906.00px;width:200px;text-align:center;top:979.72px;line-height:12px;font-size:9.6px;color:#1b2b55;font-weight:bold;white-space:nowrap;transform:scaleX(0.95);transform-origin:center;">182,0</div>
<div style="position:absolute;left:945.50px;width:200px;text-align:center;top:979.72px;line-height:12px;font-size:9.6px;color:#1d3a72;font-weight:normal;white-space:nowrap;transform:scaleX(0.92);transform-origin:center;">@8,0</div>
<div style="position:absolute;left:988.00px;width:200px;text-align:center;top:979.72px;line-height:12px;font-size:9.6px;color:#1d3a72;font-weight:normal;white-space:nowrap;transform:scaleX(0.92);transform-origin:center;">@8,5</div>
<div style="position:absolute;left:1022.00px;width:200px;text-align:center;top:979.72px;line-height:12px;font-size:9.6px;color:#3b4560;font-weight:normal;white-space:nowrap;transform:scaleX(0.95);transform-origin:center;">211</div>
<svg style="position:absolute;left:824.9px;top:996.68px;" width="5.2" height="3.2" viewBox="0 0 5.2 3.2"><path d="M0 0 H5.2 L2.6 3.2 Z" fill="#2b6be0"/></svg>
<svg style="position:absolute;left:824.9px;top:1010.04px;" width="5.2" height="3.2" viewBox="0 0 5.2 3.2"><path d="M0 0 H5.2 L2.6 3.2 Z" fill="#2b6be0"/></svg>
<svg style="position:absolute;left:824.9px;top:1023.4px;" width="5.2" height="3.2" viewBox="0 0 5.2 3.2"><path d="M0 0 H5.2 L2.6 3.2 Z" fill="#2b6be0"/></svg>
<svg style="position:absolute;left:824.9px;top:1036.7600000000002px;" width="5.2" height="3.2" viewBox="0 0 5.2 3.2"><path d="M0 0 H5.2 L2.6 3.2 Z" fill="#2b6be0"/></svg>
<div style="position:absolute;left:797px;top:925px;width:1.5px;height:116px;background:#000"></div>
<div style="position:absolute;left:989px;top:923px;width:1.4px;height:118px;background:#111"></div>
<div style="position:absolute;left:760px;top:923.8px;width:348px;height:1.6px;background:#000"></div>
<div style="position:absolute;left:760px;top:907px;width:348px;height:134px;border:1.5px solid #000;border-bottom:none;"></div>
<div style="position:absolute;left:679.00px;width:200px;text-align:center;top:911.00px;line-height:12px;font-size:8.8px;color:#f0f0f0;font-weight:bold;white-space:nowrap;transform:scaleX(0.95);transform-origin:center;">10/03</div>
<div style="position:absolute;left:801.00px;top:912.50px;line-height:12px;font-size:8.6px;color:#eeeeee;font-weight:bold;white-space:nowrap;transform:scaleX(0.86);transform-origin:left;">Exercice</div>
<div style="position:absolute;left:836.50px;top:912.50px;line-height:12px;font-size:8.6px;color:#eeeeee;font-weight:bold;white-space:nowrap;transform:scaleX(0.86);transform-origin:left;">Variation</div>
<div style="position:absolute;left:897.00px;top:912.50px;line-height:12px;font-size:8.6px;color:#eeeeee;font-weight:bold;white-space:nowrap;transform:scaleX(0.86);transform-origin:left;">Sets</div>
<div style="position:absolute;left:916.50px;top:912.50px;line-height:12px;font-size:8.6px;color:#eeeeee;font-weight:bold;white-space:nowrap;transform:scaleX(0.86);transform-origin:left;">Reps</div>
<div style="position:absolute;left:934.5px;top:912.5px;width:54.5px;overflow:hidden;line-height:12px;font-size:8.6px;color:#eeeeee;font-weight:bold;white-space:nowrap;"><span style="display:inline-block;transform:scaleX(0.86);transform-origin:left">Ɛ attendu | %1RM</span></div>
<div style="position:absolute;left:994.00px;top:912.50px;line-height:12px;font-size:8.6px;color:#eeeeee;font-weight:bold;white-space:nowrap;transform:scaleX(0.86);transform-origin:left;">Charge</div>
<div style="position:absolute;left:1026.50px;top:912.50px;line-height:12px;font-size:8.6px;color:#eeeeee;font-weight:bold;white-space:nowrap;transform:scaleX(0.86);transform-origin:left;">RPE 1<span style="font-size:5.5px;position:relative;top:-3px">st</span> set</div>
<div style="position:absolute;left:1072.00px;top:912.50px;line-height:12px;font-size:8.6px;color:#eeeeee;font-weight:bold;white-space:nowrap;transform:scaleX(0.86);transform-origin:left;">RPE_last</div>
<div style="position:absolute;left:1111.50px;top:912.50px;line-height:12px;font-size:8.6px;color:#4a5570;font-weight:bold;white-space:nowrap;transform:scaleX(0.86);transform-origin:left;">e1RM</div>
<div style="position:absolute;left:1136px;top:907px;width:220px;height:134px;overflow:hidden">
<div style="position:absolute;left:0px;top:0.00px;width:220px;height:134.00px;background:#1c4587"></div>
<div style="position:absolute;left:0px;top:0.00px;width:220px;height:18.00px;background:#16264f"></div>
<div style="position:absolute;left:0px;top:17.00px;width:220px;height:2.20px;background:#21c4e8"></div>
<div style="position:absolute;left:0px;top:0.00px;width:220px;height:134.00px;border:1.5px solid #0b1226;border-top:1px solid #0b1226;border-bottom:none;"></div>
<div style="position:absolute;left:10.00px;width:200px;text-align:center;top:4.80px;line-height:12px;font-size:9.6px;color:#21c4e8;font-weight:bold;white-space:nowrap;">Notes</div>
<div style="position:absolute;left:2.00px;top:32.50px;line-height:12px;font-size:10.2px;color:#dedede;font-weight:bold;white-space:nowrap;transform:scaleX(0.95);transform-origin:left;">Consigne</div>
<div style="position:absolute;left:2px;top:57.60px;width:212px;height:0.00px;border-top:1.6px dotted #21c4e8"></div>
<div style="position:absolute;left:2px;top:86.40px;width:212px;height:0.00px;border-top:1.6px dotted #21c4e8"></div>
<div style="position:absolute;left:4.00px;top:61.30px;line-height:12px;font-size:9.8px;color:#dcdcdc;font-weight:bold;white-space:nowrap;transform:scaleX(0.95);transform-origin:left;">Duree</div>
<div style="position:absolute;left:4.00px;top:74.80px;line-height:12px;font-size:9.8px;color:#dcdcdc;font-weight:bold;white-space:nowrap;transform:scaleX(0.95);transform-origin:left;">Forme</div>
<div style="position:absolute;left:54px;top:61.60px;width:158px;height:10.00px;background:#0f182d;border-radius:5px"></div>
<div style="position:absolute;left:28.00px;width:200px;text-align:center;top:60.60px;line-height:12px;font-size:9.6px;color:#f4f4f4;font-weight:normal;white-space:nowrap;">02:30</div>
<svg style="position:absolute;left:201.5px;top:64.90px" width="6" height="3.4" viewBox="0 0 6 3.4"><path d="M0 0 H6 L3 3.4Z" fill="#f4f4f4"/></svg>
<div style="position:absolute;left:54px;top:75.10px;width:158px;height:10.00px;background:#0f182d;border-radius:5px"></div>
<div style="position:absolute;left:28.00px;width:200px;text-align:center;top:74.10px;line-height:12px;font-size:9.6px;color:#f4f4f4;font-weight:normal;white-space:nowrap;">Excellente</div>
<svg style="position:absolute;left:201.5px;top:78.40px" width="6" height="3.4" viewBox="0 0 6 3.4"><path d="M0 0 H6 L3 3.4Z" fill="#f4f4f4"/></svg>
<div style="position:absolute;left:-74.00px;width:200px;text-align:center;top:102.30px;line-height:12px;font-size:10px;color:#2ee86e;font-weight:bold;white-space:nowrap;">+</div>
<div style="position:absolute;left:-74.00px;width:200px;text-align:center;top:142.80px;line-height:12px;font-size:10px;color:#f0a0a8;font-weight:bold;white-space:nowrap;">-</div>
<div style="position:absolute;left:51.00px;top:102.30px;line-height:12px;font-size:9.6px;color:#2ee86e;font-weight:normal;white-space:nowrap;font-style:italic">Trajectoire et stance SQ top</div>
</div>
<div style="position:absolute;left:1396px;top:324px;width:352px;height:168px;background:#c9daf8"></div>
<div style="position:absolute;left:1396px;top:324px;width:352px;height:19px;background:#16264f"></div>
<div style="position:absolute;left:1396px;top:324px;width:42px;height:168px;background:#16264f"></div>
<svg style="position:absolute;left:1464.9px;top:347.88px;" width="5.2" height="3.2" viewBox="0 0 5.2 3.2"><path d="M0 0 H5.2 L2.6 3.2 Z" fill="#2b6be0"/></svg>
<svg style="position:absolute;left:1464.9px;top:361.24px;" width="5.2" height="3.2" viewBox="0 0 5.2 3.2"><path d="M0 0 H5.2 L2.6 3.2 Z" fill="#2b6be0"/></svg>
<svg style="position:absolute;left:1464.9px;top:374.6px;" width="5.2" height="3.2" viewBox="0 0 5.2 3.2"><path d="M0 0 H5.2 L2.6 3.2 Z" fill="#2b6be0"/></svg>
<svg style="position:absolute;left:1464.9px;top:387.96px;" width="5.2" height="3.2" viewBox="0 0 5.2 3.2"><path d="M0 0 H5.2 L2.6 3.2 Z" fill="#2b6be0"/></svg>
<svg style="position:absolute;left:1464.9px;top:401.32px;" width="5.2" height="3.2" viewBox="0 0 5.2 3.2"><path d="M0 0 H5.2 L2.6 3.2 Z" fill="#2b6be0"/></svg>
<svg style="position:absolute;left:1464.9px;top:414.68px;" width="5.2" height="3.2" viewBox="0 0 5.2 3.2"><path d="M0 0 H5.2 L2.6 3.2 Z" fill="#2b6be0"/></svg>
<svg style="position:absolute;left:1464.9px;top:428.03999999999996px;" width="5.2" height="3.2" viewBox="0 0 5.2 3.2"><path d="M0 0 H5.2 L2.6 3.2 Z" fill="#2b6be0"/></svg>
<svg style="position:absolute;left:1464.9px;top:441.4px;" width="5.2" height="3.2" viewBox="0 0 5.2 3.2"><path d="M0 0 H5.2 L2.6 3.2 Z" fill="#2b6be0"/></svg>
<svg style="position:absolute;left:1464.9px;top:454.76px;" width="5.2" height="3.2" viewBox="0 0 5.2 3.2"><path d="M0 0 H5.2 L2.6 3.2 Z" fill="#2b6be0"/></svg>
<svg style="position:absolute;left:1464.9px;top:468.12px;" width="5.2" height="3.2" viewBox="0 0 5.2 3.2"><path d="M0 0 H5.2 L2.6 3.2 Z" fill="#2b6be0"/></svg>
<svg style="position:absolute;left:1464.9px;top:481.48px;" width="5.2" height="3.2" viewBox="0 0 5.2 3.2"><path d="M0 0 H5.2 L2.6 3.2 Z" fill="#2b6be0"/></svg>
<div style="position:absolute;left:1437px;top:343px;width:1.5px;height:149px;background:#000"></div>
<div style="position:absolute;left:1629px;top:341px;width:1.4px;height:151px;background:#111"></div>
<div style="position:absolute;left:1396px;top:341.8px;width:352px;height:1.6px;background:#000"></div>
<div style="position:absolute;left:1396px;top:324px;width:352px;height:168px;border:1.5px solid #000;"></div>
<div style="position:absolute;left:1317.00px;width:200px;text-align:center;top:328.00px;line-height:12px;font-size:8.8px;color:#f0f0f0;font-weight:bold;white-space:nowrap;transform:scaleX(0.95);transform-origin:center;">14/03</div>
<div style="position:absolute;left:1441.00px;top:330.50px;line-height:12px;font-size:8.6px;color:#eeeeee;font-weight:bold;white-space:nowrap;transform:scaleX(0.86);transform-origin:left;">Exercice</div>
<div style="position:absolute;left:1476.50px;top:330.50px;line-height:12px;font-size:8.6px;color:#eeeeee;font-weight:bold;white-space:nowrap;transform:scaleX(0.86);transform-origin:left;">Variation</div>
<div style="position:absolute;left:1537.00px;top:330.50px;line-height:12px;font-size:8.6px;color:#eeeeee;font-weight:bold;white-space:nowrap;transform:scaleX(0.86);transform-origin:left;">Sets</div>
<div style="position:absolute;left:1556.50px;top:330.50px;line-height:12px;font-size:8.6px;color:#eeeeee;font-weight:bold;white-space:nowrap;transform:scaleX(0.86);transform-origin:left;">Reps</div>
<div style="position:absolute;left:1574.5px;top:330.5px;width:54.5px;overflow:hidden;line-height:12px;font-size:8.6px;color:#eeeeee;font-weight:bold;white-space:nowrap;"><span style="display:inline-block;transform:scaleX(0.86);transform-origin:left">Ɛ attendu | %1RM</span></div>
<div style="position:absolute;left:1634.00px;top:330.50px;line-height:12px;font-size:8.6px;color:#eeeeee;font-weight:bold;white-space:nowrap;transform:scaleX(0.86);transform-origin:left;">Charge</div>
<div style="position:absolute;left:1666.50px;top:330.50px;line-height:12px;font-size:8.6px;color:#eeeeee;font-weight:bold;white-space:nowrap;transform:scaleX(0.86);transform-origin:left;">RPE 1<span style="font-size:5.5px;position:relative;top:-3px">st</span> set</div>
<div style="position:absolute;left:1712.00px;top:330.50px;line-height:12px;font-size:8.6px;color:#eeeeee;font-weight:bold;white-space:nowrap;transform:scaleX(0.86);transform-origin:left;">RPE_last</div>
<div style="position:absolute;left:1751.50px;top:330.50px;line-height:12px;font-size:8.6px;color:#4a5570;font-weight:bold;white-space:nowrap;transform:scaleX(0.86);transform-origin:left;">e1RM</div>
<div style="position:absolute;left:1776px;top:324px;width:78px;height:168px;overflow:hidden">
<div style="position:absolute;left:0px;top:0.00px;width:220px;height:168.00px;background:#1c4587"></div>
<div style="position:absolute;left:0px;top:0.00px;width:220px;height:19.00px;background:#16264f"></div>
<div style="position:absolute;left:0px;top:18.00px;width:220px;height:2.20px;background:#21c4e8"></div>
<div style="position:absolute;left:0px;top:0.00px;width:220px;height:168.00px;border:1.5px solid #0b1226;border-top:1px solid #0b1226;"></div>
<div style="position:absolute;left:10.00px;width:200px;text-align:center;top:5.30px;line-height:12px;font-size:9.6px;color:#21c4e8;font-weight:bold;white-space:nowrap;">Notes</div>
<div style="position:absolute;left:2.00px;top:33.50px;line-height:12px;font-size:10.2px;color:#dedede;font-weight:bold;white-space:nowrap;transform:scaleX(0.95);transform-origin:left;">Consigne</div>
<div style="position:absolute;left:2px;top:58.60px;width:212px;height:0.00px;border-top:1.6px dotted #21c4e8"></div>
<div style="position:absolute;left:2px;top:85.60px;width:212px;height:0.00px;border-top:1.6px dotted #21c4e8"></div>
<div style="position:absolute;left:4.00px;top:60.50px;line-height:12px;font-size:9.8px;color:#dcdcdc;font-weight:bold;white-space:nowrap;transform:scaleX(0.95);transform-origin:left;">Duree</div>
<div style="position:absolute;left:4.00px;top:74.00px;line-height:12px;font-size:9.8px;color:#dcdcdc;font-weight:bold;white-space:nowrap;transform:scaleX(0.95);transform-origin:left;">Forme</div>
<div style="position:absolute;left:54px;top:60.80px;width:158px;height:10.00px;background:#e6e6e6;border-radius:5px"></div>
<svg style="position:absolute;left:200px;top:64.30px" width="6" height="3" viewBox="0 0 6 3"><path d="M0 0 H6 L3 3Z" fill="#9a9a9a"/></svg>
<div style="position:absolute;left:54px;top:74.30px;width:158px;height:10.00px;background:#e6e6e6;border-radius:5px"></div>
<svg style="position:absolute;left:200px;top:77.80px" width="6" height="3" viewBox="0 0 6 3"><path d="M0 0 H6 L3 3Z" fill="#9a9a9a"/></svg>
<div style="position:absolute;left:-74.00px;width:200px;text-align:center;top:101.50px;line-height:12px;font-size:10px;color:#2ee86e;font-weight:bold;white-space:nowrap;">+</div>
<div style="position:absolute;left:-74.00px;width:200px;text-align:center;top:142.00px;line-height:12px;font-size:10px;color:#f0a0a8;font-weight:bold;white-space:nowrap;">-</div>
</div>
<div style="position:absolute;left:1396px;top:518px;width:352px;height:168.5px;background:#c9daf8"></div>
<div style="position:absolute;left:1396px;top:518px;width:352px;height:17px;background:#16264f"></div>
<div style="position:absolute;left:1396px;top:518px;width:42px;height:168.5px;background:#16264f"></div>
<svg style="position:absolute;left:1464.9px;top:539.88px;" width="5.2" height="3.2" viewBox="0 0 5.2 3.2"><path d="M0 0 H5.2 L2.6 3.2 Z" fill="#2b6be0"/></svg>
<svg style="position:absolute;left:1464.9px;top:553.24px;" width="5.2" height="3.2" viewBox="0 0 5.2 3.2"><path d="M0 0 H5.2 L2.6 3.2 Z" fill="#2b6be0"/></svg>
<svg style="position:absolute;left:1464.9px;top:566.6px;" width="5.2" height="3.2" viewBox="0 0 5.2 3.2"><path d="M0 0 H5.2 L2.6 3.2 Z" fill="#2b6be0"/></svg>
<svg style="position:absolute;left:1464.9px;top:579.96px;" width="5.2" height="3.2" viewBox="0 0 5.2 3.2"><path d="M0 0 H5.2 L2.6 3.2 Z" fill="#2b6be0"/></svg>
<svg style="position:absolute;left:1464.9px;top:593.32px;" width="5.2" height="3.2" viewBox="0 0 5.2 3.2"><path d="M0 0 H5.2 L2.6 3.2 Z" fill="#2b6be0"/></svg>
<svg style="position:absolute;left:1464.9px;top:606.68px;" width="5.2" height="3.2" viewBox="0 0 5.2 3.2"><path d="M0 0 H5.2 L2.6 3.2 Z" fill="#2b6be0"/></svg>
<svg style="position:absolute;left:1464.9px;top:620.04px;" width="5.2" height="3.2" viewBox="0 0 5.2 3.2"><path d="M0 0 H5.2 L2.6 3.2 Z" fill="#2b6be0"/></svg>
<svg style="position:absolute;left:1464.9px;top:633.4px;" width="5.2" height="3.2" viewBox="0 0 5.2 3.2"><path d="M0 0 H5.2 L2.6 3.2 Z" fill="#2b6be0"/></svg>
<svg style="position:absolute;left:1464.9px;top:646.76px;" width="5.2" height="3.2" viewBox="0 0 5.2 3.2"><path d="M0 0 H5.2 L2.6 3.2 Z" fill="#2b6be0"/></svg>
<svg style="position:absolute;left:1464.9px;top:660.12px;" width="5.2" height="3.2" viewBox="0 0 5.2 3.2"><path d="M0 0 H5.2 L2.6 3.2 Z" fill="#2b6be0"/></svg>
<svg style="position:absolute;left:1464.9px;top:673.48px;" width="5.2" height="3.2" viewBox="0 0 5.2 3.2"><path d="M0 0 H5.2 L2.6 3.2 Z" fill="#2b6be0"/></svg>
<div style="position:absolute;left:1437px;top:535px;width:1.5px;height:151.5px;background:#000"></div>
<div style="position:absolute;left:1629px;top:533px;width:1.4px;height:153.5px;background:#111"></div>
<div style="position:absolute;left:1396px;top:533.8px;width:352px;height:1.6px;background:#000"></div>
<div style="position:absolute;left:1396px;top:518px;width:352px;height:168.5px;border:1.5px solid #000;"></div>
<div style="position:absolute;left:1317.00px;width:200px;text-align:center;top:522.00px;line-height:12px;font-size:8.8px;color:#f0f0f0;font-weight:bold;white-space:nowrap;transform:scaleX(0.95);transform-origin:center;">15/03</div>
<div style="position:absolute;left:1441.00px;top:522.50px;line-height:12px;font-size:8.6px;color:#eeeeee;font-weight:bold;white-space:nowrap;transform:scaleX(0.86);transform-origin:left;">Exercice</div>
<div style="position:absolute;left:1476.50px;top:522.50px;line-height:12px;font-size:8.6px;color:#eeeeee;font-weight:bold;white-space:nowrap;transform:scaleX(0.86);transform-origin:left;">Variation</div>
<div style="position:absolute;left:1537.00px;top:522.50px;line-height:12px;font-size:8.6px;color:#eeeeee;font-weight:bold;white-space:nowrap;transform:scaleX(0.86);transform-origin:left;">Sets</div>
<div style="position:absolute;left:1556.50px;top:522.50px;line-height:12px;font-size:8.6px;color:#eeeeee;font-weight:bold;white-space:nowrap;transform:scaleX(0.86);transform-origin:left;">Reps</div>
<div style="position:absolute;left:1574.5px;top:522.5px;width:54.5px;overflow:hidden;line-height:12px;font-size:8.6px;color:#eeeeee;font-weight:bold;white-space:nowrap;"><span style="display:inline-block;transform:scaleX(0.86);transform-origin:left">Ɛ attendu | %1RM</span></div>
<div style="position:absolute;left:1634.00px;top:522.50px;line-height:12px;font-size:8.6px;color:#eeeeee;font-weight:bold;white-space:nowrap;transform:scaleX(0.86);transform-origin:left;">Charge</div>
<div style="position:absolute;left:1666.50px;top:522.50px;line-height:12px;font-size:8.6px;color:#eeeeee;font-weight:bold;white-space:nowrap;transform:scaleX(0.86);transform-origin:left;">RPE 1<span style="font-size:5.5px;position:relative;top:-3px">st</span> set</div>
<div style="position:absolute;left:1712.00px;top:522.50px;line-height:12px;font-size:8.6px;color:#eeeeee;font-weight:bold;white-space:nowrap;transform:scaleX(0.86);transform-origin:left;">RPE_last</div>
<div style="position:absolute;left:1751.50px;top:522.50px;line-height:12px;font-size:8.6px;color:#4a5570;font-weight:bold;white-space:nowrap;transform:scaleX(0.86);transform-origin:left;">e1RM</div>
<div style="position:absolute;left:1776px;top:518px;width:78px;height:168.5px;overflow:hidden">
<div style="position:absolute;left:0px;top:0.00px;width:220px;height:168.50px;background:#1c4587"></div>
<div style="position:absolute;left:0px;top:0.00px;width:220px;height:17.00px;background:#16264f"></div>
<div style="position:absolute;left:0px;top:16.00px;width:220px;height:2.20px;background:#21c4e8"></div>
<div style="position:absolute;left:0px;top:0.00px;width:220px;height:168.50px;border:1.5px solid #0b1226;border-top:1px solid #0b1226;"></div>
<div style="position:absolute;left:10.00px;width:200px;text-align:center;top:4.30px;line-height:12px;font-size:9.6px;color:#21c4e8;font-weight:bold;white-space:nowrap;">Notes</div>
<div style="position:absolute;left:2.00px;top:31.50px;line-height:12px;font-size:10.2px;color:#dedede;font-weight:bold;white-space:nowrap;transform:scaleX(0.95);transform-origin:left;">Consigne</div>
<div style="position:absolute;left:2px;top:56.60px;width:212px;height:0.00px;border-top:1.6px dotted #21c4e8"></div>
<div style="position:absolute;left:2px;top:83.60px;width:212px;height:0.00px;border-top:1.6px dotted #21c4e8"></div>
<div style="position:absolute;left:4.00px;top:58.50px;line-height:12px;font-size:9.8px;color:#dcdcdc;font-weight:bold;white-space:nowrap;transform:scaleX(0.95);transform-origin:left;">Duree</div>
<div style="position:absolute;left:4.00px;top:72.00px;line-height:12px;font-size:9.8px;color:#dcdcdc;font-weight:bold;white-space:nowrap;transform:scaleX(0.95);transform-origin:left;">Forme</div>
<div style="position:absolute;left:54px;top:58.80px;width:158px;height:10.00px;background:#e6e6e6;border-radius:5px"></div>
<svg style="position:absolute;left:200px;top:62.30px" width="6" height="3" viewBox="0 0 6 3"><path d="M0 0 H6 L3 3Z" fill="#9a9a9a"/></svg>
<div style="position:absolute;left:54px;top:72.30px;width:158px;height:10.00px;background:#e6e6e6;border-radius:5px"></div>
<svg style="position:absolute;left:200px;top:75.80px" width="6" height="3" viewBox="0 0 6 3"><path d="M0 0 H6 L3 3Z" fill="#9a9a9a"/></svg>
<div style="position:absolute;left:-74.00px;width:200px;text-align:center;top:99.50px;line-height:12px;font-size:10px;color:#2ee86e;font-weight:bold;white-space:nowrap;">+</div>
<div style="position:absolute;left:-74.00px;width:200px;text-align:center;top:140.00px;line-height:12px;font-size:10px;color:#f0a0a8;font-weight:bold;white-space:nowrap;">-</div>
</div>
<div style="position:absolute;left:1396px;top:713px;width:352px;height:167px;background:#c9daf8"></div>
<div style="position:absolute;left:1396px;top:713px;width:352px;height:17px;background:#16264f"></div>
<div style="position:absolute;left:1396px;top:713px;width:42px;height:167px;background:#16264f"></div>
<svg style="position:absolute;left:1464.9px;top:734.88px;" width="5.2" height="3.2" viewBox="0 0 5.2 3.2"><path d="M0 0 H5.2 L2.6 3.2 Z" fill="#2b6be0"/></svg>
<svg style="position:absolute;left:1464.9px;top:748.24px;" width="5.2" height="3.2" viewBox="0 0 5.2 3.2"><path d="M0 0 H5.2 L2.6 3.2 Z" fill="#2b6be0"/></svg>
<svg style="position:absolute;left:1464.9px;top:761.6px;" width="5.2" height="3.2" viewBox="0 0 5.2 3.2"><path d="M0 0 H5.2 L2.6 3.2 Z" fill="#2b6be0"/></svg>
<svg style="position:absolute;left:1464.9px;top:774.96px;" width="5.2" height="3.2" viewBox="0 0 5.2 3.2"><path d="M0 0 H5.2 L2.6 3.2 Z" fill="#2b6be0"/></svg>
<svg style="position:absolute;left:1464.9px;top:788.32px;" width="5.2" height="3.2" viewBox="0 0 5.2 3.2"><path d="M0 0 H5.2 L2.6 3.2 Z" fill="#2b6be0"/></svg>
<svg style="position:absolute;left:1464.9px;top:801.68px;" width="5.2" height="3.2" viewBox="0 0 5.2 3.2"><path d="M0 0 H5.2 L2.6 3.2 Z" fill="#2b6be0"/></svg>
<svg style="position:absolute;left:1464.9px;top:815.04px;" width="5.2" height="3.2" viewBox="0 0 5.2 3.2"><path d="M0 0 H5.2 L2.6 3.2 Z" fill="#2b6be0"/></svg>
<svg style="position:absolute;left:1464.9px;top:828.4px;" width="5.2" height="3.2" viewBox="0 0 5.2 3.2"><path d="M0 0 H5.2 L2.6 3.2 Z" fill="#2b6be0"/></svg>
<svg style="position:absolute;left:1464.9px;top:841.76px;" width="5.2" height="3.2" viewBox="0 0 5.2 3.2"><path d="M0 0 H5.2 L2.6 3.2 Z" fill="#2b6be0"/></svg>
<svg style="position:absolute;left:1464.9px;top:855.12px;" width="5.2" height="3.2" viewBox="0 0 5.2 3.2"><path d="M0 0 H5.2 L2.6 3.2 Z" fill="#2b6be0"/></svg>
<svg style="position:absolute;left:1464.9px;top:868.48px;" width="5.2" height="3.2" viewBox="0 0 5.2 3.2"><path d="M0 0 H5.2 L2.6 3.2 Z" fill="#2b6be0"/></svg>
<div style="position:absolute;left:1437px;top:730px;width:1.5px;height:150px;background:#000"></div>
<div style="position:absolute;left:1629px;top:728px;width:1.4px;height:152px;background:#111"></div>
<div style="position:absolute;left:1396px;top:728.8px;width:352px;height:1.6px;background:#000"></div>
<div style="position:absolute;left:1396px;top:713px;width:352px;height:167px;border:1.5px solid #000;"></div>
<div style="position:absolute;left:1317.00px;width:200px;text-align:center;top:717.00px;line-height:12px;font-size:8.8px;color:#f0f0f0;font-weight:bold;white-space:nowrap;transform:scaleX(0.95);transform-origin:center;">16/03</div>
<div style="position:absolute;left:1441.00px;top:717.50px;line-height:12px;font-size:8.6px;color:#eeeeee;font-weight:bold;white-space:nowrap;transform:scaleX(0.86);transform-origin:left;">Exercice</div>
<div style="position:absolute;left:1476.50px;top:717.50px;line-height:12px;font-size:8.6px;color:#eeeeee;font-weight:bold;white-space:nowrap;transform:scaleX(0.86);transform-origin:left;">Variation</div>
<div style="position:absolute;left:1537.00px;top:717.50px;line-height:12px;font-size:8.6px;color:#eeeeee;font-weight:bold;white-space:nowrap;transform:scaleX(0.86);transform-origin:left;">Sets</div>
<div style="position:absolute;left:1556.50px;top:717.50px;line-height:12px;font-size:8.6px;color:#eeeeee;font-weight:bold;white-space:nowrap;transform:scaleX(0.86);transform-origin:left;">Reps</div>
<div style="position:absolute;left:1574.5px;top:717.5px;width:54.5px;overflow:hidden;line-height:12px;font-size:8.6px;color:#eeeeee;font-weight:bold;white-space:nowrap;"><span style="display:inline-block;transform:scaleX(0.86);transform-origin:left">Ɛ attendu | %1RM</span></div>
<div style="position:absolute;left:1634.00px;top:717.50px;line-height:12px;font-size:8.6px;color:#eeeeee;font-weight:bold;white-space:nowrap;transform:scaleX(0.86);transform-origin:left;">Charge</div>
<div style="position:absolute;left:1666.50px;top:717.50px;line-height:12px;font-size:8.6px;color:#eeeeee;font-weight:bold;white-space:nowrap;transform:scaleX(0.86);transform-origin:left;">RPE 1<span style="font-size:5.5px;position:relative;top:-3px">st</span> set</div>
<div style="position:absolute;left:1712.00px;top:717.50px;line-height:12px;font-size:8.6px;color:#eeeeee;font-weight:bold;white-space:nowrap;transform:scaleX(0.86);transform-origin:left;">RPE_last</div>
<div style="position:absolute;left:1751.50px;top:717.50px;line-height:12px;font-size:8.6px;color:#4a5570;font-weight:bold;white-space:nowrap;transform:scaleX(0.86);transform-origin:left;">e1RM</div>
<div style="position:absolute;left:1776px;top:713px;width:78px;height:167px;overflow:hidden">
<div style="position:absolute;left:0px;top:0.00px;width:220px;height:167.00px;background:#1c4587"></div>
<div style="position:absolute;left:0px;top:0.00px;width:220px;height:17.00px;background:#16264f"></div>
<div style="position:absolute;left:0px;top:16.00px;width:220px;height:2.20px;background:#21c4e8"></div>
<div style="position:absolute;left:0px;top:0.00px;width:220px;height:167.00px;border:1.5px solid #0b1226;border-top:1px solid #0b1226;"></div>
<div style="position:absolute;left:10.00px;width:200px;text-align:center;top:4.30px;line-height:12px;font-size:9.6px;color:#21c4e8;font-weight:bold;white-space:nowrap;">Notes</div>
<div style="position:absolute;left:2.00px;top:31.50px;line-height:12px;font-size:10.2px;color:#dedede;font-weight:bold;white-space:nowrap;transform:scaleX(0.95);transform-origin:left;">Consigne</div>
<div style="position:absolute;left:2px;top:56.60px;width:212px;height:0.00px;border-top:1.6px dotted #21c4e8"></div>
<div style="position:absolute;left:2px;top:83.60px;width:212px;height:0.00px;border-top:1.6px dotted #21c4e8"></div>
<div style="position:absolute;left:4.00px;top:58.50px;line-height:12px;font-size:9.8px;color:#dcdcdc;font-weight:bold;white-space:nowrap;transform:scaleX(0.95);transform-origin:left;">Durée :</div>
<div style="position:absolute;left:4.00px;top:72.00px;line-height:12px;font-size:9.8px;color:#dcdcdc;font-weight:bold;white-space:nowrap;transform:scaleX(0.95);transform-origin:left;">Forme :</div>
<div style="position:absolute;left:54px;top:58.80px;width:158px;height:10.00px;background:#e6e6e6;border-radius:5px"></div>
<svg style="position:absolute;left:200px;top:62.30px" width="6" height="3" viewBox="0 0 6 3"><path d="M0 0 H6 L3 3Z" fill="#9a9a9a"/></svg>
<div style="position:absolute;left:54px;top:72.30px;width:158px;height:10.00px;background:#e6e6e6;border-radius:5px"></div>
<svg style="position:absolute;left:200px;top:75.80px" width="6" height="3" viewBox="0 0 6 3"><path d="M0 0 H6 L3 3Z" fill="#9a9a9a"/></svg>
<div style="position:absolute;left:-74.00px;width:200px;text-align:center;top:99.50px;line-height:12px;font-size:10px;color:#2ee86e;font-weight:bold;white-space:nowrap;">+</div>
<div style="position:absolute;left:-74.00px;width:200px;text-align:center;top:140.00px;line-height:12px;font-size:10px;color:#f0a0a8;font-weight:bold;white-space:nowrap;">-</div>
</div>
<div style="position:absolute;left:1396px;top:907px;width:352px;height:134px;background:#c9daf8"></div>
<div style="position:absolute;left:1396px;top:907px;width:352px;height:18px;background:#16264f"></div>
<div style="position:absolute;left:1396px;top:907px;width:42px;height:134px;background:#16264f"></div>
<svg style="position:absolute;left:1464.9px;top:929.88px;" width="5.2" height="3.2" viewBox="0 0 5.2 3.2"><path d="M0 0 H5.2 L2.6 3.2 Z" fill="#2b6be0"/></svg>
<svg style="position:absolute;left:1464.9px;top:943.24px;" width="5.2" height="3.2" viewBox="0 0 5.2 3.2"><path d="M0 0 H5.2 L2.6 3.2 Z" fill="#2b6be0"/></svg>
<svg style="position:absolute;left:1464.9px;top:956.6px;" width="5.2" height="3.2" viewBox="0 0 5.2 3.2"><path d="M0 0 H5.2 L2.6 3.2 Z" fill="#2b6be0"/></svg>
<svg style="position:absolute;left:1464.9px;top:969.96px;" width="5.2" height="3.2" viewBox="0 0 5.2 3.2"><path d="M0 0 H5.2 L2.6 3.2 Z" fill="#2b6be0"/></svg>
<svg style="position:absolute;left:1464.9px;top:983.32px;" width="5.2" height="3.2" viewBox="0 0 5.2 3.2"><path d="M0 0 H5.2 L2.6 3.2 Z" fill="#2b6be0"/></svg>
<svg style="position:absolute;left:1464.9px;top:996.68px;" width="5.2" height="3.2" viewBox="0 0 5.2 3.2"><path d="M0 0 H5.2 L2.6 3.2 Z" fill="#2b6be0"/></svg>
<svg style="position:absolute;left:1464.9px;top:1010.04px;" width="5.2" height="3.2" viewBox="0 0 5.2 3.2"><path d="M0 0 H5.2 L2.6 3.2 Z" fill="#2b6be0"/></svg>
<svg style="position:absolute;left:1464.9px;top:1023.4px;" width="5.2" height="3.2" viewBox="0 0 5.2 3.2"><path d="M0 0 H5.2 L2.6 3.2 Z" fill="#2b6be0"/></svg>
<svg style="position:absolute;left:1464.9px;top:1036.7600000000002px;" width="5.2" height="3.2" viewBox="0 0 5.2 3.2"><path d="M0 0 H5.2 L2.6 3.2 Z" fill="#2b6be0"/></svg>
<div style="position:absolute;left:1437px;top:925px;width:1.5px;height:116px;background:#000"></div>
<div style="position:absolute;left:1629px;top:923px;width:1.4px;height:118px;background:#111"></div>
<div style="position:absolute;left:1396px;top:923.8px;width:352px;height:1.6px;background:#000"></div>
<div style="position:absolute;left:1396px;top:907px;width:352px;height:134px;border:1.5px solid #000;border-bottom:none;"></div>
<div style="position:absolute;left:1317.00px;width:200px;text-align:center;top:911.00px;line-height:12px;font-size:8.8px;color:#f0f0f0;font-weight:bold;white-space:nowrap;transform:scaleX(0.95);transform-origin:center;">17/03</div>
<div style="position:absolute;left:1441.00px;top:912.50px;line-height:12px;font-size:8.6px;color:#eeeeee;font-weight:bold;white-space:nowrap;transform:scaleX(0.86);transform-origin:left;">Exercice</div>
<div style="position:absolute;left:1476.50px;top:912.50px;line-height:12px;font-size:8.6px;color:#eeeeee;font-weight:bold;white-space:nowrap;transform:scaleX(0.86);transform-origin:left;">Variation</div>
<div style="position:absolute;left:1537.00px;top:912.50px;line-height:12px;font-size:8.6px;color:#eeeeee;font-weight:bold;white-space:nowrap;transform:scaleX(0.86);transform-origin:left;">Sets</div>
<div style="position:absolute;left:1556.50px;top:912.50px;line-height:12px;font-size:8.6px;color:#eeeeee;font-weight:bold;white-space:nowrap;transform:scaleX(0.86);transform-origin:left;">Reps</div>
<div style="position:absolute;left:1574.5px;top:912.5px;width:54.5px;overflow:hidden;line-height:12px;font-size:8.6px;color:#eeeeee;font-weight:bold;white-space:nowrap;"><span style="display:inline-block;transform:scaleX(0.86);transform-origin:left">Ɛ attendu | %1RM</span></div>
<div style="position:absolute;left:1634.00px;top:912.50px;line-height:12px;font-size:8.6px;color:#eeeeee;font-weight:bold;white-space:nowrap;transform:scaleX(0.86);transform-origin:left;">Charge</div>
<div style="position:absolute;left:1666.50px;top:912.50px;line-height:12px;font-size:8.6px;color:#eeeeee;font-weight:bold;white-space:nowrap;transform:scaleX(0.86);transform-origin:left;">RPE 1<span style="font-size:5.5px;position:relative;top:-3px">st</span> set</div>
<div style="position:absolute;left:1712.00px;top:912.50px;line-height:12px;font-size:8.6px;color:#eeeeee;font-weight:bold;white-space:nowrap;transform:scaleX(0.86);transform-origin:left;">RPE_last</div>
<div style="position:absolute;left:1751.50px;top:912.50px;line-height:12px;font-size:8.6px;color:#4a5570;font-weight:bold;white-space:nowrap;transform:scaleX(0.86);transform-origin:left;">e1RM</div>
<div style="position:absolute;left:1776px;top:907px;width:78px;height:134px;overflow:hidden">
<div style="position:absolute;left:0px;top:0.00px;width:220px;height:134.00px;background:#1c4587"></div>
<div style="position:absolute;left:0px;top:0.00px;width:220px;height:18.00px;background:#16264f"></div>
<div style="position:absolute;left:0px;top:17.00px;width:220px;height:2.20px;background:#21c4e8"></div>
<div style="position:absolute;left:0px;top:0.00px;width:220px;height:134.00px;border:1.5px solid #0b1226;border-top:1px solid #0b1226;border-bottom:none;"></div>
<div style="position:absolute;left:10.00px;width:200px;text-align:center;top:4.80px;line-height:12px;font-size:9.6px;color:#21c4e8;font-weight:bold;white-space:nowrap;">Notes</div>
<div style="position:absolute;left:2.00px;top:32.50px;line-height:12px;font-size:10.2px;color:#dedede;font-weight:bold;white-space:nowrap;transform:scaleX(0.95);transform-origin:left;">Consigne</div>
<div style="position:absolute;left:2px;top:57.60px;width:212px;height:0.00px;border-top:1.6px dotted #21c4e8"></div>
<div style="position:absolute;left:2px;top:86.40px;width:212px;height:0.00px;border-top:1.6px dotted #21c4e8"></div>
<div style="position:absolute;left:4.00px;top:61.30px;line-height:12px;font-size:9.8px;color:#dcdcdc;font-weight:bold;white-space:nowrap;transform:scaleX(0.95);transform-origin:left;">Duree</div>
<div style="position:absolute;left:4.00px;top:74.80px;line-height:12px;font-size:9.8px;color:#dcdcdc;font-weight:bold;white-space:nowrap;transform:scaleX(0.95);transform-origin:left;">Forme</div>
<div style="position:absolute;left:54px;top:61.60px;width:158px;height:10.00px;background:#e6e6e6;border-radius:5px"></div>
<svg style="position:absolute;left:200px;top:65.10px" width="6" height="3" viewBox="0 0 6 3"><path d="M0 0 H6 L3 3Z" fill="#9a9a9a"/></svg>
<div style="position:absolute;left:54px;top:75.10px;width:158px;height:10.00px;background:#e6e6e6;border-radius:5px"></div>
<svg style="position:absolute;left:200px;top:78.60px" width="6" height="3" viewBox="0 0 6 3"><path d="M0 0 H6 L3 3Z" fill="#9a9a9a"/></svg>
<div style="position:absolute;left:-74.00px;width:200px;text-align:center;top:102.30px;line-height:12px;font-size:10px;color:#2ee86e;font-weight:bold;white-space:nowrap;">+</div>
<div style="position:absolute;left:-74.00px;width:200px;text-align:center;top:142.80px;line-height:12px;font-size:10px;color:#f0a0a8;font-weight:bold;white-space:nowrap;">-</div>
</div>
<div style="position:absolute;left:1437px;top:699px;width:38px;height:15px;border:2px solid #2f6fe8"></div>
<div style="position:absolute;left:1469.5px;top:709px;width:10px;height:10px;background:#0b57d0;border:1.2px solid #f0f0f0;border-radius:50%"></div>
<div style="position:absolute;left:1854px;top:254px;width:10px;height:787px;background:#1f1f1f"></div>
<div style="position:absolute;left:1854px;top:254px;width:10px;height:744px;background:#3c4043"></div>
<div style="position:absolute;left:1854px;top:254px;width:8px;height:370px;background:#262626;border-radius:4px"></div>
<div style="position:absolute;left:1854px;top:998px;width:10px;height:16px;background:#2f3133"></div>
<div style="position:absolute;left:1854px;top:1014px;width:10px;height:16px;background:#5f6368"></div>
<svg style="position:absolute;left:1855px;top:1002px;" width="9" height="8" viewBox="0 0 9 8"><path d="M1 6 L4.5 2 L8 6Z" fill="#6f7377"/></svg>
<svg style="position:absolute;left:1855px;top:1018px;" width="9" height="8" viewBox="0 0 9 8"><path d="M1 2 L4.5 6 L8 2Z" fill="#3c4043"/></svg>
<div style="position:absolute;left:1864px;top:152px;width:56px;height:928px;background:#1f1f1f"></div>
<svg style="position:absolute;left:1880px;top:163px;" width="23" height="23" viewBox="0 0 23 23"><rect x="1" y="1" width="21" height="21" rx="2" fill="#4285f4"/><rect x="4" y="5" width="15" height="13" fill="#fff"/><text x="11.5" y="15.5" font-size="9" text-anchor="middle" fill="#1a73e8" font-family="Liberation Sans" font-weight="bold">31</text><path d="M1 18 H22 V20 A2 2 0 0 1 20 22 H3 A2 2 0 0 1 1 20Z" fill="#34a853"/><path d="M17 22 L22 17 V22Z" fill="#ea4335"/></svg>
<svg style="position:absolute;left:1880px;top:219px;" width="23" height="23" viewBox="0 0 23 23"><rect x="1" y="1" width="21" height="21" rx="2" fill="#fbbc04"/><circle cx="11.5" cy="10" r="4.2" fill="#fff"/><rect x="9.5" y="14" width="4" height="3" fill="#fff"/></svg>
<svg style="position:absolute;left:1880px;top:275px;" width="23" height="23" viewBox="0 0 23 23"><circle cx="11" cy="12" r="8" stroke="#4a8af4" stroke-width="3" fill="none"/><path d="M7 12 L10 15 L16 8" stroke="#4a8af4" stroke-width="2.6" fill="none"/><circle cx="18.5" cy="4.5" r="2.2" fill="#4a8af4"/></svg>
<svg style="position:absolute;left:1880px;top:332px;" width="23" height="23" viewBox="0 0 23 23"><circle cx="11.5" cy="6.5" r="4" fill="#4a8af4"/><path d="M3 20 A8.5 7 0 0 1 20 20 V21 H3Z" fill="#4a8af4"/><path d="M3 18 A8.5 6 0 0 1 11 13 V21 H3Z" fill="#2f6fd6"/></svg>
<svg style="position:absolute;left:1880px;top:386px;" width="23" height="25" viewBox="0 0 23 25"><path d="M11.5 1 A8.5 8.5 0 0 1 20 9.5 C20 15 11.5 23 11.5 23 C11.5 23 3 15 3 9.5 A8.5 8.5 0 0 1 11.5 1Z" fill="#ea4335"/><path d="M3 9.5 C3 15 11.5 23 11.5 23 L14 13Z" fill="#fbbc04"/><path d="M20 9.5 C20 15 11.5 23 11.5 23 L14 13Z" fill="#34a853"/><path d="M5 4 L11.5 9.5 L18 4 A8.5 8.5 0 0 0 5 4Z" fill="#4285f4"/><circle cx="11.5" cy="9.5" r="3.2" fill="#1f1f1f"/></svg>
<div style="position:absolute;left:1882px;top:443px;width:20px;height:1px;background:#444"></div>
<svg style="position:absolute;left:1882px;top:478px;" width="20" height="20" viewBox="0 0 20 20"><path d="M10 2 V18 M2 10 H18" stroke="#0d0d0d" stroke-width="1.8"/></svg>
<svg style="position:absolute;left:1884px;top:1045px;" width="14" height="14" viewBox="0 0 14 14"><path d="M4 2 L9 7 L4 12" stroke="#c8c8c8" stroke-width="1.8" fill="none"/></svg>
<div style="position:absolute;left:0px;top:1041px;width:1864px;height:39px;background:#1f1f1f"></div>
<div style="position:absolute;left:0px;top:1041px;width:1864px;height:1px;background:#3a3a3a"></div>
<svg style="position:absolute;left:54px;top:1055px;" width="16" height="16" viewBox="0 0 16 16"><path d="M8 2 V14 M2 8 H14" stroke="#c8c8c8" stroke-width="1.7"/></svg>
<svg style="position:absolute;left:93px;top:1055px;" width="18" height="16" viewBox="0 0 18 16"><path d="M2 3 H16 M2 8 H16 M2 13 H16" stroke="#c8c8c8" stroke-width="1.8"/></svg>
<div style="position:absolute;left:135px;top:1077px;width:79px;height:3px;background:#21c4e8"></div>
<div style="position:absolute;left:147px;top:1054.30px;line-height:17.4px;font-size:14.5px;color:#d8d8d8;font-weight:normal;white-space:nowrap;">Profil</div>
<svg style="position:absolute;left:193px;top:1061px;" width="10" height="6" viewBox="0 0 10 6"><path d="M0 0 H10 L5 5 Z" fill="#c8c8c8"/></svg>
<div style="position:absolute;left:215px;top:1043px;width:144px;height:37px;background:#2b2b2b"></div>
<div style="position:absolute;left:215px;top:1077px;width:144px;height:3px;background:#21c4e8"></div>
<svg style="position:absolute;left:227px;top:1054px;" width="14" height="18" viewBox="0 0 14 18"><rect x="1" y="7" width="12" height="10" rx="1.5" fill="#a8c7fa"/><path d="M3.5 7.5 V5 A3.5 3.5 0 0 1 10.5 5 V7.5" stroke="#a8c7fa" stroke-width="2" fill="none"/></svg>
<div style="position:absolute;left:248px;top:1054.30px;line-height:17.4px;font-size:14.5px;color:#a8c7fa;font-weight:bold;white-space:nowrap;">Cockpit.OS</div>
<svg style="position:absolute;left:339px;top:1061px;" width="10" height="6" viewBox="0 0 10 6"><path d="M0 0 H10 L5 5 Z" fill="#a8c7fa"/></svg>
<div style="position:absolute;left:372px;top:1054.30px;line-height:17.4px;font-size:14.5px;color:#d8d8d8;font-weight:normal;white-space:nowrap;">Live Training</div>
<svg style="position:absolute;left:470px;top:1061px;" width="10" height="6" viewBox="0 0 10 6"><path d="M0 0 H10 L5 5 Z" fill="#c8c8c8"/></svg>
<div style="position:absolute;left:504px;top:1054.30px;line-height:17.4px;font-size:14.5px;color:#d8d8d8;font-weight:normal;white-space:nowrap;">Backend</div>
<svg style="position:absolute;left:574px;top:1061px;" width="10" height="6" viewBox="0 0 10 6"><path d="M0 0 H10 L5 5 Z" fill="#c8c8c8"/></svg>
</body></html>
